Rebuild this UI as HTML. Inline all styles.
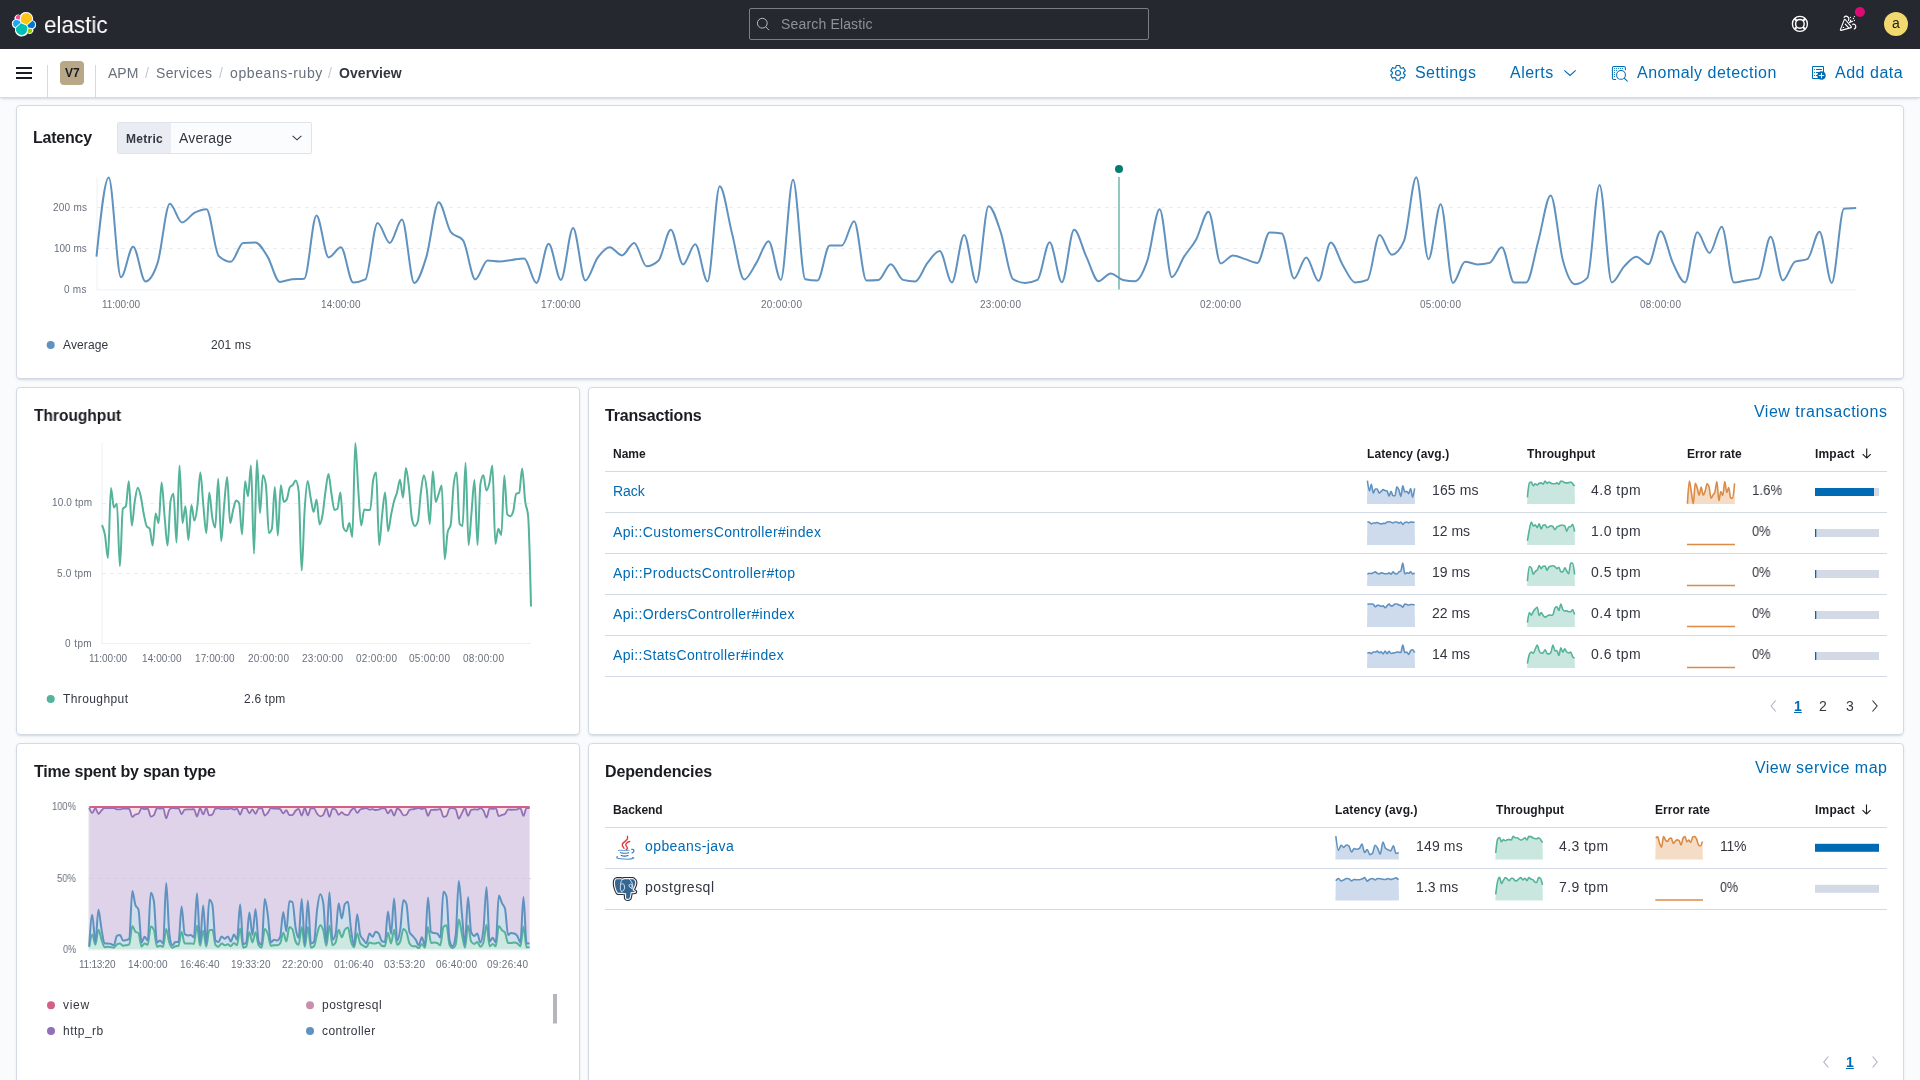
<!DOCTYPE html>
<html lang="en"><head><meta charset="utf-8"><title>opbeans-ruby - Services - APM - Elastic</title><style>
*{box-sizing:border-box}
html,body{margin:0;padding:0}
body{width:1920px;height:1080px;overflow:hidden;background:#fafbfd;font-family:"Liberation Sans",sans-serif;position:relative}
.t{position:absolute;white-space:pre;will-change:transform;font-family:"Liberation Sans",sans-serif}
.ov{position:absolute;left:0;top:0;pointer-events:none}
.abs{position:absolute}
.panel{position:absolute;background:#fff;border:1px solid #d3dae6;border-radius:4px;box-shadow:0 2px 2px -1px rgba(152,162,179,.3),0 1px 5px -2px rgba(152,162,179,.3)}
.hl{position:absolute;height:1px;background:#d3dae6}
</style></head><body>
<div class="abs" style="left:0;top:0;width:1920px;height:49px;background:#25282f"></div>
<div class="abs" style="left:749px;top:8px;width:400px;height:32px;border:1px solid #7b7e85;border-radius:2px;background:#25282f"></div>
<div class="abs" style="left:0;top:49px;width:1920px;height:49px;background:#fff;border-bottom:1px solid #d3dae6;box-shadow:0 2px 2px -1px rgba(152,162,179,.3),0 1px 5px -2px rgba(152,162,179,.3)"></div>
<div class="abs" style="left:47px;top:65px;width:1px;height:32px;background:#d3dae6"></div><div class="abs" style="left:95px;top:65px;width:1px;height:32px;background:#d3dae6"></div>
<div class="abs" style="left:60px;top:61px;width:24px;height:24px;border-radius:4px;background:#b9a888"></div>
<div class="panel" style="left:16px;top:105px;width:1888px;height:274px"></div>
<div class="panel" style="left:16px;top:387px;width:564px;height:348px"></div>
<div class="panel" style="left:588px;top:387px;width:1316px;height:348px"></div>
<div class="panel" style="left:16px;top:743px;width:564px;height:360px"></div>
<div class="panel" style="left:588px;top:743px;width:1316px;height:360px"></div>
<div class="abs" style="left:117px;top:122px;width:195px;height:32px;border:1px solid #dfe3ea;border-radius:2px;background:#fbfcfd"></div><div class="abs" style="left:118px;top:123px;width:53px;height:30px;background:#e9edf3"></div>
<div class="hl" style="left:605px;top:471px;width:1282px"></div><div class="hl" style="left:605px;top:512px;width:1282px"></div><div class="hl" style="left:605px;top:553px;width:1282px"></div><div class="hl" style="left:605px;top:594px;width:1282px"></div><div class="hl" style="left:605px;top:635px;width:1282px"></div><div class="hl" style="left:605px;top:676px;width:1282px"></div><div class="hl" style="left:605px;top:827px;width:1282px"></div><div class="hl" style="left:605px;top:868px;width:1282px"></div><div class="hl" style="left:605px;top:909px;width:1282px"></div>
<svg class="ov" width="1920" height="1080" viewBox="0 0 1920 1080"><line x1="97" y1="177" x2="97" y2="290" stroke="#eef0f3" stroke-width="1"/><line x1="96.5" y1="289.8" x2="1856" y2="289.8" stroke="#eef0f3" stroke-width="1"/><line x1="97" y1="207.5" x2="1856" y2="207.5" stroke="#eaecf0" stroke-width="1" stroke-dasharray="4 4"/><line x1="97" y1="248.5" x2="1856" y2="248.5" stroke="#eaecf0" stroke-width="1" stroke-dasharray="4 4"/><line x1="1119" y1="177" x2="1119" y2="289.5" stroke="#6fb5ac" stroke-width="1.5"/><circle cx="1119" cy="169" r="4" fill="#017d73"/><path d="M96.50,256.65C100.57,217.02,104.65,177.40,108.72,177.40C112.79,177.40,116.87,277.15,120.94,277.15C125.01,277.15,129.09,246.65,133.16,246.65C137.23,246.65,141.31,281.40,145.38,281.40C149.45,281.40,153.53,275.23,157.60,262.90C161.67,250.57,165.75,203.65,169.82,203.65C173.89,203.65,177.97,222.40,182.04,222.40C186.11,222.40,190.19,215.11,194.26,212.90C198.33,210.69,202.41,209.15,206.48,209.15C210.55,209.15,214.63,252.07,218.70,255.90C222.77,259.73,226.85,261.65,230.92,261.65C234.99,261.65,239.07,243.23,243.14,242.90C247.21,242.57,251.29,242.40,255.36,242.40C259.43,242.40,263.51,250.07,267.58,256.65C271.65,263.23,275.73,281.90,279.80,281.90C283.87,281.90,287.95,279.48,292.02,279.15C296.09,278.82,300.17,278.98,304.24,278.65C308.31,278.32,312.39,215.40,316.46,215.40C320.53,215.40,324.61,257.40,328.68,257.40C332.75,257.40,336.83,247.15,340.90,247.15C344.97,247.15,349.05,282.40,353.12,282.40C357.19,282.40,361.27,281.40,365.34,279.40C369.41,277.40,373.49,222.90,377.56,222.90C381.63,222.90,385.71,242.90,389.78,242.90C393.85,242.90,397.93,219.40,402.00,219.40C406.07,219.40,410.15,282.90,414.22,282.90C418.29,282.90,422.37,270.11,426.44,256.65C430.51,243.19,434.59,202.15,438.66,202.15C442.73,202.15,446.81,226.65,450.88,232.15C454.95,237.65,459.03,234.90,463.10,240.40C467.17,245.90,471.25,279.40,475.32,279.40C479.39,279.40,483.47,260.40,487.54,260.40C491.61,260.40,495.69,261.40,499.76,261.40C503.83,261.40,507.91,260.40,511.98,259.90C516.05,259.40,520.13,258.40,524.20,258.40C528.27,258.40,532.35,282.90,536.42,282.90C540.49,282.90,544.57,243.65,548.64,243.65C552.71,243.65,556.79,279.90,560.86,279.90C564.93,279.90,569.01,227.90,573.08,227.90C577.15,227.90,581.23,280.40,585.30,280.40C589.37,280.40,593.45,263.44,597.52,257.90C601.59,252.36,605.67,247.15,609.74,247.15C613.81,247.15,617.89,255.40,621.96,255.40C626.03,255.40,630.11,242.90,634.18,242.90C638.25,242.90,642.33,266.15,646.40,266.15C650.47,266.15,654.55,264.23,658.62,260.40C662.69,256.57,666.77,229.65,670.84,229.65C674.91,229.65,678.99,264.40,683.06,264.40C687.13,264.40,691.21,244.15,695.28,244.15C699.35,244.15,703.43,281.40,707.50,281.40C711.57,281.40,715.65,186.15,719.72,186.15C723.79,186.15,727.87,217.36,731.94,232.90C736.01,248.44,740.09,279.40,744.16,279.40C748.23,279.40,752.31,269.27,756.38,262.90C760.45,256.52,764.53,241.15,768.60,241.15C772.67,241.15,776.75,279.90,780.82,279.90C784.89,279.90,788.97,179.65,793.04,179.65C797.11,179.65,801.19,278.32,805.26,279.15C809.33,279.98,813.41,280.40,817.48,280.40C821.55,280.40,825.63,245.40,829.70,245.40C833.77,245.40,837.85,245.40,841.92,245.40C845.99,245.40,850.07,221.15,854.14,221.15C858.21,221.15,862.29,280.40,866.36,280.40C870.43,280.40,874.51,280.23,878.58,279.90C882.65,279.57,886.73,264.15,890.80,264.15C894.87,264.15,898.95,278.90,903.02,279.90C907.09,280.90,911.17,281.40,915.24,281.40C919.31,281.40,923.39,267.98,927.46,262.90C931.53,257.82,935.61,250.90,939.68,250.90C943.75,250.90,947.83,282.40,951.90,282.40C955.97,282.40,960.05,234.90,964.12,234.90C968.19,234.90,972.27,282.40,976.34,282.40C980.41,282.40,984.49,206.15,988.56,206.15C992.63,206.15,996.71,220.23,1000.78,232.40C1004.85,244.57,1008.93,276.65,1013.00,279.15C1017.07,281.65,1021.15,282.90,1025.22,282.90C1029.29,282.90,1033.37,281.90,1037.44,279.90C1041.51,277.90,1045.59,242.15,1049.66,242.15C1053.73,242.15,1057.81,282.15,1061.88,282.15C1065.95,282.15,1070.03,229.65,1074.10,229.65C1078.17,229.65,1082.25,248.07,1086.32,256.65C1090.39,265.23,1094.47,281.15,1098.54,281.15C1102.61,281.15,1106.69,273.40,1110.76,273.40C1114.83,273.40,1118.91,279.07,1122.98,279.90C1127.05,280.73,1131.13,281.15,1135.20,281.15C1139.27,281.15,1143.35,272.40,1147.42,260.40C1151.49,248.40,1155.57,209.15,1159.64,209.15C1163.71,209.15,1167.79,277.15,1171.86,277.15C1175.93,277.15,1180.01,262.98,1184.08,256.65C1188.15,250.32,1192.23,246.65,1196.30,239.15C1200.37,231.65,1204.45,211.65,1208.52,211.65C1212.59,211.65,1216.67,263.40,1220.74,263.40C1224.81,263.40,1228.89,255.40,1232.96,255.40C1237.03,255.40,1241.11,257.90,1245.18,259.15C1249.25,260.40,1253.33,262.90,1257.40,262.90C1261.47,262.90,1265.55,232.40,1269.62,232.40C1273.69,232.40,1277.77,232.73,1281.84,233.40C1285.91,234.07,1289.99,278.40,1294.06,278.40C1298.13,278.40,1302.21,257.40,1306.28,257.40C1310.35,257.40,1314.43,280.90,1318.50,280.90C1322.57,280.90,1326.65,242.40,1330.72,242.40C1334.79,242.40,1338.87,258.73,1342.94,265.40C1347.01,272.07,1351.09,282.40,1355.16,282.40C1359.23,282.40,1363.31,281.57,1367.38,279.90C1371.45,278.23,1375.53,234.90,1379.60,234.90C1383.67,234.90,1387.75,254.65,1391.82,254.65C1395.89,254.65,1399.97,250.07,1404.04,240.90C1408.11,231.73,1412.19,177.15,1416.26,177.15C1420.33,177.15,1424.41,259.15,1428.48,259.15C1432.55,259.15,1436.63,204.15,1440.70,204.15C1444.77,204.15,1448.85,282.90,1452.92,282.90C1456.99,282.90,1461.07,261.65,1465.14,261.65C1469.21,261.65,1473.29,264.40,1477.36,264.40C1481.43,264.40,1485.51,263.90,1489.58,262.90C1493.65,261.90,1497.73,247.15,1501.80,247.15C1505.87,247.15,1509.95,282.40,1514.02,282.40C1518.09,282.40,1522.17,282.40,1526.24,282.40C1530.31,282.40,1534.39,254.90,1538.46,240.40C1542.53,225.90,1546.61,195.40,1550.68,195.40C1554.75,195.40,1558.83,245.61,1562.90,260.40C1566.97,275.19,1571.05,284.15,1575.12,284.15C1579.19,284.15,1583.27,282.07,1587.34,277.90C1591.41,273.73,1595.49,184.90,1599.56,184.90C1603.63,184.90,1607.71,282.40,1611.78,282.40C1615.85,282.40,1619.93,270.94,1624.00,266.65C1628.07,262.36,1632.15,256.65,1636.22,256.65C1640.29,256.65,1644.37,264.15,1648.44,264.15C1652.51,264.15,1656.59,231.15,1660.66,231.15C1664.73,231.15,1668.81,254.36,1672.88,262.90C1676.95,271.44,1681.03,282.40,1685.10,282.40C1689.17,282.40,1693.25,232.15,1697.32,232.15C1701.39,232.15,1705.47,252.90,1709.54,252.90C1713.61,252.90,1717.69,226.65,1721.76,226.65C1725.83,226.65,1729.91,282.40,1733.98,282.40C1738.05,282.40,1742.13,281.07,1746.20,280.40C1750.27,279.73,1754.35,279.73,1758.42,278.40C1762.49,277.07,1766.57,236.65,1770.64,236.65C1774.71,236.65,1778.79,280.40,1782.86,280.40C1786.93,280.40,1791.01,263.32,1795.08,261.65C1799.15,259.98,1803.23,260.82,1807.30,259.15C1811.37,257.48,1815.45,231.65,1819.52,231.65C1823.59,231.65,1827.67,282.90,1831.74,282.90C1835.81,282.90,1839.89,209.15,1843.96,208.65C1848.03,208.15,1852.11,208.03,1856.18,207.90" fill="none" stroke="#6092c0" stroke-width="2" stroke-linejoin="round"/><circle cx="50.7" cy="345" r="4" fill="#6092c0"/></svg>
<svg class="ov" width="1920" height="1080" viewBox="0 0 1920 1080"><line x1="102" y1="443" x2="102" y2="644" stroke="#eef0f3" stroke-width="1"/><line x1="101.5" y1="643.5" x2="531" y2="643.5" stroke="#eef0f3" stroke-width="1"/><line x1="102" y1="503.5" x2="531" y2="503.5" stroke="#eaecf0" stroke-width="1" stroke-dasharray="4 4"/><line x1="102" y1="573.5" x2="531" y2="573.5" stroke="#eaecf0" stroke-width="1" stroke-dasharray="4 4"/><path d="M102.00,525.00C102.99,527.24,103.99,529.48,104.98,535.00C105.97,540.52,106.97,558.12,107.96,558.12C108.95,558.12,109.95,488.12,110.94,488.12C111.93,488.12,112.93,507.50,113.92,507.50C114.91,507.50,115.91,503.75,116.90,503.75C117.89,503.75,118.89,566.25,119.88,566.25C120.87,566.25,121.87,510.42,122.86,508.75C123.85,507.08,124.85,507.92,125.84,506.25C126.83,504.58,127.83,481.25,128.82,481.25C129.81,481.25,130.81,525.62,131.80,525.62C132.79,525.62,133.79,507.56,134.78,501.25C135.77,494.94,136.77,487.75,137.76,487.75C138.75,487.75,139.75,491.92,140.74,496.25C141.73,500.58,142.73,508.75,143.72,513.75C144.71,518.75,145.71,524.58,146.70,526.25C147.69,527.92,148.69,527.08,149.68,528.75C150.67,530.42,151.67,545.62,152.66,545.62C153.65,545.62,154.65,513.50,155.64,513.50C156.63,513.50,157.63,523.12,158.62,523.12C159.61,523.12,160.61,482.50,161.60,482.50C162.59,482.50,163.59,505.73,164.58,516.25C165.57,526.77,166.57,545.62,167.56,545.62C168.55,545.62,169.55,506.25,170.54,501.25C171.53,496.25,172.53,493.75,173.52,493.75C174.51,493.75,175.51,542.50,176.50,542.50C177.49,542.50,178.49,465.62,179.48,465.62C180.47,465.62,181.47,523.12,182.46,523.12C183.45,523.12,184.45,506.25,185.44,506.25C186.43,506.25,187.43,540.00,188.42,540.00C189.41,540.00,190.41,505.00,191.40,505.00C192.39,505.00,193.39,520.62,194.38,520.62C195.37,520.62,196.37,514.27,197.36,506.25C198.35,498.23,199.35,472.50,200.34,472.50C201.33,472.50,202.33,494.90,203.32,505.00C204.31,515.10,205.31,533.12,206.30,533.12C207.29,533.12,208.29,492.50,209.28,492.50C210.27,492.50,211.27,511.67,212.26,517.50C213.25,523.33,214.25,527.50,215.24,527.50C216.23,527.50,217.23,478.75,218.22,478.75C219.21,478.75,220.21,541.25,221.20,541.25C222.19,541.25,223.19,515.73,224.18,505.00C225.17,494.27,226.17,476.88,227.16,476.88C228.15,476.88,229.15,523.12,230.14,523.12C231.13,523.12,232.13,513.75,233.12,510.00C234.11,506.25,235.11,500.62,236.10,500.62C237.09,500.62,238.09,501.46,239.08,503.12C240.07,504.79,241.07,534.38,242.06,534.38C243.05,534.38,244.05,481.25,245.04,481.25C246.03,481.25,247.03,496.25,248.02,496.25C249.01,496.25,250.01,465.62,251.00,465.62C251.99,465.62,252.99,553.75,253.98,553.75C254.97,553.75,255.97,460.00,256.96,460.00C257.95,460.00,258.95,513.12,259.94,513.12C260.93,513.12,261.93,475.25,262.92,475.25C263.91,475.25,264.91,478.50,265.90,485.00C266.89,491.50,267.89,533.12,268.88,533.12C269.87,533.12,270.87,531.67,271.86,528.75C272.85,525.83,273.85,486.88,274.84,486.88C275.83,486.88,276.83,535.62,277.82,535.62C278.81,535.62,279.81,485.25,280.80,485.25C281.79,485.25,282.79,501.88,283.78,501.88C284.77,501.88,285.77,501.04,286.76,499.38C287.75,497.71,288.75,489.17,289.74,487.50C290.73,485.83,291.73,486.15,292.72,485.00C293.71,483.85,294.71,480.62,295.70,480.62C296.69,480.62,297.69,484.17,298.68,491.25C299.67,498.33,300.67,570.62,301.66,570.62C302.65,570.62,303.65,524.94,304.64,510.00C305.63,495.06,306.63,481.00,307.62,481.00C308.61,481.00,309.61,492.35,310.60,497.50C311.59,502.65,312.59,511.88,313.58,511.88C314.57,511.88,315.57,499.38,316.56,499.38C317.55,499.38,318.55,524.38,319.54,524.38C320.53,524.38,321.53,520.52,322.52,515.00C323.51,509.48,324.51,498.08,325.50,491.25C326.49,484.42,327.49,474.00,328.48,474.00C329.47,474.00,330.47,487.75,331.46,493.75C332.45,499.75,333.45,510.00,334.44,510.00C335.43,510.00,336.43,509.58,337.42,508.75C338.41,507.92,339.41,492.50,340.40,492.50C341.39,492.50,342.39,525.00,343.38,527.50C344.37,530.00,345.37,531.25,346.36,531.25C347.35,531.25,348.35,523.12,349.34,523.12C350.33,523.12,351.33,536.88,352.32,536.88C353.31,536.88,354.31,443.12,355.30,443.12C356.29,443.12,357.29,476.25,358.28,490.00C359.27,503.75,360.27,525.62,361.26,525.62C362.25,525.62,363.25,509.38,364.24,509.38C365.23,509.38,366.23,510.00,367.22,510.00C368.21,510.00,369.21,510.00,370.20,510.00C371.19,510.00,372.19,485.00,373.18,480.00C374.17,475.00,375.17,472.50,376.16,472.50C377.15,472.50,378.15,545.00,379.14,545.00C380.13,545.00,381.13,523.75,382.12,515.00C383.11,506.25,384.11,492.50,385.10,492.50C386.09,492.50,387.09,531.25,388.08,531.25C389.07,531.25,390.07,520.00,391.06,515.00C392.05,510.00,393.05,505.00,394.04,501.25C395.03,497.50,396.03,496.08,397.02,492.50C398.01,488.92,399.01,479.75,400.00,479.75C400.99,479.75,401.99,497.50,402.98,497.50C403.97,497.50,404.97,468.12,405.96,468.12C406.95,468.12,407.95,479.06,408.94,487.50C409.93,495.94,410.93,513.92,411.92,518.75C412.91,523.58,413.91,526.00,414.90,526.00C415.89,526.00,416.89,524.42,417.88,521.25C418.87,518.08,419.87,500.17,420.86,492.50C421.85,484.83,422.85,475.25,423.84,475.25C424.83,475.25,425.83,481.88,426.82,490.00C427.81,498.12,428.81,524.00,429.80,524.00C430.79,524.00,431.79,471.25,432.78,471.25C433.77,471.25,434.77,501.88,435.76,501.88C436.75,501.88,437.75,496.46,438.74,493.75C439.73,491.04,440.73,485.62,441.72,485.62C442.71,485.62,443.71,559.38,444.70,559.38C445.69,559.38,446.69,536.46,447.68,531.88C448.67,527.29,449.67,529.58,450.66,525.00C451.65,520.42,452.65,493.33,453.64,485.00C454.63,476.67,455.63,472.50,456.62,472.50C457.61,472.50,458.61,522.25,459.60,523.75C460.59,525.25,461.59,526.00,462.58,526.00C463.57,526.00,464.57,462.75,465.56,462.75C466.55,462.75,467.55,545.00,468.54,545.00C469.53,545.00,470.53,523.33,471.52,512.50C472.51,501.67,473.51,480.00,474.50,480.00C475.49,480.00,476.49,545.00,477.48,545.00C478.47,545.00,479.47,489.42,480.46,483.75C481.45,478.08,482.45,475.25,483.44,475.25C484.43,475.25,485.43,490.62,486.42,490.62C487.41,490.62,488.41,487.29,489.40,483.12C490.39,478.96,491.39,465.62,492.38,465.62C493.37,465.62,494.37,543.75,495.36,543.75C496.35,543.75,497.35,528.75,498.34,528.75C499.33,528.75,500.33,535.00,501.32,535.00C502.31,535.00,503.31,475.62,504.30,475.62C505.29,475.62,506.29,513.12,507.28,514.38C508.27,515.62,509.27,516.25,510.26,516.25C511.25,516.25,512.25,514.58,513.24,511.25C514.23,507.92,515.23,494.42,516.22,493.75C517.21,493.08,518.21,493.42,519.20,492.75C520.19,492.08,521.19,468.50,522.18,468.50C523.17,468.50,524.17,493.29,525.16,501.25C526.15,509.21,527.15,506.25,528.14,516.25C529.09,525.85,530.05,566.17,531.00,606.50" fill="none" stroke="#54b399" stroke-width="2" stroke-linejoin="round"/><circle cx="50.7" cy="699" r="4" fill="#54b399"/></svg>
<svg class="ov" width="1920" height="1080" viewBox="0 0 1920 1080"><path d="M89.20,807.10C90.23,807.10,91.25,807.10,92.28,807.10C93.31,807.10,94.33,807.10,95.36,807.10C96.39,807.10,97.41,807.10,98.44,807.10C99.47,807.10,100.49,807.10,101.52,807.10C102.55,807.10,103.57,807.10,104.60,807.10C105.63,807.10,106.65,807.10,107.68,807.10C108.71,807.10,109.73,807.10,110.76,807.10C111.79,807.10,112.81,807.10,113.84,807.10C114.87,807.10,115.89,807.10,116.92,807.10C117.95,807.10,118.97,807.10,120.00,807.10C121.03,807.10,122.05,807.10,123.08,807.10C124.11,807.10,125.13,807.10,126.16,807.10C127.19,807.10,128.21,807.10,129.24,807.10C130.27,807.10,131.29,807.10,132.32,807.10C133.35,807.10,134.37,807.10,135.40,807.10C136.43,807.10,137.45,807.10,138.48,807.10C139.51,807.10,140.53,807.10,141.56,807.10C142.59,807.10,143.61,807.10,144.64,807.10C145.67,807.10,146.69,807.10,147.72,807.10C148.75,807.10,149.77,807.10,150.80,807.10C151.83,807.10,152.85,807.10,153.88,807.10C154.91,807.10,155.93,807.10,156.96,807.10C157.99,807.10,159.01,807.10,160.04,807.10C161.07,807.10,162.09,807.10,163.12,807.10C164.15,807.10,165.17,807.10,166.20,807.10C167.23,807.10,168.25,807.10,169.28,807.10C170.31,807.10,171.33,807.10,172.36,807.10C173.39,807.10,174.41,807.10,175.44,807.10C176.47,807.10,177.49,807.10,178.52,807.10C179.55,807.10,180.57,807.10,181.60,807.10C182.63,807.10,183.65,807.10,184.68,807.10C185.71,807.10,186.73,807.10,187.76,807.10C188.79,807.10,189.81,807.10,190.84,807.10C191.87,807.10,192.89,807.10,193.92,807.10C194.95,807.10,195.97,807.10,197.00,807.10C198.03,807.10,199.05,807.10,200.08,807.10C201.11,807.10,202.13,807.10,203.16,807.10C204.19,807.10,205.21,807.10,206.24,807.10C207.27,807.10,208.29,807.10,209.32,807.10C210.35,807.10,211.37,807.10,212.40,807.10C213.43,807.10,214.45,807.10,215.48,807.10C216.51,807.10,217.53,807.10,218.56,807.10C219.59,807.10,220.61,807.10,221.64,807.10C222.67,807.10,223.69,807.10,224.72,807.10C225.75,807.10,226.77,807.10,227.80,807.10C228.83,807.10,229.85,807.10,230.88,807.10C231.91,807.10,232.93,807.10,233.96,807.10C234.99,807.10,236.01,807.10,237.04,807.10C238.07,807.10,239.09,807.10,240.12,807.10C241.15,807.10,242.17,807.10,243.20,807.10C244.23,807.10,245.25,807.10,246.28,807.10C247.31,807.10,248.33,807.10,249.36,807.10C250.39,807.10,251.41,807.10,252.44,807.10C253.47,807.10,254.49,807.10,255.52,807.10C256.55,807.10,257.57,807.10,258.60,807.10C259.63,807.10,260.65,807.10,261.68,807.10C262.71,807.10,263.73,807.10,264.76,807.10C265.79,807.10,266.81,807.10,267.84,807.10C268.87,807.10,269.89,807.10,270.92,807.10C271.95,807.10,272.97,807.10,274.00,807.10C275.03,807.10,276.05,807.10,277.08,807.10C278.11,807.10,279.13,807.10,280.16,807.10C281.19,807.10,282.21,807.10,283.24,807.10C284.27,807.10,285.29,807.10,286.32,807.10C287.35,807.10,288.37,807.10,289.40,807.10C290.43,807.10,291.45,807.10,292.48,807.10C293.51,807.10,294.53,807.10,295.56,807.10C296.59,807.10,297.61,807.10,298.64,807.10C299.67,807.10,300.69,807.10,301.72,807.10C302.75,807.10,303.77,807.10,304.80,807.10C305.83,807.10,306.85,807.10,307.88,807.10C308.91,807.10,309.93,807.10,310.96,807.10C311.99,807.10,313.01,807.10,314.04,807.10C315.07,807.10,316.09,807.10,317.12,807.10C318.15,807.10,319.17,807.10,320.20,807.10C321.23,807.10,322.25,807.10,323.28,807.10C324.31,807.10,325.33,807.10,326.36,807.10C327.39,807.10,328.41,807.10,329.44,807.10C330.47,807.10,331.49,807.10,332.52,807.10C333.55,807.10,334.57,807.10,335.60,807.10C336.63,807.10,337.65,807.10,338.68,807.10C339.71,807.10,340.73,807.10,341.76,807.10C342.79,807.10,343.81,807.10,344.84,807.10C345.87,807.10,346.89,807.10,347.92,807.10C348.95,807.10,349.97,807.10,351.00,807.10C352.03,807.10,353.05,807.10,354.08,807.10C355.11,807.10,356.13,807.10,357.16,807.10C358.19,807.10,359.21,807.10,360.24,807.10C361.27,807.10,362.29,807.10,363.32,807.10C364.35,807.10,365.37,807.10,366.40,807.10C367.43,807.10,368.45,807.10,369.48,807.10C370.51,807.10,371.53,807.10,372.56,807.10C373.59,807.10,374.61,807.10,375.64,807.10C376.67,807.10,377.69,807.10,378.72,807.10C379.75,807.10,380.77,807.10,381.80,807.10C382.83,807.10,383.85,807.10,384.88,807.10C385.91,807.10,386.93,807.10,387.96,807.10C388.99,807.10,390.01,807.10,391.04,807.10C392.07,807.10,393.09,807.10,394.12,807.10C395.15,807.10,396.17,807.10,397.20,807.10C398.23,807.10,399.25,807.10,400.28,807.10C401.31,807.10,402.33,807.10,403.36,807.10C404.39,807.10,405.41,807.10,406.44,807.10C407.47,807.10,408.49,807.10,409.52,807.10C410.55,807.10,411.57,807.10,412.60,807.10C413.63,807.10,414.65,807.10,415.68,807.10C416.71,807.10,417.73,807.10,418.76,807.10C419.79,807.10,420.81,807.10,421.84,807.10C422.87,807.10,423.89,807.10,424.92,807.10C425.95,807.10,426.97,807.10,428.00,807.10C429.03,807.10,430.05,807.10,431.08,807.10C432.11,807.10,433.13,807.10,434.16,807.10C435.19,807.10,436.21,807.10,437.24,807.10C438.27,807.10,439.29,807.10,440.32,807.10C441.35,807.10,442.37,807.10,443.40,807.10C444.43,807.10,445.45,807.10,446.48,807.10C447.51,807.10,448.53,807.10,449.56,807.10C450.59,807.10,451.61,807.10,452.64,807.10C453.67,807.10,454.69,807.10,455.72,807.10C456.75,807.10,457.77,807.10,458.80,807.10C459.83,807.10,460.85,807.10,461.88,807.10C462.91,807.10,463.93,807.10,464.96,807.10C465.99,807.10,467.01,807.10,468.04,807.10C469.07,807.10,470.09,807.10,471.12,807.10C472.15,807.10,473.17,807.10,474.20,807.10C475.23,807.10,476.25,807.10,477.28,807.10C478.31,807.10,479.33,807.10,480.36,807.10C481.39,807.10,482.41,807.10,483.44,807.10C484.47,807.10,485.49,807.10,486.52,807.10C487.55,807.10,488.57,807.10,489.60,807.10C490.63,807.10,491.65,807.10,492.68,807.10C493.71,807.10,494.73,807.10,495.76,807.10C496.79,807.10,497.81,807.10,498.84,807.10C499.87,807.10,500.89,807.10,501.92,807.10C502.95,807.10,503.97,807.10,505.00,807.10C506.03,807.10,507.05,807.10,508.08,807.10C509.11,807.10,510.13,807.10,511.16,807.10C512.19,807.10,513.21,807.10,514.24,807.10C515.27,807.10,516.29,807.10,517.32,807.10C518.35,807.10,519.37,807.10,520.40,807.10C521.43,807.10,522.45,807.10,523.48,807.10C524.51,807.10,525.53,807.10,526.56,807.10C527.59,807.10,528.61,807.10,529.64,807.10L529.64,808.02C528.61,808.02,527.59,808.02,526.56,808.02C525.53,808.02,524.51,815.90,523.48,815.90C522.45,815.90,521.43,808.18,520.40,808.18C519.37,808.18,518.35,809.04,517.32,809.29C516.29,809.54,515.27,809.64,514.24,809.69C513.21,809.74,512.19,809.77,511.16,809.77C510.13,809.77,509.11,809.45,508.08,809.45C507.05,809.45,506.03,813.28,505.00,813.91C503.97,814.55,502.95,814.50,501.92,814.87C500.89,815.24,499.87,816.14,498.84,816.14C497.81,816.14,496.79,808.18,495.76,808.18C494.73,808.18,493.71,808.97,492.68,808.97C491.65,808.97,490.63,808.33,489.60,808.33C488.57,808.33,487.55,817.58,486.52,817.58C485.49,817.58,484.47,811.89,483.44,810.41C482.41,808.92,481.39,808.18,480.36,808.18C479.33,808.18,478.31,809.69,477.28,809.69C476.25,809.69,475.23,809.29,474.20,809.29C473.17,809.29,472.15,809.50,471.12,809.93C470.09,810.35,469.07,815.90,468.04,815.90C467.01,815.90,465.99,808.00,464.96,808.00C463.93,808.00,462.91,811.35,461.88,813.12C460.85,814.88,459.83,818.61,458.80,818.61C457.77,818.61,456.75,810.42,455.72,809.45C454.69,808.48,453.67,808.00,452.64,808.00C451.61,808.00,450.59,808.16,449.56,808.49C448.53,808.82,447.51,815.45,446.48,815.98C445.45,816.52,444.43,816.78,443.40,816.78C442.37,816.78,441.35,808.97,440.32,808.97C439.29,808.97,438.27,809.64,437.24,809.69C436.21,809.74,435.19,809.73,434.16,809.77C433.13,809.81,432.11,809.82,431.08,809.93C430.05,810.03,429.03,815.83,428.00,815.83C426.97,815.83,425.95,808.00,424.92,808.00C423.89,808.00,422.87,809.05,421.84,809.05C420.81,809.05,419.79,808.00,418.76,808.00C417.73,808.00,416.71,808.44,415.68,808.65C414.65,808.87,413.63,809.08,412.60,809.29C411.57,809.50,410.55,809.50,409.52,809.93C408.49,810.35,407.47,814.28,406.44,814.71C405.41,815.13,404.39,815.35,403.36,815.35C402.33,815.35,401.31,811.55,400.28,810.41C399.25,809.26,398.23,808.49,397.20,808.49C396.17,808.49,395.15,815.67,394.12,815.67C393.09,815.67,392.07,809.61,391.04,809.61C390.01,809.61,388.99,813.43,387.96,813.43C386.93,813.43,385.91,808.25,384.88,808.25C383.85,808.25,382.83,808.31,381.80,808.41C380.77,808.52,379.75,809.48,378.72,809.69C377.69,809.90,376.67,810.01,375.64,810.01C374.61,810.01,373.59,809.13,372.56,809.13C371.53,809.13,370.51,809.69,369.48,809.69C368.45,809.69,367.43,808.02,366.40,808.02C365.37,808.02,364.35,808.41,363.32,808.65C362.29,808.89,361.27,808.92,360.24,809.45C359.21,809.98,358.19,812.96,357.16,812.96C356.13,812.96,355.11,808.00,354.08,808.00C353.05,808.00,352.03,809.22,351.00,810.41C349.97,811.59,348.95,815.11,347.92,815.11C346.89,815.11,345.87,814.98,344.84,814.71C343.81,814.44,342.79,812.24,341.76,812.24C340.73,812.24,339.71,814.79,338.68,814.79C337.65,814.79,336.63,810.25,335.60,809.61C334.57,808.97,333.55,808.65,332.52,808.65C331.49,808.65,330.47,816.70,329.44,816.70C328.41,816.70,327.39,808.18,326.36,808.18C325.33,808.18,324.31,813.86,323.28,814.87C322.25,815.88,321.23,816.38,320.20,816.38C319.17,816.38,318.15,815.09,317.12,813.75C316.09,812.41,315.07,808.55,314.04,808.33C313.01,808.12,311.99,808.02,310.96,808.02C309.93,808.02,308.91,815.27,307.88,815.27C306.85,815.27,305.83,808.00,304.80,808.00C303.77,808.00,302.75,815.59,301.72,815.59C300.69,815.59,299.67,808.97,298.64,808.97C297.61,808.97,296.59,809.72,295.56,810.73C294.53,811.73,293.51,814.92,292.48,815.03C291.45,815.13,290.43,815.19,289.40,815.19C288.37,815.19,287.35,810.09,286.32,810.09C285.29,810.09,284.27,813.35,283.24,813.35C282.21,813.35,281.19,809.56,280.16,809.13C279.13,808.71,278.11,808.49,277.08,808.49C276.05,808.49,275.03,808.65,274.00,808.65C272.97,808.65,271.95,808.18,270.92,808.18C269.89,808.18,268.87,811.56,267.84,812.80C266.81,814.03,265.79,815.59,264.76,815.59C263.73,815.59,262.71,808.00,261.68,808.00C260.65,808.00,259.63,808.11,258.60,808.33C257.57,808.56,256.55,813.83,255.52,813.83C254.49,813.83,253.47,809.45,252.44,809.45C251.41,809.45,250.39,813.28,249.36,813.28C248.33,813.28,247.31,808.29,246.28,808.18C245.25,808.06,244.23,808.00,243.20,808.00C242.17,808.00,241.15,814.63,240.12,814.63C239.09,814.63,238.07,808.65,237.04,808.65C236.01,808.65,234.99,809.53,233.96,809.53C232.93,809.53,231.91,808.33,230.88,808.33C229.85,808.33,228.83,809.21,227.80,809.21C226.77,809.21,225.75,808.81,224.72,808.81C223.69,808.81,222.67,809.21,221.64,809.21C220.61,809.21,219.59,808.25,218.56,808.25C217.53,808.25,216.51,808.33,215.48,808.49C214.45,808.65,213.43,813.97,212.40,814.55C211.37,815.13,210.35,815.43,209.32,815.43C208.29,815.43,207.27,808.00,206.24,808.00C205.21,808.00,204.19,814.47,203.16,814.47C202.13,814.47,201.11,808.18,200.08,808.18C199.05,808.18,198.03,816.54,197.00,816.54C195.97,816.54,194.95,809.05,193.92,809.05C192.89,809.05,191.87,809.45,190.84,809.45C189.81,809.45,188.79,809.37,187.76,809.37C186.73,809.37,185.71,809.45,184.68,809.61C183.65,809.77,182.63,814.31,181.60,814.31C180.57,814.31,179.55,808.25,178.52,808.25C177.49,808.25,176.47,808.25,175.44,808.25C174.41,808.25,173.39,808.00,172.36,808.00C171.33,808.00,170.31,808.59,169.28,809.77C168.25,810.95,167.23,818.30,166.20,818.30C165.17,818.30,164.15,808.02,163.12,808.02C162.09,808.02,161.07,808.49,160.04,808.49C159.01,808.49,157.99,808.18,156.96,808.18C155.93,808.18,154.91,814.23,153.88,815.19C152.85,816.14,151.83,816.62,150.80,816.62C149.77,816.62,148.75,808.49,147.72,808.49C146.69,808.49,145.67,809.13,144.64,809.13C143.61,809.13,142.59,808.18,141.56,808.18C140.53,808.18,139.51,813.22,138.48,813.75C137.45,814.28,136.43,814.02,135.40,814.55C134.37,815.08,133.35,816.94,132.32,816.94C131.29,816.94,130.27,808.97,129.24,808.81C128.21,808.65,127.19,808.63,126.16,808.57C125.13,808.52,124.11,808.49,123.08,808.49C122.05,808.49,121.03,809.45,120.00,809.45C118.97,809.45,117.95,809.40,116.92,809.29C115.89,809.18,114.87,808.00,113.84,808.00C112.81,808.00,111.79,808.00,110.76,808.00C109.73,808.00,108.71,808.02,107.68,808.02C106.65,808.02,105.63,808.02,104.60,808.02C103.57,808.02,102.55,809.45,101.52,810.41C100.49,811.36,99.47,813.75,98.44,813.75C97.41,813.75,96.39,808.18,95.36,808.18C94.33,808.18,93.31,812.88,92.28,812.88C91.25,812.88,90.23,810.44,89.20,808.00Z" fill="#f3dfe7"/><path d="M89.20,808.00C90.23,810.44,91.25,812.88,92.28,812.88C93.31,812.88,94.33,808.18,95.36,808.18C96.39,808.18,97.41,813.75,98.44,813.75C99.47,813.75,100.49,811.36,101.52,810.41C102.55,809.45,103.57,808.02,104.60,808.02C105.63,808.02,106.65,808.02,107.68,808.02C108.71,808.02,109.73,808.00,110.76,808.00C111.79,808.00,112.81,808.00,113.84,808.00C114.87,808.00,115.89,809.18,116.92,809.29C117.95,809.40,118.97,809.45,120.00,809.45C121.03,809.45,122.05,808.49,123.08,808.49C124.11,808.49,125.13,808.52,126.16,808.57C127.19,808.63,128.21,808.65,129.24,808.81C130.27,808.97,131.29,816.94,132.32,816.94C133.35,816.94,134.37,815.08,135.40,814.55C136.43,814.02,137.45,814.28,138.48,813.75C139.51,813.22,140.53,808.18,141.56,808.18C142.59,808.18,143.61,809.13,144.64,809.13C145.67,809.13,146.69,808.49,147.72,808.49C148.75,808.49,149.77,816.62,150.80,816.62C151.83,816.62,152.85,816.14,153.88,815.19C154.91,814.23,155.93,808.18,156.96,808.18C157.99,808.18,159.01,808.49,160.04,808.49C161.07,808.49,162.09,808.02,163.12,808.02C164.15,808.02,165.17,818.30,166.20,818.30C167.23,818.30,168.25,810.95,169.28,809.77C170.31,808.59,171.33,808.00,172.36,808.00C173.39,808.00,174.41,808.25,175.44,808.25C176.47,808.25,177.49,808.25,178.52,808.25C179.55,808.25,180.57,814.31,181.60,814.31C182.63,814.31,183.65,809.77,184.68,809.61C185.71,809.45,186.73,809.37,187.76,809.37C188.79,809.37,189.81,809.45,190.84,809.45C191.87,809.45,192.89,809.05,193.92,809.05C194.95,809.05,195.97,816.54,197.00,816.54C198.03,816.54,199.05,808.18,200.08,808.18C201.11,808.18,202.13,814.47,203.16,814.47C204.19,814.47,205.21,808.00,206.24,808.00C207.27,808.00,208.29,815.43,209.32,815.43C210.35,815.43,211.37,815.13,212.40,814.55C213.43,813.97,214.45,808.65,215.48,808.49C216.51,808.33,217.53,808.25,218.56,808.25C219.59,808.25,220.61,809.21,221.64,809.21C222.67,809.21,223.69,808.81,224.72,808.81C225.75,808.81,226.77,809.21,227.80,809.21C228.83,809.21,229.85,808.33,230.88,808.33C231.91,808.33,232.93,809.53,233.96,809.53C234.99,809.53,236.01,808.65,237.04,808.65C238.07,808.65,239.09,814.63,240.12,814.63C241.15,814.63,242.17,808.00,243.20,808.00C244.23,808.00,245.25,808.06,246.28,808.18C247.31,808.29,248.33,813.28,249.36,813.28C250.39,813.28,251.41,809.45,252.44,809.45C253.47,809.45,254.49,813.83,255.52,813.83C256.55,813.83,257.57,808.56,258.60,808.33C259.63,808.11,260.65,808.00,261.68,808.00C262.71,808.00,263.73,815.59,264.76,815.59C265.79,815.59,266.81,814.03,267.84,812.80C268.87,811.56,269.89,808.18,270.92,808.18C271.95,808.18,272.97,808.65,274.00,808.65C275.03,808.65,276.05,808.49,277.08,808.49C278.11,808.49,279.13,808.71,280.16,809.13C281.19,809.56,282.21,813.35,283.24,813.35C284.27,813.35,285.29,810.09,286.32,810.09C287.35,810.09,288.37,815.19,289.40,815.19C290.43,815.19,291.45,815.13,292.48,815.03C293.51,814.92,294.53,811.73,295.56,810.73C296.59,809.72,297.61,808.97,298.64,808.97C299.67,808.97,300.69,815.59,301.72,815.59C302.75,815.59,303.77,808.00,304.80,808.00C305.83,808.00,306.85,815.27,307.88,815.27C308.91,815.27,309.93,808.02,310.96,808.02C311.99,808.02,313.01,808.12,314.04,808.33C315.07,808.55,316.09,812.41,317.12,813.75C318.15,815.09,319.17,816.38,320.20,816.38C321.23,816.38,322.25,815.88,323.28,814.87C324.31,813.86,325.33,808.18,326.36,808.18C327.39,808.18,328.41,816.70,329.44,816.70C330.47,816.70,331.49,808.65,332.52,808.65C333.55,808.65,334.57,808.97,335.60,809.61C336.63,810.25,337.65,814.79,338.68,814.79C339.71,814.79,340.73,812.24,341.76,812.24C342.79,812.24,343.81,814.44,344.84,814.71C345.87,814.98,346.89,815.11,347.92,815.11C348.95,815.11,349.97,811.59,351.00,810.41C352.03,809.22,353.05,808.00,354.08,808.00C355.11,808.00,356.13,812.96,357.16,812.96C358.19,812.96,359.21,809.98,360.24,809.45C361.27,808.92,362.29,808.89,363.32,808.65C364.35,808.41,365.37,808.02,366.40,808.02C367.43,808.02,368.45,809.69,369.48,809.69C370.51,809.69,371.53,809.13,372.56,809.13C373.59,809.13,374.61,810.01,375.64,810.01C376.67,810.01,377.69,809.90,378.72,809.69C379.75,809.48,380.77,808.52,381.80,808.41C382.83,808.31,383.85,808.25,384.88,808.25C385.91,808.25,386.93,813.43,387.96,813.43C388.99,813.43,390.01,809.61,391.04,809.61C392.07,809.61,393.09,815.67,394.12,815.67C395.15,815.67,396.17,808.49,397.20,808.49C398.23,808.49,399.25,809.26,400.28,810.41C401.31,811.55,402.33,815.35,403.36,815.35C404.39,815.35,405.41,815.13,406.44,814.71C407.47,814.28,408.49,810.35,409.52,809.93C410.55,809.50,411.57,809.50,412.60,809.29C413.63,809.08,414.65,808.87,415.68,808.65C416.71,808.44,417.73,808.00,418.76,808.00C419.79,808.00,420.81,809.05,421.84,809.05C422.87,809.05,423.89,808.00,424.92,808.00C425.95,808.00,426.97,815.83,428.00,815.83C429.03,815.83,430.05,810.03,431.08,809.93C432.11,809.82,433.13,809.81,434.16,809.77C435.19,809.73,436.21,809.74,437.24,809.69C438.27,809.64,439.29,808.97,440.32,808.97C441.35,808.97,442.37,816.78,443.40,816.78C444.43,816.78,445.45,816.52,446.48,815.98C447.51,815.45,448.53,808.82,449.56,808.49C450.59,808.16,451.61,808.00,452.64,808.00C453.67,808.00,454.69,808.48,455.72,809.45C456.75,810.42,457.77,818.61,458.80,818.61C459.83,818.61,460.85,814.88,461.88,813.12C462.91,811.35,463.93,808.00,464.96,808.00C465.99,808.00,467.01,815.90,468.04,815.90C469.07,815.90,470.09,810.35,471.12,809.93C472.15,809.50,473.17,809.29,474.20,809.29C475.23,809.29,476.25,809.69,477.28,809.69C478.31,809.69,479.33,808.18,480.36,808.18C481.39,808.18,482.41,808.92,483.44,810.41C484.47,811.89,485.49,817.58,486.52,817.58C487.55,817.58,488.57,808.33,489.60,808.33C490.63,808.33,491.65,808.97,492.68,808.97C493.71,808.97,494.73,808.18,495.76,808.18C496.79,808.18,497.81,816.14,498.84,816.14C499.87,816.14,500.89,815.24,501.92,814.87C502.95,814.50,503.97,814.55,505.00,813.91C506.03,813.28,507.05,809.45,508.08,809.45C509.11,809.45,510.13,809.77,511.16,809.77C512.19,809.77,513.21,809.74,514.24,809.69C515.27,809.64,516.29,809.54,517.32,809.29C518.35,809.04,519.37,808.18,520.40,808.18C521.43,808.18,522.45,815.90,523.48,815.90C524.51,815.90,525.53,808.02,526.56,808.02C527.59,808.02,528.61,808.02,529.64,808.02L529.64,943.41C528.61,943.41,527.59,943.41,526.56,943.41C525.53,943.41,524.51,897.00,523.48,897.00C522.45,897.00,521.43,942.47,520.40,942.47C519.37,942.47,518.35,937.39,517.32,935.91C516.29,934.42,515.27,933.88,514.24,933.56C513.21,933.25,512.19,933.09,511.16,933.09C510.13,933.09,509.11,934.97,508.08,934.97C507.05,934.97,506.03,912.47,505.00,908.72C503.97,904.97,502.95,905.28,501.92,903.10C500.89,900.91,499.87,895.60,498.84,895.60C497.81,895.60,496.79,942.47,495.76,942.47C494.73,942.47,493.71,937.78,492.68,937.78C491.65,937.78,490.63,941.53,489.60,941.53C488.57,941.53,487.55,887.16,486.52,887.16C485.49,887.16,484.47,920.59,483.44,929.34C482.41,938.09,481.39,942.47,480.36,942.47C479.33,942.47,478.31,933.56,477.28,933.56C476.25,933.56,475.23,935.91,474.20,935.91C473.17,935.91,472.15,934.66,471.12,932.16C470.09,929.66,469.07,897.00,468.04,897.00C467.01,897.00,465.99,944.34,464.96,944.34C463.93,944.34,462.91,923.95,461.88,913.41C460.85,902.86,459.83,881.06,458.80,881.06C457.77,881.06,456.75,927.47,455.72,934.97C454.69,942.47,453.67,946.22,452.64,946.22C451.61,946.22,450.59,944.34,449.56,940.59C448.53,936.84,447.51,899.66,446.48,896.53C445.45,893.41,444.43,891.85,443.40,891.85C442.37,891.85,441.35,937.78,440.32,937.78C439.29,937.78,438.27,933.88,437.24,933.56C436.21,933.25,435.19,933.33,434.16,933.09C433.13,932.86,432.11,932.78,431.08,932.16C430.05,931.53,429.03,897.47,428.00,897.47C426.97,897.47,425.95,945.28,424.92,945.28C423.89,945.28,422.87,937.31,421.84,937.31C420.81,937.31,419.79,945.28,418.76,945.28C417.73,945.28,416.71,941.22,415.68,939.66C414.65,938.09,413.63,937.16,412.60,935.91C411.57,934.66,410.55,934.66,409.52,932.16C408.49,929.66,407.47,906.53,406.44,904.03C405.41,901.53,404.39,900.28,403.36,900.28C402.33,900.28,401.31,922.63,400.28,929.34C399.25,936.06,398.23,940.59,397.20,940.59C396.17,940.59,395.15,898.41,394.12,898.41C393.09,898.41,392.07,934.03,391.04,934.03C390.01,934.03,388.99,911.53,387.96,911.53C386.93,911.53,385.91,942.00,384.88,942.00C383.85,942.00,382.83,941.69,381.80,941.06C380.77,940.44,379.75,934.81,378.72,933.56C377.69,932.31,376.67,931.69,375.64,931.69C374.61,931.69,373.59,936.84,372.56,936.84C371.53,936.84,370.51,933.56,369.48,933.56C368.45,933.56,367.43,943.41,366.40,943.41C365.37,943.41,364.35,941.06,363.32,939.66C362.29,938.25,361.27,938.09,360.24,934.97C359.21,931.84,358.19,914.34,357.16,914.34C356.13,914.34,355.11,945.28,354.08,945.28C353.05,945.28,352.03,936.61,351.00,929.34C349.97,922.08,348.95,901.69,347.92,901.69C346.89,901.69,345.87,902.47,344.84,904.03C343.81,905.60,342.79,918.56,341.76,918.56C340.73,918.56,339.71,903.56,338.68,903.56C337.65,903.56,336.63,930.28,335.60,934.03C334.57,937.78,333.55,939.66,332.52,939.66C331.49,939.66,330.47,892.31,329.44,892.31C328.41,892.31,327.39,942.47,326.36,942.47C325.33,942.47,324.31,909.03,323.28,903.10C322.25,897.16,321.23,894.19,320.20,894.19C319.17,894.19,318.15,901.77,317.12,909.66C316.09,917.55,315.07,940.28,314.04,941.53C313.01,942.78,311.99,943.41,310.96,943.41C309.93,943.41,308.91,900.75,307.88,900.75C306.85,900.75,305.83,944.34,304.80,944.34C303.77,944.34,302.75,898.88,301.72,898.88C300.69,898.88,299.67,937.78,298.64,937.78C297.61,937.78,296.59,933.41,295.56,927.47C294.53,921.53,293.51,902.78,292.48,902.16C291.45,901.53,290.43,901.22,289.40,901.22C288.37,901.22,287.35,931.22,286.32,931.22C285.29,931.22,284.27,912.00,283.24,912.00C282.21,912.00,281.19,934.34,280.16,936.84C279.13,939.34,278.11,940.59,277.08,940.59C276.05,940.59,275.03,939.66,274.00,939.66C272.97,939.66,271.95,942.47,270.92,942.47C269.89,942.47,268.87,922.55,267.84,915.28C266.81,908.02,265.79,898.88,264.76,898.88C263.73,898.88,262.71,944.81,261.68,944.81C260.65,944.81,259.63,943.72,258.60,941.53C257.57,939.34,256.55,909.19,255.52,909.19C254.49,909.19,253.47,934.97,252.44,934.97C251.41,934.97,250.39,912.47,249.36,912.47C248.33,912.47,247.31,941.22,246.28,942.47C245.25,943.72,244.23,944.34,243.20,944.34C242.17,944.34,241.15,904.50,240.12,904.50C239.09,904.50,238.07,939.66,237.04,939.66C236.01,939.66,234.99,934.50,233.96,934.50C232.93,934.50,231.91,941.53,230.88,941.53C229.85,941.53,228.83,936.38,227.80,936.38C226.77,936.38,225.75,938.72,224.72,938.72C223.69,938.72,222.67,936.38,221.64,936.38C220.61,936.38,219.59,942.00,218.56,942.00C217.53,942.00,216.51,941.53,215.48,940.59C214.45,939.66,213.43,908.41,212.40,904.97C211.37,901.53,210.35,899.81,209.32,899.81C208.29,899.81,207.27,944.34,206.24,944.34C205.21,944.34,204.19,905.44,203.16,905.44C202.13,905.44,201.11,942.47,200.08,942.47C199.05,942.47,198.03,893.25,197.00,893.25C195.97,893.25,194.95,937.31,193.92,937.31C192.89,937.31,191.87,934.97,190.84,934.97C189.81,934.97,188.79,935.44,187.76,935.44C186.73,935.44,185.71,934.97,184.68,934.03C183.65,933.09,182.63,906.38,181.60,906.38C180.57,906.38,179.55,942.00,178.52,942.00C177.49,942.00,176.47,942.00,175.44,942.00C174.41,942.00,173.39,945.28,172.36,945.28C171.33,945.28,170.31,941.22,169.28,933.09C168.25,924.97,167.23,882.94,166.20,882.94C165.17,882.94,164.15,943.41,163.12,943.41C162.09,943.41,161.07,940.59,160.04,940.59C159.01,940.59,157.99,942.47,156.96,942.47C155.93,942.47,154.91,906.85,153.88,901.22C152.85,895.60,151.83,892.78,150.80,892.78C149.77,892.78,148.75,940.59,147.72,940.59C146.69,940.59,145.67,936.84,144.64,936.84C143.61,936.84,142.59,942.47,141.56,942.47C140.53,942.47,139.51,912.78,138.48,909.66C137.45,906.53,136.43,908.10,135.40,904.97C134.37,901.85,133.35,890.91,132.32,890.91C131.29,890.91,130.27,937.78,129.24,938.72C128.21,939.66,127.19,939.81,126.16,940.13C125.13,940.44,124.11,940.59,123.08,940.59C122.05,940.59,121.03,934.97,120.00,934.97C118.97,934.97,117.95,935.28,116.92,935.91C115.89,936.53,114.87,945.28,113.84,945.28C112.81,945.28,111.79,944.19,110.76,943.88C109.73,943.56,108.71,943.41,107.68,943.41C106.65,943.41,105.63,943.41,104.60,943.41C103.57,943.41,102.55,934.97,101.52,929.34C100.49,923.72,99.47,909.66,98.44,909.66C97.41,909.66,96.39,942.47,95.36,942.47C94.33,942.47,93.31,914.81,92.28,914.81C91.25,914.81,90.23,930.28,89.20,945.75Z" fill="#ded3e9"/><path d="M89.20,945.75C90.23,930.28,91.25,914.81,92.28,914.81C93.31,914.81,94.33,942.47,95.36,942.47C96.39,942.47,97.41,909.66,98.44,909.66C99.47,909.66,100.49,923.72,101.52,929.34C102.55,934.97,103.57,943.41,104.60,943.41C105.63,943.41,106.65,943.41,107.68,943.41C108.71,943.41,109.73,943.56,110.76,943.88C111.79,944.19,112.81,945.28,113.84,945.28C114.87,945.28,115.89,936.53,116.92,935.91C117.95,935.28,118.97,934.97,120.00,934.97C121.03,934.97,122.05,940.59,123.08,940.59C124.11,940.59,125.13,940.44,126.16,940.13C127.19,939.81,128.21,939.66,129.24,938.72C130.27,937.78,131.29,890.91,132.32,890.91C133.35,890.91,134.37,901.85,135.40,904.97C136.43,908.10,137.45,906.53,138.48,909.66C139.51,912.78,140.53,942.47,141.56,942.47C142.59,942.47,143.61,936.84,144.64,936.84C145.67,936.84,146.69,940.59,147.72,940.59C148.75,940.59,149.77,892.78,150.80,892.78C151.83,892.78,152.85,895.60,153.88,901.22C154.91,906.85,155.93,942.47,156.96,942.47C157.99,942.47,159.01,940.59,160.04,940.59C161.07,940.59,162.09,943.41,163.12,943.41C164.15,943.41,165.17,882.94,166.20,882.94C167.23,882.94,168.25,924.97,169.28,933.09C170.31,941.22,171.33,945.28,172.36,945.28C173.39,945.28,174.41,942.00,175.44,942.00C176.47,942.00,177.49,942.00,178.52,942.00C179.55,942.00,180.57,906.38,181.60,906.38C182.63,906.38,183.65,933.09,184.68,934.03C185.71,934.97,186.73,935.44,187.76,935.44C188.79,935.44,189.81,934.97,190.84,934.97C191.87,934.97,192.89,937.31,193.92,937.31C194.95,937.31,195.97,893.25,197.00,893.25C198.03,893.25,199.05,942.47,200.08,942.47C201.11,942.47,202.13,905.44,203.16,905.44C204.19,905.44,205.21,944.34,206.24,944.34C207.27,944.34,208.29,899.81,209.32,899.81C210.35,899.81,211.37,901.53,212.40,904.97C213.43,908.41,214.45,939.66,215.48,940.59C216.51,941.53,217.53,942.00,218.56,942.00C219.59,942.00,220.61,936.38,221.64,936.38C222.67,936.38,223.69,938.72,224.72,938.72C225.75,938.72,226.77,936.38,227.80,936.38C228.83,936.38,229.85,941.53,230.88,941.53C231.91,941.53,232.93,934.50,233.96,934.50C234.99,934.50,236.01,939.66,237.04,939.66C238.07,939.66,239.09,904.50,240.12,904.50C241.15,904.50,242.17,944.34,243.20,944.34C244.23,944.34,245.25,943.72,246.28,942.47C247.31,941.22,248.33,912.47,249.36,912.47C250.39,912.47,251.41,934.97,252.44,934.97C253.47,934.97,254.49,909.19,255.52,909.19C256.55,909.19,257.57,939.34,258.60,941.53C259.63,943.72,260.65,944.81,261.68,944.81C262.71,944.81,263.73,898.88,264.76,898.88C265.79,898.88,266.81,908.02,267.84,915.28C268.87,922.55,269.89,942.47,270.92,942.47C271.95,942.47,272.97,939.66,274.00,939.66C275.03,939.66,276.05,940.59,277.08,940.59C278.11,940.59,279.13,939.34,280.16,936.84C281.19,934.34,282.21,912.00,283.24,912.00C284.27,912.00,285.29,931.22,286.32,931.22C287.35,931.22,288.37,901.22,289.40,901.22C290.43,901.22,291.45,901.53,292.48,902.16C293.51,902.78,294.53,921.53,295.56,927.47C296.59,933.41,297.61,937.78,298.64,937.78C299.67,937.78,300.69,898.88,301.72,898.88C302.75,898.88,303.77,944.34,304.80,944.34C305.83,944.34,306.85,900.75,307.88,900.75C308.91,900.75,309.93,943.41,310.96,943.41C311.99,943.41,313.01,942.78,314.04,941.53C315.07,940.28,316.09,917.55,317.12,909.66C318.15,901.77,319.17,894.19,320.20,894.19C321.23,894.19,322.25,897.16,323.28,903.10C324.31,909.03,325.33,942.47,326.36,942.47C327.39,942.47,328.41,892.31,329.44,892.31C330.47,892.31,331.49,939.66,332.52,939.66C333.55,939.66,334.57,937.78,335.60,934.03C336.63,930.28,337.65,903.56,338.68,903.56C339.71,903.56,340.73,918.56,341.76,918.56C342.79,918.56,343.81,905.60,344.84,904.03C345.87,902.47,346.89,901.69,347.92,901.69C348.95,901.69,349.97,922.08,351.00,929.34C352.03,936.61,353.05,945.28,354.08,945.28C355.11,945.28,356.13,914.34,357.16,914.34C358.19,914.34,359.21,931.84,360.24,934.97C361.27,938.09,362.29,938.25,363.32,939.66C364.35,941.06,365.37,943.41,366.40,943.41C367.43,943.41,368.45,933.56,369.48,933.56C370.51,933.56,371.53,936.84,372.56,936.84C373.59,936.84,374.61,931.69,375.64,931.69C376.67,931.69,377.69,932.31,378.72,933.56C379.75,934.81,380.77,940.44,381.80,941.06C382.83,941.69,383.85,942.00,384.88,942.00C385.91,942.00,386.93,911.53,387.96,911.53C388.99,911.53,390.01,934.03,391.04,934.03C392.07,934.03,393.09,898.41,394.12,898.41C395.15,898.41,396.17,940.59,397.20,940.59C398.23,940.59,399.25,936.06,400.28,929.34C401.31,922.63,402.33,900.28,403.36,900.28C404.39,900.28,405.41,901.53,406.44,904.03C407.47,906.53,408.49,929.66,409.52,932.16C410.55,934.66,411.57,934.66,412.60,935.91C413.63,937.16,414.65,938.09,415.68,939.66C416.71,941.22,417.73,945.28,418.76,945.28C419.79,945.28,420.81,937.31,421.84,937.31C422.87,937.31,423.89,945.28,424.92,945.28C425.95,945.28,426.97,897.47,428.00,897.47C429.03,897.47,430.05,931.53,431.08,932.16C432.11,932.78,433.13,932.86,434.16,933.09C435.19,933.33,436.21,933.25,437.24,933.56C438.27,933.88,439.29,937.78,440.32,937.78C441.35,937.78,442.37,891.85,443.40,891.85C444.43,891.85,445.45,893.41,446.48,896.53C447.51,899.66,448.53,936.84,449.56,940.59C450.59,944.34,451.61,946.22,452.64,946.22C453.67,946.22,454.69,942.47,455.72,934.97C456.75,927.47,457.77,881.06,458.80,881.06C459.83,881.06,460.85,902.86,461.88,913.41C462.91,923.95,463.93,944.34,464.96,944.34C465.99,944.34,467.01,897.00,468.04,897.00C469.07,897.00,470.09,929.66,471.12,932.16C472.15,934.66,473.17,935.91,474.20,935.91C475.23,935.91,476.25,933.56,477.28,933.56C478.31,933.56,479.33,942.47,480.36,942.47C481.39,942.47,482.41,938.09,483.44,929.34C484.47,920.59,485.49,887.16,486.52,887.16C487.55,887.16,488.57,941.53,489.60,941.53C490.63,941.53,491.65,937.78,492.68,937.78C493.71,937.78,494.73,942.47,495.76,942.47C496.79,942.47,497.81,895.60,498.84,895.60C499.87,895.60,500.89,900.91,501.92,903.10C502.95,905.28,503.97,904.97,505.00,908.72C506.03,912.47,507.05,934.97,508.08,934.97C509.11,934.97,510.13,933.09,511.16,933.09C512.19,933.09,513.21,933.25,514.24,933.56C515.27,933.88,516.29,934.42,517.32,935.91C518.35,937.39,519.37,942.47,520.40,942.47C521.43,942.47,522.45,897.00,523.48,897.00C524.51,897.00,525.53,943.41,526.56,943.41C527.59,943.41,528.61,943.41,529.64,943.41L529.64,947.16C528.61,947.16,527.59,947.16,526.56,947.16C525.53,947.16,524.51,926.53,523.48,926.53C522.45,926.53,521.43,946.22,520.40,946.22C519.37,946.22,518.35,944.03,517.32,943.41C516.29,942.78,515.27,942.47,514.24,942.47C513.21,942.47,512.19,942.94,511.16,942.94C510.13,942.94,509.11,942.94,508.08,942.94C507.05,942.94,506.03,934.19,505.00,932.63C503.97,931.06,502.95,931.38,501.92,930.28C500.89,929.19,499.87,926.06,498.84,926.06C497.81,926.06,496.79,946.22,495.76,946.22C494.73,946.22,493.71,943.88,492.68,943.88C491.65,943.88,490.63,946.22,489.60,946.22C488.57,946.22,487.55,924.66,486.52,924.66C485.49,924.66,484.47,939.66,483.44,942.47C482.41,945.28,481.39,946.69,480.36,946.69C479.33,946.69,478.31,942.00,477.28,942.00C476.25,942.00,475.23,943.88,474.20,943.88C473.17,943.88,472.15,943.09,471.12,941.53C470.09,939.97,469.07,925.59,468.04,925.59C467.01,925.59,465.99,947.63,464.96,947.63C463.93,947.63,462.91,938.72,461.88,934.03C460.85,929.34,459.83,919.50,458.80,919.50C457.77,919.50,456.75,941.84,455.72,944.34C454.69,946.84,453.67,948.09,452.64,948.09C451.61,948.09,450.59,947.00,449.56,944.81C448.53,942.63,447.51,925.13,446.48,925.13C445.45,925.13,444.43,925.75,443.40,927.00C442.37,928.25,441.35,945.28,440.32,945.28C439.29,945.28,438.27,943.25,437.24,942.94C436.21,942.63,435.19,942.47,434.16,942.47C433.13,942.47,432.11,942.94,431.08,942.94C430.05,942.94,429.03,927.00,428.00,927.00C426.97,927.00,425.95,947.63,424.92,947.63C423.89,947.63,422.87,943.88,421.84,943.88C420.81,943.88,419.79,948.09,418.76,948.09C417.73,948.09,416.71,946.22,415.68,946.22C414.65,946.22,413.63,946.22,412.60,946.22C411.57,946.22,410.55,945.28,409.52,943.41C408.49,941.53,407.47,934.34,406.44,932.16C405.41,929.97,404.39,928.88,403.36,928.88C402.33,928.88,401.31,939.34,400.28,941.53C399.25,943.72,398.23,944.81,397.20,944.81C396.17,944.81,395.15,929.81,394.12,929.81C393.09,929.81,392.07,943.41,391.04,943.41C390.01,943.41,388.99,932.63,387.96,932.63C386.93,932.63,385.91,946.22,384.88,946.22C383.85,946.22,382.83,946.06,381.80,945.75C380.77,945.44,379.75,942.47,378.72,942.47C377.69,942.47,376.67,943.41,375.64,943.41C374.61,943.41,373.59,943.41,372.56,943.41C371.53,943.41,370.51,942.47,369.48,942.47C368.45,942.47,367.43,947.16,366.40,947.16C365.37,947.16,364.35,946.38,363.32,945.75C362.29,945.13,361.27,944.97,360.24,943.41C359.21,941.84,358.19,933.56,357.16,933.56C356.13,933.56,355.11,947.16,354.08,947.16C353.05,947.16,352.03,944.81,351.00,941.53C349.97,938.25,348.95,927.47,347.92,927.47C346.89,927.47,345.87,928.25,344.84,929.81C343.81,931.38,342.79,937.31,341.76,937.31C340.73,937.31,339.71,929.81,338.68,929.81C337.65,929.81,336.63,940.59,335.60,942.47C334.57,944.34,333.55,945.28,332.52,945.28C331.49,945.28,330.47,925.59,329.44,925.59C328.41,925.59,327.39,945.75,326.36,945.75C325.33,945.75,324.31,933.72,323.28,930.28C322.25,926.84,321.23,925.13,320.20,925.13C319.17,925.13,318.15,930.52,317.12,934.03C316.09,937.55,315.07,945.28,314.04,946.22C313.01,947.16,311.99,947.63,310.96,947.63C309.93,947.63,308.91,927.00,307.88,927.00C306.85,927.00,305.83,946.69,304.80,946.69C303.77,946.69,302.75,927.00,301.72,927.00C300.69,927.00,299.67,944.81,298.64,944.81C297.61,944.81,296.59,943.72,295.56,941.53C294.53,939.34,293.51,930.91,292.48,929.34C291.45,927.78,290.43,927.00,289.40,927.00C288.37,927.00,287.35,941.53,286.32,941.53C285.29,941.53,284.27,932.63,283.24,932.63C282.21,932.63,281.19,942.16,280.16,943.41C279.13,944.66,278.11,945.28,277.08,945.28C276.05,945.28,275.03,945.28,274.00,945.28C272.97,945.28,271.95,945.75,270.92,945.75C269.89,945.75,268.87,936.84,267.84,934.03C266.81,931.22,265.79,928.88,264.76,928.88C263.73,928.88,262.71,947.63,261.68,947.63C260.65,947.63,259.63,946.84,258.60,945.28C257.57,943.72,256.55,932.16,255.52,932.16C254.49,932.16,253.47,942.47,252.44,942.47C251.41,942.47,250.39,932.16,249.36,932.16C248.33,932.16,247.31,946.06,246.28,946.69C245.25,947.31,244.23,947.63,243.20,947.63C242.17,947.63,241.15,928.41,240.12,928.41C239.09,928.41,238.07,945.28,237.04,945.28C236.01,945.28,234.99,942.94,233.96,942.94C232.93,942.94,231.91,946.22,230.88,946.22C229.85,946.22,228.83,944.34,227.80,944.34C226.77,944.34,225.75,945.28,224.72,945.28C223.69,945.28,222.67,943.41,221.64,943.41C220.61,943.41,219.59,946.69,218.56,946.69C217.53,946.69,216.51,946.06,215.48,944.81C214.45,943.56,213.43,929.81,212.40,929.81C211.37,929.81,210.35,929.97,209.32,930.28C208.29,930.59,207.27,946.69,206.24,946.69C205.21,946.69,204.19,930.75,203.16,930.75C202.13,930.75,201.11,945.75,200.08,945.75C199.05,945.75,198.03,925.59,197.00,925.59C195.97,925.59,194.95,943.88,193.92,943.88C192.89,943.88,191.87,943.41,190.84,943.41C189.81,943.41,188.79,943.41,187.76,943.41C186.73,943.41,185.71,943.41,184.68,943.41C183.65,943.41,182.63,931.69,181.60,931.69C180.57,931.69,179.55,945.44,178.52,945.75C177.49,946.06,176.47,945.91,175.44,946.22C174.41,946.53,173.39,947.63,172.36,947.63C171.33,947.63,170.31,945.59,169.28,942.47C168.25,939.34,167.23,928.88,166.20,928.88C165.17,928.88,164.15,946.69,163.12,946.69C162.09,946.69,161.07,945.75,160.04,945.75C159.01,945.75,157.99,946.69,156.96,946.69C155.93,946.69,154.91,932.00,153.88,929.81C152.85,927.63,151.83,926.53,150.80,926.53C149.77,926.53,148.75,944.81,147.72,944.81C146.69,944.81,145.67,943.41,144.64,943.41C143.61,943.41,142.59,946.69,141.56,946.69C140.53,946.69,139.51,934.03,138.48,933.09C137.45,932.16,136.43,932.63,135.40,931.69C134.37,930.75,133.35,926.06,132.32,926.06C131.29,926.06,130.27,943.72,129.24,944.34C128.21,944.97,127.19,945.05,126.16,945.28C125.13,945.52,124.11,945.75,123.08,945.75C122.05,945.75,121.03,943.41,120.00,943.41C118.97,943.41,117.95,943.72,116.92,944.34C115.89,944.97,114.87,947.63,113.84,947.63C112.81,947.63,111.79,947.31,110.76,947.16C109.73,947.00,108.71,946.69,107.68,946.69C106.65,946.69,105.63,947.16,104.60,947.16C103.57,947.16,102.55,942.55,101.52,939.66C100.49,936.77,99.47,929.81,98.44,929.81C97.41,929.81,96.39,944.81,95.36,944.81C94.33,944.81,93.31,934.50,92.28,934.50C91.25,934.50,90.23,940.83,89.20,947.16Z" fill="#cfdfec"/><path d="M89.20,947.16C90.23,940.83,91.25,934.50,92.28,934.50C93.31,934.50,94.33,944.81,95.36,944.81C96.39,944.81,97.41,929.81,98.44,929.81C99.47,929.81,100.49,936.77,101.52,939.66C102.55,942.55,103.57,947.16,104.60,947.16C105.63,947.16,106.65,946.69,107.68,946.69C108.71,946.69,109.73,947.00,110.76,947.16C111.79,947.31,112.81,947.63,113.84,947.63C114.87,947.63,115.89,944.97,116.92,944.34C117.95,943.72,118.97,943.41,120.00,943.41C121.03,943.41,122.05,945.75,123.08,945.75C124.11,945.75,125.13,945.52,126.16,945.28C127.19,945.05,128.21,944.97,129.24,944.34C130.27,943.72,131.29,926.06,132.32,926.06C133.35,926.06,134.37,930.75,135.40,931.69C136.43,932.63,137.45,932.16,138.48,933.09C139.51,934.03,140.53,946.69,141.56,946.69C142.59,946.69,143.61,943.41,144.64,943.41C145.67,943.41,146.69,944.81,147.72,944.81C148.75,944.81,149.77,926.53,150.80,926.53C151.83,926.53,152.85,927.63,153.88,929.81C154.91,932.00,155.93,946.69,156.96,946.69C157.99,946.69,159.01,945.75,160.04,945.75C161.07,945.75,162.09,946.69,163.12,946.69C164.15,946.69,165.17,928.88,166.20,928.88C167.23,928.88,168.25,939.34,169.28,942.47C170.31,945.59,171.33,947.63,172.36,947.63C173.39,947.63,174.41,946.53,175.44,946.22C176.47,945.91,177.49,946.06,178.52,945.75C179.55,945.44,180.57,931.69,181.60,931.69C182.63,931.69,183.65,943.41,184.68,943.41C185.71,943.41,186.73,943.41,187.76,943.41C188.79,943.41,189.81,943.41,190.84,943.41C191.87,943.41,192.89,943.88,193.92,943.88C194.95,943.88,195.97,925.59,197.00,925.59C198.03,925.59,199.05,945.75,200.08,945.75C201.11,945.75,202.13,930.75,203.16,930.75C204.19,930.75,205.21,946.69,206.24,946.69C207.27,946.69,208.29,930.59,209.32,930.28C210.35,929.97,211.37,929.81,212.40,929.81C213.43,929.81,214.45,943.56,215.48,944.81C216.51,946.06,217.53,946.69,218.56,946.69C219.59,946.69,220.61,943.41,221.64,943.41C222.67,943.41,223.69,945.28,224.72,945.28C225.75,945.28,226.77,944.34,227.80,944.34C228.83,944.34,229.85,946.22,230.88,946.22C231.91,946.22,232.93,942.94,233.96,942.94C234.99,942.94,236.01,945.28,237.04,945.28C238.07,945.28,239.09,928.41,240.12,928.41C241.15,928.41,242.17,947.63,243.20,947.63C244.23,947.63,245.25,947.31,246.28,946.69C247.31,946.06,248.33,932.16,249.36,932.16C250.39,932.16,251.41,942.47,252.44,942.47C253.47,942.47,254.49,932.16,255.52,932.16C256.55,932.16,257.57,943.72,258.60,945.28C259.63,946.84,260.65,947.63,261.68,947.63C262.71,947.63,263.73,928.88,264.76,928.88C265.79,928.88,266.81,931.22,267.84,934.03C268.87,936.84,269.89,945.75,270.92,945.75C271.95,945.75,272.97,945.28,274.00,945.28C275.03,945.28,276.05,945.28,277.08,945.28C278.11,945.28,279.13,944.66,280.16,943.41C281.19,942.16,282.21,932.63,283.24,932.63C284.27,932.63,285.29,941.53,286.32,941.53C287.35,941.53,288.37,927.00,289.40,927.00C290.43,927.00,291.45,927.78,292.48,929.34C293.51,930.91,294.53,939.34,295.56,941.53C296.59,943.72,297.61,944.81,298.64,944.81C299.67,944.81,300.69,927.00,301.72,927.00C302.75,927.00,303.77,946.69,304.80,946.69C305.83,946.69,306.85,927.00,307.88,927.00C308.91,927.00,309.93,947.63,310.96,947.63C311.99,947.63,313.01,947.16,314.04,946.22C315.07,945.28,316.09,937.55,317.12,934.03C318.15,930.52,319.17,925.13,320.20,925.13C321.23,925.13,322.25,926.84,323.28,930.28C324.31,933.72,325.33,945.75,326.36,945.75C327.39,945.75,328.41,925.59,329.44,925.59C330.47,925.59,331.49,945.28,332.52,945.28C333.55,945.28,334.57,944.34,335.60,942.47C336.63,940.59,337.65,929.81,338.68,929.81C339.71,929.81,340.73,937.31,341.76,937.31C342.79,937.31,343.81,931.38,344.84,929.81C345.87,928.25,346.89,927.47,347.92,927.47C348.95,927.47,349.97,938.25,351.00,941.53C352.03,944.81,353.05,947.16,354.08,947.16C355.11,947.16,356.13,933.56,357.16,933.56C358.19,933.56,359.21,941.84,360.24,943.41C361.27,944.97,362.29,945.13,363.32,945.75C364.35,946.38,365.37,947.16,366.40,947.16C367.43,947.16,368.45,942.47,369.48,942.47C370.51,942.47,371.53,943.41,372.56,943.41C373.59,943.41,374.61,943.41,375.64,943.41C376.67,943.41,377.69,942.47,378.72,942.47C379.75,942.47,380.77,945.44,381.80,945.75C382.83,946.06,383.85,946.22,384.88,946.22C385.91,946.22,386.93,932.63,387.96,932.63C388.99,932.63,390.01,943.41,391.04,943.41C392.07,943.41,393.09,929.81,394.12,929.81C395.15,929.81,396.17,944.81,397.20,944.81C398.23,944.81,399.25,943.72,400.28,941.53C401.31,939.34,402.33,928.88,403.36,928.88C404.39,928.88,405.41,929.97,406.44,932.16C407.47,934.34,408.49,941.53,409.52,943.41C410.55,945.28,411.57,946.22,412.60,946.22C413.63,946.22,414.65,946.22,415.68,946.22C416.71,946.22,417.73,948.09,418.76,948.09C419.79,948.09,420.81,943.88,421.84,943.88C422.87,943.88,423.89,947.63,424.92,947.63C425.95,947.63,426.97,927.00,428.00,927.00C429.03,927.00,430.05,942.94,431.08,942.94C432.11,942.94,433.13,942.47,434.16,942.47C435.19,942.47,436.21,942.63,437.24,942.94C438.27,943.25,439.29,945.28,440.32,945.28C441.35,945.28,442.37,928.25,443.40,927.00C444.43,925.75,445.45,925.13,446.48,925.13C447.51,925.13,448.53,942.63,449.56,944.81C450.59,947.00,451.61,948.09,452.64,948.09C453.67,948.09,454.69,946.84,455.72,944.34C456.75,941.84,457.77,919.50,458.80,919.50C459.83,919.50,460.85,929.34,461.88,934.03C462.91,938.72,463.93,947.63,464.96,947.63C465.99,947.63,467.01,925.59,468.04,925.59C469.07,925.59,470.09,939.97,471.12,941.53C472.15,943.09,473.17,943.88,474.20,943.88C475.23,943.88,476.25,942.00,477.28,942.00C478.31,942.00,479.33,946.69,480.36,946.69C481.39,946.69,482.41,945.28,483.44,942.47C484.47,939.66,485.49,924.66,486.52,924.66C487.55,924.66,488.57,946.22,489.60,946.22C490.63,946.22,491.65,943.88,492.68,943.88C493.71,943.88,494.73,946.22,495.76,946.22C496.79,946.22,497.81,926.06,498.84,926.06C499.87,926.06,500.89,929.19,501.92,930.28C502.95,931.38,503.97,931.06,505.00,932.63C506.03,934.19,507.05,942.94,508.08,942.94C509.11,942.94,510.13,942.94,511.16,942.94C512.19,942.94,513.21,942.47,514.24,942.47C515.27,942.47,516.29,942.78,517.32,943.41C518.35,944.03,519.37,946.22,520.40,946.22C521.43,946.22,522.45,926.53,523.48,926.53C524.51,926.53,525.53,947.16,526.56,947.16C527.59,947.16,528.61,947.16,529.64,947.16L529.64,949.50C528.61,949.50,527.59,949.50,526.56,949.50C525.53,949.50,524.51,949.50,523.48,949.50C522.45,949.50,521.43,949.50,520.40,949.50C519.37,949.50,518.35,949.50,517.32,949.50C516.29,949.50,515.27,949.50,514.24,949.50C513.21,949.50,512.19,949.50,511.16,949.50C510.13,949.50,509.11,949.50,508.08,949.50C507.05,949.50,506.03,949.50,505.00,949.50C503.97,949.50,502.95,949.50,501.92,949.50C500.89,949.50,499.87,949.50,498.84,949.50C497.81,949.50,496.79,949.50,495.76,949.50C494.73,949.50,493.71,949.50,492.68,949.50C491.65,949.50,490.63,949.50,489.60,949.50C488.57,949.50,487.55,949.50,486.52,949.50C485.49,949.50,484.47,949.50,483.44,949.50C482.41,949.50,481.39,949.50,480.36,949.50C479.33,949.50,478.31,949.50,477.28,949.50C476.25,949.50,475.23,949.50,474.20,949.50C473.17,949.50,472.15,949.50,471.12,949.50C470.09,949.50,469.07,949.50,468.04,949.50C467.01,949.50,465.99,949.50,464.96,949.50C463.93,949.50,462.91,949.50,461.88,949.50C460.85,949.50,459.83,949.50,458.80,949.50C457.77,949.50,456.75,949.50,455.72,949.50C454.69,949.50,453.67,949.50,452.64,949.50C451.61,949.50,450.59,949.50,449.56,949.50C448.53,949.50,447.51,949.50,446.48,949.50C445.45,949.50,444.43,949.50,443.40,949.50C442.37,949.50,441.35,949.50,440.32,949.50C439.29,949.50,438.27,949.50,437.24,949.50C436.21,949.50,435.19,949.50,434.16,949.50C433.13,949.50,432.11,949.50,431.08,949.50C430.05,949.50,429.03,949.50,428.00,949.50C426.97,949.50,425.95,949.50,424.92,949.50C423.89,949.50,422.87,949.50,421.84,949.50C420.81,949.50,419.79,949.50,418.76,949.50C417.73,949.50,416.71,949.50,415.68,949.50C414.65,949.50,413.63,949.50,412.60,949.50C411.57,949.50,410.55,949.50,409.52,949.50C408.49,949.50,407.47,949.50,406.44,949.50C405.41,949.50,404.39,949.50,403.36,949.50C402.33,949.50,401.31,949.50,400.28,949.50C399.25,949.50,398.23,949.50,397.20,949.50C396.17,949.50,395.15,949.50,394.12,949.50C393.09,949.50,392.07,949.50,391.04,949.50C390.01,949.50,388.99,949.50,387.96,949.50C386.93,949.50,385.91,949.50,384.88,949.50C383.85,949.50,382.83,949.50,381.80,949.50C380.77,949.50,379.75,949.50,378.72,949.50C377.69,949.50,376.67,949.50,375.64,949.50C374.61,949.50,373.59,949.50,372.56,949.50C371.53,949.50,370.51,949.50,369.48,949.50C368.45,949.50,367.43,949.50,366.40,949.50C365.37,949.50,364.35,949.50,363.32,949.50C362.29,949.50,361.27,949.50,360.24,949.50C359.21,949.50,358.19,949.50,357.16,949.50C356.13,949.50,355.11,949.50,354.08,949.50C353.05,949.50,352.03,949.50,351.00,949.50C349.97,949.50,348.95,949.50,347.92,949.50C346.89,949.50,345.87,949.50,344.84,949.50C343.81,949.50,342.79,949.50,341.76,949.50C340.73,949.50,339.71,949.50,338.68,949.50C337.65,949.50,336.63,949.50,335.60,949.50C334.57,949.50,333.55,949.50,332.52,949.50C331.49,949.50,330.47,949.50,329.44,949.50C328.41,949.50,327.39,949.50,326.36,949.50C325.33,949.50,324.31,949.50,323.28,949.50C322.25,949.50,321.23,949.50,320.20,949.50C319.17,949.50,318.15,949.50,317.12,949.50C316.09,949.50,315.07,949.50,314.04,949.50C313.01,949.50,311.99,949.50,310.96,949.50C309.93,949.50,308.91,949.50,307.88,949.50C306.85,949.50,305.83,949.50,304.80,949.50C303.77,949.50,302.75,949.50,301.72,949.50C300.69,949.50,299.67,949.50,298.64,949.50C297.61,949.50,296.59,949.50,295.56,949.50C294.53,949.50,293.51,949.50,292.48,949.50C291.45,949.50,290.43,949.50,289.40,949.50C288.37,949.50,287.35,949.50,286.32,949.50C285.29,949.50,284.27,949.50,283.24,949.50C282.21,949.50,281.19,949.50,280.16,949.50C279.13,949.50,278.11,949.50,277.08,949.50C276.05,949.50,275.03,949.50,274.00,949.50C272.97,949.50,271.95,949.50,270.92,949.50C269.89,949.50,268.87,949.50,267.84,949.50C266.81,949.50,265.79,949.50,264.76,949.50C263.73,949.50,262.71,949.50,261.68,949.50C260.65,949.50,259.63,949.50,258.60,949.50C257.57,949.50,256.55,949.50,255.52,949.50C254.49,949.50,253.47,949.50,252.44,949.50C251.41,949.50,250.39,949.50,249.36,949.50C248.33,949.50,247.31,949.50,246.28,949.50C245.25,949.50,244.23,949.50,243.20,949.50C242.17,949.50,241.15,949.50,240.12,949.50C239.09,949.50,238.07,949.50,237.04,949.50C236.01,949.50,234.99,949.50,233.96,949.50C232.93,949.50,231.91,949.50,230.88,949.50C229.85,949.50,228.83,949.50,227.80,949.50C226.77,949.50,225.75,949.50,224.72,949.50C223.69,949.50,222.67,949.50,221.64,949.50C220.61,949.50,219.59,949.50,218.56,949.50C217.53,949.50,216.51,949.50,215.48,949.50C214.45,949.50,213.43,949.50,212.40,949.50C211.37,949.50,210.35,949.50,209.32,949.50C208.29,949.50,207.27,949.50,206.24,949.50C205.21,949.50,204.19,949.50,203.16,949.50C202.13,949.50,201.11,949.50,200.08,949.50C199.05,949.50,198.03,949.50,197.00,949.50C195.97,949.50,194.95,949.50,193.92,949.50C192.89,949.50,191.87,949.50,190.84,949.50C189.81,949.50,188.79,949.50,187.76,949.50C186.73,949.50,185.71,949.50,184.68,949.50C183.65,949.50,182.63,949.50,181.60,949.50C180.57,949.50,179.55,949.50,178.52,949.50C177.49,949.50,176.47,949.50,175.44,949.50C174.41,949.50,173.39,949.50,172.36,949.50C171.33,949.50,170.31,949.50,169.28,949.50C168.25,949.50,167.23,949.50,166.20,949.50C165.17,949.50,164.15,949.50,163.12,949.50C162.09,949.50,161.07,949.50,160.04,949.50C159.01,949.50,157.99,949.50,156.96,949.50C155.93,949.50,154.91,949.50,153.88,949.50C152.85,949.50,151.83,949.50,150.80,949.50C149.77,949.50,148.75,949.50,147.72,949.50C146.69,949.50,145.67,949.50,144.64,949.50C143.61,949.50,142.59,949.50,141.56,949.50C140.53,949.50,139.51,949.50,138.48,949.50C137.45,949.50,136.43,949.50,135.40,949.50C134.37,949.50,133.35,949.50,132.32,949.50C131.29,949.50,130.27,949.50,129.24,949.50C128.21,949.50,127.19,949.50,126.16,949.50C125.13,949.50,124.11,949.50,123.08,949.50C122.05,949.50,121.03,949.50,120.00,949.50C118.97,949.50,117.95,949.50,116.92,949.50C115.89,949.50,114.87,949.50,113.84,949.50C112.81,949.50,111.79,949.50,110.76,949.50C109.73,949.50,108.71,949.50,107.68,949.50C106.65,949.50,105.63,949.50,104.60,949.50C103.57,949.50,102.55,949.50,101.52,949.50C100.49,949.50,99.47,949.50,98.44,949.50C97.41,949.50,96.39,949.50,95.36,949.50C94.33,949.50,93.31,949.50,92.28,949.50C91.25,949.50,90.23,949.50,89.20,949.50Z" fill="#cce8e0"/><line x1="89" y1="878.5" x2="531" y2="878.5" stroke="#d3cfe0" stroke-width="1" stroke-dasharray="4 4"/><line x1="88.5" y1="806" x2="88.5" y2="950" stroke="#eef0f3" stroke-width="1"/><line x1="88" y1="950" x2="531" y2="950" stroke="#eef0f3" stroke-width="1"/><path d="M89.20,947.16C90.23,940.83,91.25,934.50,92.28,934.50C93.31,934.50,94.33,944.81,95.36,944.81C96.39,944.81,97.41,929.81,98.44,929.81C99.47,929.81,100.49,936.77,101.52,939.66C102.55,942.55,103.57,947.16,104.60,947.16C105.63,947.16,106.65,946.69,107.68,946.69C108.71,946.69,109.73,947.00,110.76,947.16C111.79,947.31,112.81,947.63,113.84,947.63C114.87,947.63,115.89,944.97,116.92,944.34C117.95,943.72,118.97,943.41,120.00,943.41C121.03,943.41,122.05,945.75,123.08,945.75C124.11,945.75,125.13,945.52,126.16,945.28C127.19,945.05,128.21,944.97,129.24,944.34C130.27,943.72,131.29,926.06,132.32,926.06C133.35,926.06,134.37,930.75,135.40,931.69C136.43,932.63,137.45,932.16,138.48,933.09C139.51,934.03,140.53,946.69,141.56,946.69C142.59,946.69,143.61,943.41,144.64,943.41C145.67,943.41,146.69,944.81,147.72,944.81C148.75,944.81,149.77,926.53,150.80,926.53C151.83,926.53,152.85,927.63,153.88,929.81C154.91,932.00,155.93,946.69,156.96,946.69C157.99,946.69,159.01,945.75,160.04,945.75C161.07,945.75,162.09,946.69,163.12,946.69C164.15,946.69,165.17,928.88,166.20,928.88C167.23,928.88,168.25,939.34,169.28,942.47C170.31,945.59,171.33,947.63,172.36,947.63C173.39,947.63,174.41,946.53,175.44,946.22C176.47,945.91,177.49,946.06,178.52,945.75C179.55,945.44,180.57,931.69,181.60,931.69C182.63,931.69,183.65,943.41,184.68,943.41C185.71,943.41,186.73,943.41,187.76,943.41C188.79,943.41,189.81,943.41,190.84,943.41C191.87,943.41,192.89,943.88,193.92,943.88C194.95,943.88,195.97,925.59,197.00,925.59C198.03,925.59,199.05,945.75,200.08,945.75C201.11,945.75,202.13,930.75,203.16,930.75C204.19,930.75,205.21,946.69,206.24,946.69C207.27,946.69,208.29,930.59,209.32,930.28C210.35,929.97,211.37,929.81,212.40,929.81C213.43,929.81,214.45,943.56,215.48,944.81C216.51,946.06,217.53,946.69,218.56,946.69C219.59,946.69,220.61,943.41,221.64,943.41C222.67,943.41,223.69,945.28,224.72,945.28C225.75,945.28,226.77,944.34,227.80,944.34C228.83,944.34,229.85,946.22,230.88,946.22C231.91,946.22,232.93,942.94,233.96,942.94C234.99,942.94,236.01,945.28,237.04,945.28C238.07,945.28,239.09,928.41,240.12,928.41C241.15,928.41,242.17,947.63,243.20,947.63C244.23,947.63,245.25,947.31,246.28,946.69C247.31,946.06,248.33,932.16,249.36,932.16C250.39,932.16,251.41,942.47,252.44,942.47C253.47,942.47,254.49,932.16,255.52,932.16C256.55,932.16,257.57,943.72,258.60,945.28C259.63,946.84,260.65,947.63,261.68,947.63C262.71,947.63,263.73,928.88,264.76,928.88C265.79,928.88,266.81,931.22,267.84,934.03C268.87,936.84,269.89,945.75,270.92,945.75C271.95,945.75,272.97,945.28,274.00,945.28C275.03,945.28,276.05,945.28,277.08,945.28C278.11,945.28,279.13,944.66,280.16,943.41C281.19,942.16,282.21,932.63,283.24,932.63C284.27,932.63,285.29,941.53,286.32,941.53C287.35,941.53,288.37,927.00,289.40,927.00C290.43,927.00,291.45,927.78,292.48,929.34C293.51,930.91,294.53,939.34,295.56,941.53C296.59,943.72,297.61,944.81,298.64,944.81C299.67,944.81,300.69,927.00,301.72,927.00C302.75,927.00,303.77,946.69,304.80,946.69C305.83,946.69,306.85,927.00,307.88,927.00C308.91,927.00,309.93,947.63,310.96,947.63C311.99,947.63,313.01,947.16,314.04,946.22C315.07,945.28,316.09,937.55,317.12,934.03C318.15,930.52,319.17,925.13,320.20,925.13C321.23,925.13,322.25,926.84,323.28,930.28C324.31,933.72,325.33,945.75,326.36,945.75C327.39,945.75,328.41,925.59,329.44,925.59C330.47,925.59,331.49,945.28,332.52,945.28C333.55,945.28,334.57,944.34,335.60,942.47C336.63,940.59,337.65,929.81,338.68,929.81C339.71,929.81,340.73,937.31,341.76,937.31C342.79,937.31,343.81,931.38,344.84,929.81C345.87,928.25,346.89,927.47,347.92,927.47C348.95,927.47,349.97,938.25,351.00,941.53C352.03,944.81,353.05,947.16,354.08,947.16C355.11,947.16,356.13,933.56,357.16,933.56C358.19,933.56,359.21,941.84,360.24,943.41C361.27,944.97,362.29,945.13,363.32,945.75C364.35,946.38,365.37,947.16,366.40,947.16C367.43,947.16,368.45,942.47,369.48,942.47C370.51,942.47,371.53,943.41,372.56,943.41C373.59,943.41,374.61,943.41,375.64,943.41C376.67,943.41,377.69,942.47,378.72,942.47C379.75,942.47,380.77,945.44,381.80,945.75C382.83,946.06,383.85,946.22,384.88,946.22C385.91,946.22,386.93,932.63,387.96,932.63C388.99,932.63,390.01,943.41,391.04,943.41C392.07,943.41,393.09,929.81,394.12,929.81C395.15,929.81,396.17,944.81,397.20,944.81C398.23,944.81,399.25,943.72,400.28,941.53C401.31,939.34,402.33,928.88,403.36,928.88C404.39,928.88,405.41,929.97,406.44,932.16C407.47,934.34,408.49,941.53,409.52,943.41C410.55,945.28,411.57,946.22,412.60,946.22C413.63,946.22,414.65,946.22,415.68,946.22C416.71,946.22,417.73,948.09,418.76,948.09C419.79,948.09,420.81,943.88,421.84,943.88C422.87,943.88,423.89,947.63,424.92,947.63C425.95,947.63,426.97,927.00,428.00,927.00C429.03,927.00,430.05,942.94,431.08,942.94C432.11,942.94,433.13,942.47,434.16,942.47C435.19,942.47,436.21,942.63,437.24,942.94C438.27,943.25,439.29,945.28,440.32,945.28C441.35,945.28,442.37,928.25,443.40,927.00C444.43,925.75,445.45,925.13,446.48,925.13C447.51,925.13,448.53,942.63,449.56,944.81C450.59,947.00,451.61,948.09,452.64,948.09C453.67,948.09,454.69,946.84,455.72,944.34C456.75,941.84,457.77,919.50,458.80,919.50C459.83,919.50,460.85,929.34,461.88,934.03C462.91,938.72,463.93,947.63,464.96,947.63C465.99,947.63,467.01,925.59,468.04,925.59C469.07,925.59,470.09,939.97,471.12,941.53C472.15,943.09,473.17,943.88,474.20,943.88C475.23,943.88,476.25,942.00,477.28,942.00C478.31,942.00,479.33,946.69,480.36,946.69C481.39,946.69,482.41,945.28,483.44,942.47C484.47,939.66,485.49,924.66,486.52,924.66C487.55,924.66,488.57,946.22,489.60,946.22C490.63,946.22,491.65,943.88,492.68,943.88C493.71,943.88,494.73,946.22,495.76,946.22C496.79,946.22,497.81,926.06,498.84,926.06C499.87,926.06,500.89,929.19,501.92,930.28C502.95,931.38,503.97,931.06,505.00,932.63C506.03,934.19,507.05,942.94,508.08,942.94C509.11,942.94,510.13,942.94,511.16,942.94C512.19,942.94,513.21,942.47,514.24,942.47C515.27,942.47,516.29,942.78,517.32,943.41C518.35,944.03,519.37,946.22,520.40,946.22C521.43,946.22,522.45,926.53,523.48,926.53C524.51,926.53,525.53,947.16,526.56,947.16C527.59,947.16,528.61,947.16,529.64,947.16" fill="none" stroke="#54b399" stroke-width="2" stroke-linejoin="round"/><path d="M89.20,945.75C90.23,930.28,91.25,914.81,92.28,914.81C93.31,914.81,94.33,942.47,95.36,942.47C96.39,942.47,97.41,909.66,98.44,909.66C99.47,909.66,100.49,923.72,101.52,929.34C102.55,934.97,103.57,943.41,104.60,943.41C105.63,943.41,106.65,943.41,107.68,943.41C108.71,943.41,109.73,943.56,110.76,943.88C111.79,944.19,112.81,945.28,113.84,945.28C114.87,945.28,115.89,936.53,116.92,935.91C117.95,935.28,118.97,934.97,120.00,934.97C121.03,934.97,122.05,940.59,123.08,940.59C124.11,940.59,125.13,940.44,126.16,940.13C127.19,939.81,128.21,939.66,129.24,938.72C130.27,937.78,131.29,890.91,132.32,890.91C133.35,890.91,134.37,901.85,135.40,904.97C136.43,908.10,137.45,906.53,138.48,909.66C139.51,912.78,140.53,942.47,141.56,942.47C142.59,942.47,143.61,936.84,144.64,936.84C145.67,936.84,146.69,940.59,147.72,940.59C148.75,940.59,149.77,892.78,150.80,892.78C151.83,892.78,152.85,895.60,153.88,901.22C154.91,906.85,155.93,942.47,156.96,942.47C157.99,942.47,159.01,940.59,160.04,940.59C161.07,940.59,162.09,943.41,163.12,943.41C164.15,943.41,165.17,882.94,166.20,882.94C167.23,882.94,168.25,924.97,169.28,933.09C170.31,941.22,171.33,945.28,172.36,945.28C173.39,945.28,174.41,942.00,175.44,942.00C176.47,942.00,177.49,942.00,178.52,942.00C179.55,942.00,180.57,906.38,181.60,906.38C182.63,906.38,183.65,933.09,184.68,934.03C185.71,934.97,186.73,935.44,187.76,935.44C188.79,935.44,189.81,934.97,190.84,934.97C191.87,934.97,192.89,937.31,193.92,937.31C194.95,937.31,195.97,893.25,197.00,893.25C198.03,893.25,199.05,942.47,200.08,942.47C201.11,942.47,202.13,905.44,203.16,905.44C204.19,905.44,205.21,944.34,206.24,944.34C207.27,944.34,208.29,899.81,209.32,899.81C210.35,899.81,211.37,901.53,212.40,904.97C213.43,908.41,214.45,939.66,215.48,940.59C216.51,941.53,217.53,942.00,218.56,942.00C219.59,942.00,220.61,936.38,221.64,936.38C222.67,936.38,223.69,938.72,224.72,938.72C225.75,938.72,226.77,936.38,227.80,936.38C228.83,936.38,229.85,941.53,230.88,941.53C231.91,941.53,232.93,934.50,233.96,934.50C234.99,934.50,236.01,939.66,237.04,939.66C238.07,939.66,239.09,904.50,240.12,904.50C241.15,904.50,242.17,944.34,243.20,944.34C244.23,944.34,245.25,943.72,246.28,942.47C247.31,941.22,248.33,912.47,249.36,912.47C250.39,912.47,251.41,934.97,252.44,934.97C253.47,934.97,254.49,909.19,255.52,909.19C256.55,909.19,257.57,939.34,258.60,941.53C259.63,943.72,260.65,944.81,261.68,944.81C262.71,944.81,263.73,898.88,264.76,898.88C265.79,898.88,266.81,908.02,267.84,915.28C268.87,922.55,269.89,942.47,270.92,942.47C271.95,942.47,272.97,939.66,274.00,939.66C275.03,939.66,276.05,940.59,277.08,940.59C278.11,940.59,279.13,939.34,280.16,936.84C281.19,934.34,282.21,912.00,283.24,912.00C284.27,912.00,285.29,931.22,286.32,931.22C287.35,931.22,288.37,901.22,289.40,901.22C290.43,901.22,291.45,901.53,292.48,902.16C293.51,902.78,294.53,921.53,295.56,927.47C296.59,933.41,297.61,937.78,298.64,937.78C299.67,937.78,300.69,898.88,301.72,898.88C302.75,898.88,303.77,944.34,304.80,944.34C305.83,944.34,306.85,900.75,307.88,900.75C308.91,900.75,309.93,943.41,310.96,943.41C311.99,943.41,313.01,942.78,314.04,941.53C315.07,940.28,316.09,917.55,317.12,909.66C318.15,901.77,319.17,894.19,320.20,894.19C321.23,894.19,322.25,897.16,323.28,903.10C324.31,909.03,325.33,942.47,326.36,942.47C327.39,942.47,328.41,892.31,329.44,892.31C330.47,892.31,331.49,939.66,332.52,939.66C333.55,939.66,334.57,937.78,335.60,934.03C336.63,930.28,337.65,903.56,338.68,903.56C339.71,903.56,340.73,918.56,341.76,918.56C342.79,918.56,343.81,905.60,344.84,904.03C345.87,902.47,346.89,901.69,347.92,901.69C348.95,901.69,349.97,922.08,351.00,929.34C352.03,936.61,353.05,945.28,354.08,945.28C355.11,945.28,356.13,914.34,357.16,914.34C358.19,914.34,359.21,931.84,360.24,934.97C361.27,938.09,362.29,938.25,363.32,939.66C364.35,941.06,365.37,943.41,366.40,943.41C367.43,943.41,368.45,933.56,369.48,933.56C370.51,933.56,371.53,936.84,372.56,936.84C373.59,936.84,374.61,931.69,375.64,931.69C376.67,931.69,377.69,932.31,378.72,933.56C379.75,934.81,380.77,940.44,381.80,941.06C382.83,941.69,383.85,942.00,384.88,942.00C385.91,942.00,386.93,911.53,387.96,911.53C388.99,911.53,390.01,934.03,391.04,934.03C392.07,934.03,393.09,898.41,394.12,898.41C395.15,898.41,396.17,940.59,397.20,940.59C398.23,940.59,399.25,936.06,400.28,929.34C401.31,922.63,402.33,900.28,403.36,900.28C404.39,900.28,405.41,901.53,406.44,904.03C407.47,906.53,408.49,929.66,409.52,932.16C410.55,934.66,411.57,934.66,412.60,935.91C413.63,937.16,414.65,938.09,415.68,939.66C416.71,941.22,417.73,945.28,418.76,945.28C419.79,945.28,420.81,937.31,421.84,937.31C422.87,937.31,423.89,945.28,424.92,945.28C425.95,945.28,426.97,897.47,428.00,897.47C429.03,897.47,430.05,931.53,431.08,932.16C432.11,932.78,433.13,932.86,434.16,933.09C435.19,933.33,436.21,933.25,437.24,933.56C438.27,933.88,439.29,937.78,440.32,937.78C441.35,937.78,442.37,891.85,443.40,891.85C444.43,891.85,445.45,893.41,446.48,896.53C447.51,899.66,448.53,936.84,449.56,940.59C450.59,944.34,451.61,946.22,452.64,946.22C453.67,946.22,454.69,942.47,455.72,934.97C456.75,927.47,457.77,881.06,458.80,881.06C459.83,881.06,460.85,902.86,461.88,913.41C462.91,923.95,463.93,944.34,464.96,944.34C465.99,944.34,467.01,897.00,468.04,897.00C469.07,897.00,470.09,929.66,471.12,932.16C472.15,934.66,473.17,935.91,474.20,935.91C475.23,935.91,476.25,933.56,477.28,933.56C478.31,933.56,479.33,942.47,480.36,942.47C481.39,942.47,482.41,938.09,483.44,929.34C484.47,920.59,485.49,887.16,486.52,887.16C487.55,887.16,488.57,941.53,489.60,941.53C490.63,941.53,491.65,937.78,492.68,937.78C493.71,937.78,494.73,942.47,495.76,942.47C496.79,942.47,497.81,895.60,498.84,895.60C499.87,895.60,500.89,900.91,501.92,903.10C502.95,905.28,503.97,904.97,505.00,908.72C506.03,912.47,507.05,934.97,508.08,934.97C509.11,934.97,510.13,933.09,511.16,933.09C512.19,933.09,513.21,933.25,514.24,933.56C515.27,933.88,516.29,934.42,517.32,935.91C518.35,937.39,519.37,942.47,520.40,942.47C521.43,942.47,522.45,897.00,523.48,897.00C524.51,897.00,525.53,943.41,526.56,943.41C527.59,943.41,528.61,943.41,529.64,943.41" fill="none" stroke="#6092c0" stroke-width="2" stroke-linejoin="round"/><path d="M89.20,808.00C90.23,810.44,91.25,812.88,92.28,812.88C93.31,812.88,94.33,808.18,95.36,808.18C96.39,808.18,97.41,813.75,98.44,813.75C99.47,813.75,100.49,811.36,101.52,810.41C102.55,809.45,103.57,808.02,104.60,808.02C105.63,808.02,106.65,808.02,107.68,808.02C108.71,808.02,109.73,808.00,110.76,808.00C111.79,808.00,112.81,808.00,113.84,808.00C114.87,808.00,115.89,809.18,116.92,809.29C117.95,809.40,118.97,809.45,120.00,809.45C121.03,809.45,122.05,808.49,123.08,808.49C124.11,808.49,125.13,808.52,126.16,808.57C127.19,808.63,128.21,808.65,129.24,808.81C130.27,808.97,131.29,816.94,132.32,816.94C133.35,816.94,134.37,815.08,135.40,814.55C136.43,814.02,137.45,814.28,138.48,813.75C139.51,813.22,140.53,808.18,141.56,808.18C142.59,808.18,143.61,809.13,144.64,809.13C145.67,809.13,146.69,808.49,147.72,808.49C148.75,808.49,149.77,816.62,150.80,816.62C151.83,816.62,152.85,816.14,153.88,815.19C154.91,814.23,155.93,808.18,156.96,808.18C157.99,808.18,159.01,808.49,160.04,808.49C161.07,808.49,162.09,808.02,163.12,808.02C164.15,808.02,165.17,818.30,166.20,818.30C167.23,818.30,168.25,810.95,169.28,809.77C170.31,808.59,171.33,808.00,172.36,808.00C173.39,808.00,174.41,808.25,175.44,808.25C176.47,808.25,177.49,808.25,178.52,808.25C179.55,808.25,180.57,814.31,181.60,814.31C182.63,814.31,183.65,809.77,184.68,809.61C185.71,809.45,186.73,809.37,187.76,809.37C188.79,809.37,189.81,809.45,190.84,809.45C191.87,809.45,192.89,809.05,193.92,809.05C194.95,809.05,195.97,816.54,197.00,816.54C198.03,816.54,199.05,808.18,200.08,808.18C201.11,808.18,202.13,814.47,203.16,814.47C204.19,814.47,205.21,808.00,206.24,808.00C207.27,808.00,208.29,815.43,209.32,815.43C210.35,815.43,211.37,815.13,212.40,814.55C213.43,813.97,214.45,808.65,215.48,808.49C216.51,808.33,217.53,808.25,218.56,808.25C219.59,808.25,220.61,809.21,221.64,809.21C222.67,809.21,223.69,808.81,224.72,808.81C225.75,808.81,226.77,809.21,227.80,809.21C228.83,809.21,229.85,808.33,230.88,808.33C231.91,808.33,232.93,809.53,233.96,809.53C234.99,809.53,236.01,808.65,237.04,808.65C238.07,808.65,239.09,814.63,240.12,814.63C241.15,814.63,242.17,808.00,243.20,808.00C244.23,808.00,245.25,808.06,246.28,808.18C247.31,808.29,248.33,813.28,249.36,813.28C250.39,813.28,251.41,809.45,252.44,809.45C253.47,809.45,254.49,813.83,255.52,813.83C256.55,813.83,257.57,808.56,258.60,808.33C259.63,808.11,260.65,808.00,261.68,808.00C262.71,808.00,263.73,815.59,264.76,815.59C265.79,815.59,266.81,814.03,267.84,812.80C268.87,811.56,269.89,808.18,270.92,808.18C271.95,808.18,272.97,808.65,274.00,808.65C275.03,808.65,276.05,808.49,277.08,808.49C278.11,808.49,279.13,808.71,280.16,809.13C281.19,809.56,282.21,813.35,283.24,813.35C284.27,813.35,285.29,810.09,286.32,810.09C287.35,810.09,288.37,815.19,289.40,815.19C290.43,815.19,291.45,815.13,292.48,815.03C293.51,814.92,294.53,811.73,295.56,810.73C296.59,809.72,297.61,808.97,298.64,808.97C299.67,808.97,300.69,815.59,301.72,815.59C302.75,815.59,303.77,808.00,304.80,808.00C305.83,808.00,306.85,815.27,307.88,815.27C308.91,815.27,309.93,808.02,310.96,808.02C311.99,808.02,313.01,808.12,314.04,808.33C315.07,808.55,316.09,812.41,317.12,813.75C318.15,815.09,319.17,816.38,320.20,816.38C321.23,816.38,322.25,815.88,323.28,814.87C324.31,813.86,325.33,808.18,326.36,808.18C327.39,808.18,328.41,816.70,329.44,816.70C330.47,816.70,331.49,808.65,332.52,808.65C333.55,808.65,334.57,808.97,335.60,809.61C336.63,810.25,337.65,814.79,338.68,814.79C339.71,814.79,340.73,812.24,341.76,812.24C342.79,812.24,343.81,814.44,344.84,814.71C345.87,814.98,346.89,815.11,347.92,815.11C348.95,815.11,349.97,811.59,351.00,810.41C352.03,809.22,353.05,808.00,354.08,808.00C355.11,808.00,356.13,812.96,357.16,812.96C358.19,812.96,359.21,809.98,360.24,809.45C361.27,808.92,362.29,808.89,363.32,808.65C364.35,808.41,365.37,808.02,366.40,808.02C367.43,808.02,368.45,809.69,369.48,809.69C370.51,809.69,371.53,809.13,372.56,809.13C373.59,809.13,374.61,810.01,375.64,810.01C376.67,810.01,377.69,809.90,378.72,809.69C379.75,809.48,380.77,808.52,381.80,808.41C382.83,808.31,383.85,808.25,384.88,808.25C385.91,808.25,386.93,813.43,387.96,813.43C388.99,813.43,390.01,809.61,391.04,809.61C392.07,809.61,393.09,815.67,394.12,815.67C395.15,815.67,396.17,808.49,397.20,808.49C398.23,808.49,399.25,809.26,400.28,810.41C401.31,811.55,402.33,815.35,403.36,815.35C404.39,815.35,405.41,815.13,406.44,814.71C407.47,814.28,408.49,810.35,409.52,809.93C410.55,809.50,411.57,809.50,412.60,809.29C413.63,809.08,414.65,808.87,415.68,808.65C416.71,808.44,417.73,808.00,418.76,808.00C419.79,808.00,420.81,809.05,421.84,809.05C422.87,809.05,423.89,808.00,424.92,808.00C425.95,808.00,426.97,815.83,428.00,815.83C429.03,815.83,430.05,810.03,431.08,809.93C432.11,809.82,433.13,809.81,434.16,809.77C435.19,809.73,436.21,809.74,437.24,809.69C438.27,809.64,439.29,808.97,440.32,808.97C441.35,808.97,442.37,816.78,443.40,816.78C444.43,816.78,445.45,816.52,446.48,815.98C447.51,815.45,448.53,808.82,449.56,808.49C450.59,808.16,451.61,808.00,452.64,808.00C453.67,808.00,454.69,808.48,455.72,809.45C456.75,810.42,457.77,818.61,458.80,818.61C459.83,818.61,460.85,814.88,461.88,813.12C462.91,811.35,463.93,808.00,464.96,808.00C465.99,808.00,467.01,815.90,468.04,815.90C469.07,815.90,470.09,810.35,471.12,809.93C472.15,809.50,473.17,809.29,474.20,809.29C475.23,809.29,476.25,809.69,477.28,809.69C478.31,809.69,479.33,808.18,480.36,808.18C481.39,808.18,482.41,808.92,483.44,810.41C484.47,811.89,485.49,817.58,486.52,817.58C487.55,817.58,488.57,808.33,489.60,808.33C490.63,808.33,491.65,808.97,492.68,808.97C493.71,808.97,494.73,808.18,495.76,808.18C496.79,808.18,497.81,816.14,498.84,816.14C499.87,816.14,500.89,815.24,501.92,814.87C502.95,814.50,503.97,814.55,505.00,813.91C506.03,813.28,507.05,809.45,508.08,809.45C509.11,809.45,510.13,809.77,511.16,809.77C512.19,809.77,513.21,809.74,514.24,809.69C515.27,809.64,516.29,809.54,517.32,809.29C518.35,809.04,519.37,808.18,520.40,808.18C521.43,808.18,522.45,815.90,523.48,815.90C524.51,815.90,525.53,808.02,526.56,808.02C527.59,808.02,528.61,808.02,529.64,808.02" fill="none" stroke="#9170b8" stroke-width="1.8" stroke-linejoin="round"/><path d="M89.20,807.10C90.23,807.10,91.25,807.10,92.28,807.10C93.31,807.10,94.33,807.10,95.36,807.10C96.39,807.10,97.41,807.10,98.44,807.10C99.47,807.10,100.49,807.10,101.52,807.10C102.55,807.10,103.57,807.10,104.60,807.10C105.63,807.10,106.65,807.10,107.68,807.10C108.71,807.10,109.73,807.10,110.76,807.10C111.79,807.10,112.81,807.10,113.84,807.10C114.87,807.10,115.89,807.10,116.92,807.10C117.95,807.10,118.97,807.10,120.00,807.10C121.03,807.10,122.05,807.10,123.08,807.10C124.11,807.10,125.13,807.10,126.16,807.10C127.19,807.10,128.21,807.10,129.24,807.10C130.27,807.10,131.29,807.10,132.32,807.10C133.35,807.10,134.37,807.10,135.40,807.10C136.43,807.10,137.45,807.10,138.48,807.10C139.51,807.10,140.53,807.10,141.56,807.10C142.59,807.10,143.61,807.10,144.64,807.10C145.67,807.10,146.69,807.10,147.72,807.10C148.75,807.10,149.77,807.10,150.80,807.10C151.83,807.10,152.85,807.10,153.88,807.10C154.91,807.10,155.93,807.10,156.96,807.10C157.99,807.10,159.01,807.10,160.04,807.10C161.07,807.10,162.09,807.10,163.12,807.10C164.15,807.10,165.17,807.10,166.20,807.10C167.23,807.10,168.25,807.10,169.28,807.10C170.31,807.10,171.33,807.10,172.36,807.10C173.39,807.10,174.41,807.10,175.44,807.10C176.47,807.10,177.49,807.10,178.52,807.10C179.55,807.10,180.57,807.10,181.60,807.10C182.63,807.10,183.65,807.10,184.68,807.10C185.71,807.10,186.73,807.10,187.76,807.10C188.79,807.10,189.81,807.10,190.84,807.10C191.87,807.10,192.89,807.10,193.92,807.10C194.95,807.10,195.97,807.10,197.00,807.10C198.03,807.10,199.05,807.10,200.08,807.10C201.11,807.10,202.13,807.10,203.16,807.10C204.19,807.10,205.21,807.10,206.24,807.10C207.27,807.10,208.29,807.10,209.32,807.10C210.35,807.10,211.37,807.10,212.40,807.10C213.43,807.10,214.45,807.10,215.48,807.10C216.51,807.10,217.53,807.10,218.56,807.10C219.59,807.10,220.61,807.10,221.64,807.10C222.67,807.10,223.69,807.10,224.72,807.10C225.75,807.10,226.77,807.10,227.80,807.10C228.83,807.10,229.85,807.10,230.88,807.10C231.91,807.10,232.93,807.10,233.96,807.10C234.99,807.10,236.01,807.10,237.04,807.10C238.07,807.10,239.09,807.10,240.12,807.10C241.15,807.10,242.17,807.10,243.20,807.10C244.23,807.10,245.25,807.10,246.28,807.10C247.31,807.10,248.33,807.10,249.36,807.10C250.39,807.10,251.41,807.10,252.44,807.10C253.47,807.10,254.49,807.10,255.52,807.10C256.55,807.10,257.57,807.10,258.60,807.10C259.63,807.10,260.65,807.10,261.68,807.10C262.71,807.10,263.73,807.10,264.76,807.10C265.79,807.10,266.81,807.10,267.84,807.10C268.87,807.10,269.89,807.10,270.92,807.10C271.95,807.10,272.97,807.10,274.00,807.10C275.03,807.10,276.05,807.10,277.08,807.10C278.11,807.10,279.13,807.10,280.16,807.10C281.19,807.10,282.21,807.10,283.24,807.10C284.27,807.10,285.29,807.10,286.32,807.10C287.35,807.10,288.37,807.10,289.40,807.10C290.43,807.10,291.45,807.10,292.48,807.10C293.51,807.10,294.53,807.10,295.56,807.10C296.59,807.10,297.61,807.10,298.64,807.10C299.67,807.10,300.69,807.10,301.72,807.10C302.75,807.10,303.77,807.10,304.80,807.10C305.83,807.10,306.85,807.10,307.88,807.10C308.91,807.10,309.93,807.10,310.96,807.10C311.99,807.10,313.01,807.10,314.04,807.10C315.07,807.10,316.09,807.10,317.12,807.10C318.15,807.10,319.17,807.10,320.20,807.10C321.23,807.10,322.25,807.10,323.28,807.10C324.31,807.10,325.33,807.10,326.36,807.10C327.39,807.10,328.41,807.10,329.44,807.10C330.47,807.10,331.49,807.10,332.52,807.10C333.55,807.10,334.57,807.10,335.60,807.10C336.63,807.10,337.65,807.10,338.68,807.10C339.71,807.10,340.73,807.10,341.76,807.10C342.79,807.10,343.81,807.10,344.84,807.10C345.87,807.10,346.89,807.10,347.92,807.10C348.95,807.10,349.97,807.10,351.00,807.10C352.03,807.10,353.05,807.10,354.08,807.10C355.11,807.10,356.13,807.10,357.16,807.10C358.19,807.10,359.21,807.10,360.24,807.10C361.27,807.10,362.29,807.10,363.32,807.10C364.35,807.10,365.37,807.10,366.40,807.10C367.43,807.10,368.45,807.10,369.48,807.10C370.51,807.10,371.53,807.10,372.56,807.10C373.59,807.10,374.61,807.10,375.64,807.10C376.67,807.10,377.69,807.10,378.72,807.10C379.75,807.10,380.77,807.10,381.80,807.10C382.83,807.10,383.85,807.10,384.88,807.10C385.91,807.10,386.93,807.10,387.96,807.10C388.99,807.10,390.01,807.10,391.04,807.10C392.07,807.10,393.09,807.10,394.12,807.10C395.15,807.10,396.17,807.10,397.20,807.10C398.23,807.10,399.25,807.10,400.28,807.10C401.31,807.10,402.33,807.10,403.36,807.10C404.39,807.10,405.41,807.10,406.44,807.10C407.47,807.10,408.49,807.10,409.52,807.10C410.55,807.10,411.57,807.10,412.60,807.10C413.63,807.10,414.65,807.10,415.68,807.10C416.71,807.10,417.73,807.10,418.76,807.10C419.79,807.10,420.81,807.10,421.84,807.10C422.87,807.10,423.89,807.10,424.92,807.10C425.95,807.10,426.97,807.10,428.00,807.10C429.03,807.10,430.05,807.10,431.08,807.10C432.11,807.10,433.13,807.10,434.16,807.10C435.19,807.10,436.21,807.10,437.24,807.10C438.27,807.10,439.29,807.10,440.32,807.10C441.35,807.10,442.37,807.10,443.40,807.10C444.43,807.10,445.45,807.10,446.48,807.10C447.51,807.10,448.53,807.10,449.56,807.10C450.59,807.10,451.61,807.10,452.64,807.10C453.67,807.10,454.69,807.10,455.72,807.10C456.75,807.10,457.77,807.10,458.80,807.10C459.83,807.10,460.85,807.10,461.88,807.10C462.91,807.10,463.93,807.10,464.96,807.10C465.99,807.10,467.01,807.10,468.04,807.10C469.07,807.10,470.09,807.10,471.12,807.10C472.15,807.10,473.17,807.10,474.20,807.10C475.23,807.10,476.25,807.10,477.28,807.10C478.31,807.10,479.33,807.10,480.36,807.10C481.39,807.10,482.41,807.10,483.44,807.10C484.47,807.10,485.49,807.10,486.52,807.10C487.55,807.10,488.57,807.10,489.60,807.10C490.63,807.10,491.65,807.10,492.68,807.10C493.71,807.10,494.73,807.10,495.76,807.10C496.79,807.10,497.81,807.10,498.84,807.10C499.87,807.10,500.89,807.10,501.92,807.10C502.95,807.10,503.97,807.10,505.00,807.10C506.03,807.10,507.05,807.10,508.08,807.10C509.11,807.10,510.13,807.10,511.16,807.10C512.19,807.10,513.21,807.10,514.24,807.10C515.27,807.10,516.29,807.10,517.32,807.10C518.35,807.10,519.37,807.10,520.40,807.10C521.43,807.10,522.45,807.10,523.48,807.10C524.51,807.10,525.53,807.10,526.56,807.10C527.59,807.10,528.61,807.10,529.64,807.10" fill="none" stroke="#d36086" stroke-width="2"/><circle cx="51" cy="1005.3" r="4" fill="#d36086"/><circle cx="51" cy="1031" r="4" fill="#9170b8"/><circle cx="310" cy="1005.3" r="4" fill="#ca8eae"/><circle cx="310" cy="1031" r="4" fill="#6092c0"/><rect x="553" y="994" width="4" height="29.5" fill="#b4b5bd"/></svg>
<svg class="ov" width="1920" height="1080" viewBox="0 0 1920 1080"><path d="M1367.40,480.53C1368.06,485.68,1368.71,490.83,1369.37,490.83C1370.02,490.83,1370.68,484.28,1371.33,484.28C1371.99,484.28,1372.64,493.17,1373.30,493.17C1373.96,493.17,1374.61,488.96,1375.27,488.96C1375.92,488.96,1376.58,488.96,1377.23,488.96C1377.89,488.96,1378.54,493.17,1379.20,493.17C1379.86,493.17,1380.51,491.88,1381.17,491.30C1381.82,490.71,1382.48,489.66,1383.13,489.66C1383.79,489.66,1384.44,490.44,1385.10,490.60C1385.76,490.75,1386.41,490.67,1387.07,490.83C1387.72,490.99,1388.38,496.21,1389.03,496.21C1389.69,496.21,1390.34,491.30,1391.00,491.30C1391.66,491.30,1392.31,495.74,1392.97,495.74C1393.62,495.74,1394.28,495.74,1394.93,495.74C1395.59,495.74,1396.24,486.85,1396.90,486.85C1397.56,486.85,1398.21,488.30,1398.87,489.89C1399.52,491.49,1400.18,496.45,1400.83,496.45C1401.49,496.45,1402.14,485.92,1402.80,485.92C1403.46,485.92,1404.11,492.00,1404.77,492.00C1405.42,492.00,1406.08,491.30,1406.73,491.30C1407.39,491.30,1408.04,493.64,1408.70,493.64C1409.36,493.64,1410.01,488.49,1410.67,488.49C1411.32,488.49,1411.98,497.15,1412.63,497.15C1413.29,497.15,1413.94,492.82,1414.60,488.49L1415.00,504.00L1367.00,504.00Z" fill="#cddbec"/><path d="M1367.40,480.53C1368.06,485.68,1368.71,490.83,1369.37,490.83C1370.02,490.83,1370.68,484.28,1371.33,484.28C1371.99,484.28,1372.64,493.17,1373.30,493.17C1373.96,493.17,1374.61,488.96,1375.27,488.96C1375.92,488.96,1376.58,488.96,1377.23,488.96C1377.89,488.96,1378.54,493.17,1379.20,493.17C1379.86,493.17,1380.51,491.88,1381.17,491.30C1381.82,490.71,1382.48,489.66,1383.13,489.66C1383.79,489.66,1384.44,490.44,1385.10,490.60C1385.76,490.75,1386.41,490.67,1387.07,490.83C1387.72,490.99,1388.38,496.21,1389.03,496.21C1389.69,496.21,1390.34,491.30,1391.00,491.30C1391.66,491.30,1392.31,495.74,1392.97,495.74C1393.62,495.74,1394.28,495.74,1394.93,495.74C1395.59,495.74,1396.24,486.85,1396.90,486.85C1397.56,486.85,1398.21,488.30,1398.87,489.89C1399.52,491.49,1400.18,496.45,1400.83,496.45C1401.49,496.45,1402.14,485.92,1402.80,485.92C1403.46,485.92,1404.11,492.00,1404.77,492.00C1405.42,492.00,1406.08,491.30,1406.73,491.30C1407.39,491.30,1408.04,493.64,1408.70,493.64C1409.36,493.64,1410.01,488.49,1410.67,488.49C1411.32,488.49,1411.98,497.15,1412.63,497.15C1413.29,497.15,1413.94,492.82,1414.60,488.49" fill="none" stroke="#6092c0" stroke-width="1.6" stroke-linejoin="round"/><path d="M1527.40,497.38C1528.06,490.36,1528.71,483.34,1529.37,482.87C1530.02,482.41,1530.68,482.17,1531.33,482.17C1531.99,482.17,1532.64,485.68,1533.30,485.68C1533.96,485.68,1534.61,483.81,1535.27,483.81C1535.92,483.81,1536.58,484.98,1537.23,484.98C1537.89,484.98,1538.54,483.65,1539.20,483.34C1539.86,483.03,1540.51,482.87,1541.17,482.87C1541.82,482.87,1542.48,484.28,1543.13,484.28C1543.79,484.28,1544.44,481.00,1545.10,481.00C1545.76,481.00,1546.41,483.34,1547.07,483.34C1547.72,483.34,1548.38,481.94,1549.03,481.94C1549.69,481.94,1550.34,483.03,1551.00,483.34C1551.66,483.65,1552.31,483.81,1552.97,483.81C1553.62,483.81,1554.28,483.81,1554.93,483.81C1555.59,483.81,1556.24,482.87,1556.90,482.87C1557.56,482.87,1558.21,484.28,1558.87,484.28C1559.52,484.28,1560.18,481.00,1560.83,481.00C1561.49,481.00,1562.14,481.20,1562.80,481.47C1563.46,481.74,1564.11,482.48,1564.77,482.64C1565.42,482.80,1566.08,482.87,1566.73,482.87C1567.39,482.87,1568.04,482.76,1568.70,482.64C1569.36,482.52,1570.01,482.17,1570.67,482.17C1571.32,482.17,1571.98,482.91,1572.63,483.58C1573.29,484.24,1573.94,485.19,1574.60,486.15L1575.00,504.00L1527.00,504.00Z" fill="#cae7df"/><path d="M1527.40,497.38C1528.06,490.36,1528.71,483.34,1529.37,482.87C1530.02,482.41,1530.68,482.17,1531.33,482.17C1531.99,482.17,1532.64,485.68,1533.30,485.68C1533.96,485.68,1534.61,483.81,1535.27,483.81C1535.92,483.81,1536.58,484.98,1537.23,484.98C1537.89,484.98,1538.54,483.65,1539.20,483.34C1539.86,483.03,1540.51,482.87,1541.17,482.87C1541.82,482.87,1542.48,484.28,1543.13,484.28C1543.79,484.28,1544.44,481.00,1545.10,481.00C1545.76,481.00,1546.41,483.34,1547.07,483.34C1547.72,483.34,1548.38,481.94,1549.03,481.94C1549.69,481.94,1550.34,483.03,1551.00,483.34C1551.66,483.65,1552.31,483.81,1552.97,483.81C1553.62,483.81,1554.28,483.81,1554.93,483.81C1555.59,483.81,1556.24,482.87,1556.90,482.87C1557.56,482.87,1558.21,484.28,1558.87,484.28C1559.52,484.28,1560.18,481.00,1560.83,481.00C1561.49,481.00,1562.14,481.20,1562.80,481.47C1563.46,481.74,1564.11,482.48,1564.77,482.64C1565.42,482.80,1566.08,482.87,1566.73,482.87C1567.39,482.87,1568.04,482.76,1568.70,482.64C1569.36,482.52,1570.01,482.17,1570.67,482.17C1571.32,482.17,1571.98,482.91,1572.63,483.58C1573.29,484.24,1573.94,485.19,1574.60,486.15" fill="none" stroke="#54b399" stroke-width="1.6" stroke-linejoin="round"/><path d="M1687.40,503.70C1688.06,492.35,1688.71,481.00,1689.37,481.00C1690.02,481.00,1690.68,488.22,1691.33,492.00C1691.99,495.78,1692.64,503.70,1693.30,503.70C1693.96,503.70,1694.61,483.34,1695.27,483.34C1695.92,483.34,1696.58,486.03,1697.23,488.02C1697.89,490.01,1698.54,495.28,1699.20,495.28C1699.86,495.28,1700.51,487.09,1701.17,487.09C1701.82,487.09,1702.48,495.04,1703.13,495.04C1703.79,495.04,1704.44,493.17,1705.10,491.30C1705.76,489.43,1706.41,483.81,1707.07,483.81C1707.72,483.81,1708.38,484.82,1709.03,486.85C1709.69,488.88,1710.34,498.08,1711.00,498.08C1711.66,498.08,1712.31,496.06,1712.97,495.04C1713.62,494.03,1714.28,494.03,1714.93,492.00C1715.59,489.97,1716.24,481.47,1716.90,481.47C1717.56,481.47,1718.21,500.66,1718.87,500.66C1719.52,500.66,1720.18,491.53,1720.83,491.53C1721.49,491.53,1722.14,495.51,1722.80,495.51C1723.46,495.51,1724.11,481.47,1724.77,481.47C1725.42,481.47,1726.08,492.47,1726.73,492.47C1727.39,492.47,1728.04,487.55,1728.70,487.55C1729.36,487.55,1730.01,498.08,1730.67,498.08C1731.32,498.08,1731.98,498.08,1732.63,498.08C1733.29,498.08,1733.94,490.71,1734.60,483.34L1735.00,504.00L1687.00,504.00Z" fill="#f5dcc7"/><path d="M1687.40,503.70C1688.06,492.35,1688.71,481.00,1689.37,481.00C1690.02,481.00,1690.68,488.22,1691.33,492.00C1691.99,495.78,1692.64,503.70,1693.30,503.70C1693.96,503.70,1694.61,483.34,1695.27,483.34C1695.92,483.34,1696.58,486.03,1697.23,488.02C1697.89,490.01,1698.54,495.28,1699.20,495.28C1699.86,495.28,1700.51,487.09,1701.17,487.09C1701.82,487.09,1702.48,495.04,1703.13,495.04C1703.79,495.04,1704.44,493.17,1705.10,491.30C1705.76,489.43,1706.41,483.81,1707.07,483.81C1707.72,483.81,1708.38,484.82,1709.03,486.85C1709.69,488.88,1710.34,498.08,1711.00,498.08C1711.66,498.08,1712.31,496.06,1712.97,495.04C1713.62,494.03,1714.28,494.03,1714.93,492.00C1715.59,489.97,1716.24,481.47,1716.90,481.47C1717.56,481.47,1718.21,500.66,1718.87,500.66C1719.52,500.66,1720.18,491.53,1720.83,491.53C1721.49,491.53,1722.14,495.51,1722.80,495.51C1723.46,495.51,1724.11,481.47,1724.77,481.47C1725.42,481.47,1726.08,492.47,1726.73,492.47C1727.39,492.47,1728.04,487.55,1728.70,487.55C1729.36,487.55,1730.01,498.08,1730.67,498.08C1731.32,498.08,1731.98,498.08,1732.63,498.08C1733.29,498.08,1733.94,490.71,1734.60,483.34" fill="none" stroke="#da8b45" stroke-width="1.6" stroke-linejoin="round"/><rect x="1815" y="488" width="64" height="8" fill="#d3dae6"/><rect x="1815" y="488" width="59" height="8" fill="#006bb4"/><path d="M1367.40,521.77C1368.06,521.85,1368.71,521.92,1369.37,522.24C1370.02,522.55,1370.68,523.87,1371.33,523.87C1371.99,523.87,1372.64,522.94,1373.30,522.94C1373.96,522.94,1374.61,523.17,1375.27,523.17C1375.92,523.17,1376.58,522.47,1377.23,522.47C1377.89,522.47,1378.54,523.17,1379.20,523.41C1379.86,523.64,1380.51,523.87,1381.17,523.87C1381.82,523.87,1382.48,523.41,1383.13,523.41C1383.79,523.41,1384.44,523.41,1385.10,523.41C1385.76,523.41,1386.41,522.16,1387.07,522.00C1387.72,521.85,1388.38,521.77,1389.03,521.77C1389.69,521.77,1390.34,522.04,1391.00,522.24C1391.66,522.43,1392.31,522.94,1392.97,522.94C1393.62,522.94,1394.28,522.00,1394.93,522.00C1395.59,522.00,1396.24,522.00,1396.90,522.00C1397.56,522.00,1398.21,523.17,1398.87,523.17C1399.52,523.17,1400.18,522.00,1400.83,522.00C1401.49,522.00,1402.14,524.34,1402.80,524.34C1403.46,524.34,1404.11,522.78,1404.77,522.47C1405.42,522.16,1406.08,522.00,1406.73,522.00C1407.39,522.00,1408.04,522.94,1408.70,522.94C1409.36,522.94,1410.01,522.00,1410.67,522.00C1411.32,522.00,1411.98,522.24,1412.63,522.24C1413.29,522.24,1413.94,522.24,1414.60,522.24L1415.00,545.00L1367.00,545.00Z" fill="#cddbec"/><path d="M1367.40,521.77C1368.06,521.85,1368.71,521.92,1369.37,522.24C1370.02,522.55,1370.68,523.87,1371.33,523.87C1371.99,523.87,1372.64,522.94,1373.30,522.94C1373.96,522.94,1374.61,523.17,1375.27,523.17C1375.92,523.17,1376.58,522.47,1377.23,522.47C1377.89,522.47,1378.54,523.17,1379.20,523.41C1379.86,523.64,1380.51,523.87,1381.17,523.87C1381.82,523.87,1382.48,523.41,1383.13,523.41C1383.79,523.41,1384.44,523.41,1385.10,523.41C1385.76,523.41,1386.41,522.16,1387.07,522.00C1387.72,521.85,1388.38,521.77,1389.03,521.77C1389.69,521.77,1390.34,522.04,1391.00,522.24C1391.66,522.43,1392.31,522.94,1392.97,522.94C1393.62,522.94,1394.28,522.00,1394.93,522.00C1395.59,522.00,1396.24,522.00,1396.90,522.00C1397.56,522.00,1398.21,523.17,1398.87,523.17C1399.52,523.17,1400.18,522.00,1400.83,522.00C1401.49,522.00,1402.14,524.34,1402.80,524.34C1403.46,524.34,1404.11,522.78,1404.77,522.47C1405.42,522.16,1406.08,522.00,1406.73,522.00C1407.39,522.00,1408.04,522.94,1408.70,522.94C1409.36,522.94,1410.01,522.00,1410.67,522.00C1411.32,522.00,1411.98,522.24,1412.63,522.24C1413.29,522.24,1413.94,522.24,1414.60,522.24" fill="none" stroke="#6092c0" stroke-width="1.6" stroke-linejoin="round"/><path d="M1527.40,540.96C1528.06,536.92,1528.71,532.88,1529.37,529.72C1530.02,526.57,1530.68,522.00,1531.33,522.00C1531.99,522.00,1532.64,526.21,1533.30,526.21C1533.96,526.21,1534.61,524.81,1535.27,524.81C1535.92,524.81,1536.58,527.62,1537.23,527.62C1537.89,527.62,1538.54,523.87,1539.20,523.87C1539.86,523.87,1540.51,529.02,1541.17,529.02C1541.82,529.02,1542.48,525.59,1543.13,525.28C1543.79,524.97,1544.44,524.81,1545.10,524.81C1545.76,524.81,1546.41,527.62,1547.07,527.62C1547.72,527.62,1548.38,526.99,1549.03,526.68C1549.69,526.37,1550.34,525.75,1551.00,525.75C1551.66,525.75,1552.31,526.06,1552.97,526.68C1553.62,527.31,1554.28,529.72,1554.93,529.72C1555.59,529.72,1556.24,527.54,1556.90,526.92C1557.56,526.29,1558.21,526.25,1558.87,525.98C1559.52,525.71,1560.18,525.28,1560.83,525.28C1561.49,525.28,1562.14,525.28,1562.80,525.28C1563.46,525.28,1564.11,525.51,1564.77,525.98C1565.42,526.45,1566.08,531.36,1566.73,531.36C1567.39,531.36,1568.04,527.07,1568.70,526.92C1569.36,526.76,1570.01,526.84,1570.67,526.68C1571.32,526.53,1571.98,524.34,1572.63,524.34C1573.29,524.34,1573.94,527.97,1574.60,531.60L1575.00,545.00L1527.00,545.00Z" fill="#cae7df"/><path d="M1527.40,540.96C1528.06,536.92,1528.71,532.88,1529.37,529.72C1530.02,526.57,1530.68,522.00,1531.33,522.00C1531.99,522.00,1532.64,526.21,1533.30,526.21C1533.96,526.21,1534.61,524.81,1535.27,524.81C1535.92,524.81,1536.58,527.62,1537.23,527.62C1537.89,527.62,1538.54,523.87,1539.20,523.87C1539.86,523.87,1540.51,529.02,1541.17,529.02C1541.82,529.02,1542.48,525.59,1543.13,525.28C1543.79,524.97,1544.44,524.81,1545.10,524.81C1545.76,524.81,1546.41,527.62,1547.07,527.62C1547.72,527.62,1548.38,526.99,1549.03,526.68C1549.69,526.37,1550.34,525.75,1551.00,525.75C1551.66,525.75,1552.31,526.06,1552.97,526.68C1553.62,527.31,1554.28,529.72,1554.93,529.72C1555.59,529.72,1556.24,527.54,1556.90,526.92C1557.56,526.29,1558.21,526.25,1558.87,525.98C1559.52,525.71,1560.18,525.28,1560.83,525.28C1561.49,525.28,1562.14,525.28,1562.80,525.28C1563.46,525.28,1564.11,525.51,1564.77,525.98C1565.42,526.45,1566.08,531.36,1566.73,531.36C1567.39,531.36,1568.04,527.07,1568.70,526.92C1569.36,526.76,1570.01,526.84,1570.67,526.68C1571.32,526.53,1571.98,524.34,1572.63,524.34C1573.29,524.34,1573.94,527.97,1574.60,531.60" fill="none" stroke="#54b399" stroke-width="1.6" stroke-linejoin="round"/><line x1="1687" y1="544.5" x2="1735" y2="544.5" stroke="#da8b45" stroke-width="1.5"/><rect x="1815" y="529" width="64" height="8" fill="#d3dae6"/><rect x="1815" y="529" width="1.3" height="8" fill="#006bb4"/><path d="M1367.40,574.23C1368.06,573.77,1368.71,573.30,1369.37,573.30C1370.02,573.30,1370.68,573.53,1371.33,573.53C1371.99,573.53,1372.64,573.10,1373.30,572.83C1373.96,572.56,1374.61,571.89,1375.27,571.89C1375.92,571.89,1376.58,572.95,1377.23,573.30C1377.89,573.65,1378.54,574.00,1379.20,574.00C1379.86,574.00,1380.51,572.83,1381.17,572.83C1381.82,572.83,1382.48,573.14,1383.13,573.30C1383.79,573.45,1384.44,573.77,1385.10,573.77C1385.76,573.77,1386.41,573.77,1387.07,573.77C1387.72,573.77,1388.38,572.83,1389.03,572.83C1389.69,572.83,1390.34,574.23,1391.00,574.23C1391.66,574.23,1392.31,571.89,1392.97,571.89C1393.62,571.89,1394.28,573.22,1394.93,573.53C1395.59,573.84,1396.24,574.00,1396.90,574.00C1397.56,574.00,1398.21,572.40,1398.87,571.89C1399.52,571.39,1400.18,571.58,1400.83,570.96C1401.49,570.33,1402.14,563.00,1402.80,563.00C1403.46,563.00,1404.11,573.77,1404.77,573.77C1405.42,573.77,1406.08,572.83,1406.73,572.83C1407.39,572.83,1408.04,573.30,1408.70,573.30C1409.36,573.30,1410.01,571.89,1410.67,571.89C1411.32,571.89,1411.98,574.00,1412.63,574.00C1413.29,574.00,1413.94,573.41,1414.60,572.83L1415.00,586.00L1367.00,586.00Z" fill="#cddbec"/><path d="M1367.40,574.23C1368.06,573.77,1368.71,573.30,1369.37,573.30C1370.02,573.30,1370.68,573.53,1371.33,573.53C1371.99,573.53,1372.64,573.10,1373.30,572.83C1373.96,572.56,1374.61,571.89,1375.27,571.89C1375.92,571.89,1376.58,572.95,1377.23,573.30C1377.89,573.65,1378.54,574.00,1379.20,574.00C1379.86,574.00,1380.51,572.83,1381.17,572.83C1381.82,572.83,1382.48,573.14,1383.13,573.30C1383.79,573.45,1384.44,573.77,1385.10,573.77C1385.76,573.77,1386.41,573.77,1387.07,573.77C1387.72,573.77,1388.38,572.83,1389.03,572.83C1389.69,572.83,1390.34,574.23,1391.00,574.23C1391.66,574.23,1392.31,571.89,1392.97,571.89C1393.62,571.89,1394.28,573.22,1394.93,573.53C1395.59,573.84,1396.24,574.00,1396.90,574.00C1397.56,574.00,1398.21,572.40,1398.87,571.89C1399.52,571.39,1400.18,571.58,1400.83,570.96C1401.49,570.33,1402.14,563.00,1402.80,563.00C1403.46,563.00,1404.11,573.77,1404.77,573.77C1405.42,573.77,1406.08,572.83,1406.73,572.83C1407.39,572.83,1408.04,573.30,1408.70,573.30C1409.36,573.30,1410.01,571.89,1410.67,571.89C1411.32,571.89,1411.98,574.00,1412.63,574.00C1413.29,574.00,1413.94,573.41,1414.60,572.83" fill="none" stroke="#6092c0" stroke-width="1.6" stroke-linejoin="round"/><path d="M1527.40,581.25C1528.06,573.88,1528.71,566.51,1529.37,566.51C1530.02,566.51,1530.68,566.98,1531.33,567.92C1531.99,568.85,1532.64,574.23,1533.30,574.23C1533.96,574.23,1534.61,572.13,1535.27,571.43C1535.92,570.72,1536.58,570.96,1537.23,570.02C1537.89,569.09,1538.54,565.58,1539.20,565.58C1539.86,565.58,1540.51,568.62,1541.17,568.62C1541.82,568.62,1542.48,566.43,1543.13,566.28C1543.79,566.12,1544.44,566.04,1545.10,566.04C1545.76,566.04,1546.41,570.26,1547.07,570.26C1547.72,570.26,1548.38,567.06,1549.03,566.75C1549.69,566.43,1550.34,566.43,1551.00,566.28C1551.66,566.12,1552.31,565.81,1552.97,565.81C1553.62,565.81,1554.28,566.28,1554.93,566.75C1555.59,567.21,1556.24,568.62,1556.90,568.62C1557.56,568.62,1558.21,567.21,1558.87,567.21C1559.52,567.21,1560.18,571.50,1560.83,571.66C1561.49,571.82,1562.14,571.89,1562.80,571.89C1563.46,571.89,1564.11,567.68,1564.77,567.68C1565.42,567.68,1566.08,569.94,1566.73,570.96C1567.39,571.97,1568.04,573.77,1568.70,573.77C1569.36,573.77,1570.01,563.00,1570.67,563.00C1571.32,563.00,1571.98,563.08,1572.63,563.24C1573.29,563.39,1573.94,568.93,1574.60,574.47L1575.00,586.00L1527.00,586.00Z" fill="#cae7df"/><path d="M1527.40,581.25C1528.06,573.88,1528.71,566.51,1529.37,566.51C1530.02,566.51,1530.68,566.98,1531.33,567.92C1531.99,568.85,1532.64,574.23,1533.30,574.23C1533.96,574.23,1534.61,572.13,1535.27,571.43C1535.92,570.72,1536.58,570.96,1537.23,570.02C1537.89,569.09,1538.54,565.58,1539.20,565.58C1539.86,565.58,1540.51,568.62,1541.17,568.62C1541.82,568.62,1542.48,566.43,1543.13,566.28C1543.79,566.12,1544.44,566.04,1545.10,566.04C1545.76,566.04,1546.41,570.26,1547.07,570.26C1547.72,570.26,1548.38,567.06,1549.03,566.75C1549.69,566.43,1550.34,566.43,1551.00,566.28C1551.66,566.12,1552.31,565.81,1552.97,565.81C1553.62,565.81,1554.28,566.28,1554.93,566.75C1555.59,567.21,1556.24,568.62,1556.90,568.62C1557.56,568.62,1558.21,567.21,1558.87,567.21C1559.52,567.21,1560.18,571.50,1560.83,571.66C1561.49,571.82,1562.14,571.89,1562.80,571.89C1563.46,571.89,1564.11,567.68,1564.77,567.68C1565.42,567.68,1566.08,569.94,1566.73,570.96C1567.39,571.97,1568.04,573.77,1568.70,573.77C1569.36,573.77,1570.01,563.00,1570.67,563.00C1571.32,563.00,1571.98,563.08,1572.63,563.24C1573.29,563.39,1573.94,568.93,1574.60,574.47" fill="none" stroke="#54b399" stroke-width="1.6" stroke-linejoin="round"/><line x1="1687" y1="585.5" x2="1735" y2="585.5" stroke="#da8b45" stroke-width="1.5"/><rect x="1815" y="570" width="64" height="8" fill="#d3dae6"/><rect x="1815" y="570" width="1.3" height="8" fill="#006bb4"/><path d="M1367.40,604.24C1368.06,604.12,1368.71,604.00,1369.37,604.00C1370.02,604.00,1370.68,604.00,1371.33,604.00C1371.99,604.00,1372.64,604.08,1373.30,604.24C1373.96,604.39,1374.61,606.81,1375.27,606.81C1375.92,606.81,1376.58,605.41,1377.23,605.41C1377.89,605.41,1378.54,605.41,1379.20,605.41C1379.86,605.41,1380.51,606.34,1381.17,606.34C1381.82,606.34,1382.48,605.87,1383.13,605.87C1383.79,605.87,1384.44,607.75,1385.10,607.75C1385.76,607.75,1386.41,606.50,1387.07,605.87C1387.72,605.25,1388.38,604.00,1389.03,604.00C1389.69,604.00,1390.34,605.87,1391.00,605.87C1391.66,605.87,1392.31,605.80,1392.97,605.64C1393.62,605.48,1394.28,604.00,1394.93,604.00C1395.59,604.00,1396.24,604.00,1396.90,604.00C1397.56,604.00,1398.21,604.70,1398.87,604.94C1399.52,605.17,1400.18,605.09,1400.83,605.41C1401.49,605.72,1402.14,607.28,1402.80,607.28C1403.46,607.28,1404.11,604.00,1404.77,604.00C1405.42,604.00,1406.08,604.31,1406.73,604.47C1407.39,604.63,1408.04,604.94,1408.70,604.94C1409.36,604.94,1410.01,604.47,1410.67,604.47C1411.32,604.47,1411.98,604.47,1412.63,604.47C1413.29,604.47,1413.94,604.70,1414.60,604.94L1415.00,627.00L1367.00,627.00Z" fill="#cddbec"/><path d="M1367.40,604.24C1368.06,604.12,1368.71,604.00,1369.37,604.00C1370.02,604.00,1370.68,604.00,1371.33,604.00C1371.99,604.00,1372.64,604.08,1373.30,604.24C1373.96,604.39,1374.61,606.81,1375.27,606.81C1375.92,606.81,1376.58,605.41,1377.23,605.41C1377.89,605.41,1378.54,605.41,1379.20,605.41C1379.86,605.41,1380.51,606.34,1381.17,606.34C1381.82,606.34,1382.48,605.87,1383.13,605.87C1383.79,605.87,1384.44,607.75,1385.10,607.75C1385.76,607.75,1386.41,606.50,1387.07,605.87C1387.72,605.25,1388.38,604.00,1389.03,604.00C1389.69,604.00,1390.34,605.87,1391.00,605.87C1391.66,605.87,1392.31,605.80,1392.97,605.64C1393.62,605.48,1394.28,604.00,1394.93,604.00C1395.59,604.00,1396.24,604.00,1396.90,604.00C1397.56,604.00,1398.21,604.70,1398.87,604.94C1399.52,605.17,1400.18,605.09,1400.83,605.41C1401.49,605.72,1402.14,607.28,1402.80,607.28C1403.46,607.28,1404.11,604.00,1404.77,604.00C1405.42,604.00,1406.08,604.31,1406.73,604.47C1407.39,604.63,1408.04,604.94,1408.70,604.94C1409.36,604.94,1410.01,604.47,1410.67,604.47C1411.32,604.47,1411.98,604.47,1412.63,604.47C1413.29,604.47,1413.94,604.70,1414.60,604.94" fill="none" stroke="#6092c0" stroke-width="1.6" stroke-linejoin="round"/><path d="M1527.40,622.72C1528.06,617.69,1528.71,612.66,1529.37,612.66C1530.02,612.66,1530.68,615.23,1531.33,615.23C1531.99,615.23,1532.64,612.54,1533.30,611.49C1533.96,610.44,1534.61,609.62,1535.27,608.92C1535.92,608.21,1536.58,607.28,1537.23,607.28C1537.89,607.28,1538.54,615.47,1539.20,615.47C1539.86,615.47,1540.51,612.43,1541.17,612.43C1541.82,612.43,1542.48,614.69,1543.13,615.47C1543.79,616.25,1544.44,617.11,1545.10,617.11C1545.76,617.11,1546.41,616.52,1547.07,616.17C1547.72,615.82,1548.38,615.00,1549.03,615.00C1549.69,615.00,1550.34,615.23,1551.00,615.23C1551.66,615.23,1552.31,615.00,1552.97,614.53C1553.62,614.06,1554.28,608.76,1554.93,607.98C1555.59,607.20,1556.24,606.81,1556.90,606.81C1557.56,606.81,1558.21,610.55,1558.87,610.55C1559.52,610.55,1560.18,604.00,1560.83,604.00C1561.49,604.00,1562.14,608.68,1562.80,609.62C1563.46,610.55,1564.11,611.02,1564.77,611.02C1565.42,611.02,1566.08,610.79,1566.73,610.79C1567.39,610.79,1568.04,611.72,1568.70,611.72C1569.36,611.72,1570.01,611.72,1570.67,611.72C1571.32,611.72,1571.98,609.85,1572.63,609.85C1573.29,609.85,1573.94,612.19,1574.60,614.53L1575.00,627.00L1527.00,627.00Z" fill="#cae7df"/><path d="M1527.40,622.72C1528.06,617.69,1528.71,612.66,1529.37,612.66C1530.02,612.66,1530.68,615.23,1531.33,615.23C1531.99,615.23,1532.64,612.54,1533.30,611.49C1533.96,610.44,1534.61,609.62,1535.27,608.92C1535.92,608.21,1536.58,607.28,1537.23,607.28C1537.89,607.28,1538.54,615.47,1539.20,615.47C1539.86,615.47,1540.51,612.43,1541.17,612.43C1541.82,612.43,1542.48,614.69,1543.13,615.47C1543.79,616.25,1544.44,617.11,1545.10,617.11C1545.76,617.11,1546.41,616.52,1547.07,616.17C1547.72,615.82,1548.38,615.00,1549.03,615.00C1549.69,615.00,1550.34,615.23,1551.00,615.23C1551.66,615.23,1552.31,615.00,1552.97,614.53C1553.62,614.06,1554.28,608.76,1554.93,607.98C1555.59,607.20,1556.24,606.81,1556.90,606.81C1557.56,606.81,1558.21,610.55,1558.87,610.55C1559.52,610.55,1560.18,604.00,1560.83,604.00C1561.49,604.00,1562.14,608.68,1562.80,609.62C1563.46,610.55,1564.11,611.02,1564.77,611.02C1565.42,611.02,1566.08,610.79,1566.73,610.79C1567.39,610.79,1568.04,611.72,1568.70,611.72C1569.36,611.72,1570.01,611.72,1570.67,611.72C1571.32,611.72,1571.98,609.85,1572.63,609.85C1573.29,609.85,1573.94,612.19,1574.60,614.53" fill="none" stroke="#54b399" stroke-width="1.6" stroke-linejoin="round"/><line x1="1687" y1="626.5" x2="1735" y2="626.5" stroke="#da8b45" stroke-width="1.5"/><rect x="1815" y="611" width="64" height="8" fill="#d3dae6"/><rect x="1815" y="611" width="1.3" height="8" fill="#006bb4"/><path d="M1367.40,653.19C1368.06,652.84,1368.71,652.49,1369.37,652.49C1370.02,652.49,1370.68,653.66,1371.33,653.66C1371.99,653.66,1372.64,652.02,1373.30,652.02C1373.96,652.02,1374.61,652.02,1375.27,652.02C1375.92,652.02,1376.58,651.09,1377.23,651.09C1377.89,651.09,1378.54,652.72,1379.20,652.72C1379.86,652.72,1380.51,651.79,1381.17,651.79C1381.82,651.79,1382.48,653.89,1383.13,653.89C1383.79,653.89,1384.44,651.09,1385.10,651.09C1385.76,651.09,1386.41,653.66,1387.07,653.66C1387.72,653.66,1388.38,651.32,1389.03,651.32C1389.69,651.32,1390.34,653.43,1391.00,653.43C1391.66,653.43,1392.31,653.08,1392.97,652.96C1393.62,652.84,1394.28,652.88,1394.93,652.72C1395.59,652.57,1396.24,652.02,1396.90,652.02C1397.56,652.02,1398.21,652.18,1398.87,652.26C1399.52,652.33,1400.18,652.49,1400.83,652.49C1401.49,652.49,1402.14,645.00,1402.80,645.00C1403.46,645.00,1404.11,652.49,1404.77,652.49C1405.42,652.49,1406.08,652.02,1406.73,652.02C1407.39,652.02,1408.04,654.36,1408.70,654.36C1409.36,654.36,1410.01,651.24,1410.67,650.62C1411.32,649.99,1411.98,649.68,1412.63,649.68C1413.29,649.68,1413.94,651.20,1414.60,652.72L1415.00,668.00L1367.00,668.00Z" fill="#cddbec"/><path d="M1367.40,653.19C1368.06,652.84,1368.71,652.49,1369.37,652.49C1370.02,652.49,1370.68,653.66,1371.33,653.66C1371.99,653.66,1372.64,652.02,1373.30,652.02C1373.96,652.02,1374.61,652.02,1375.27,652.02C1375.92,652.02,1376.58,651.09,1377.23,651.09C1377.89,651.09,1378.54,652.72,1379.20,652.72C1379.86,652.72,1380.51,651.79,1381.17,651.79C1381.82,651.79,1382.48,653.89,1383.13,653.89C1383.79,653.89,1384.44,651.09,1385.10,651.09C1385.76,651.09,1386.41,653.66,1387.07,653.66C1387.72,653.66,1388.38,651.32,1389.03,651.32C1389.69,651.32,1390.34,653.43,1391.00,653.43C1391.66,653.43,1392.31,653.08,1392.97,652.96C1393.62,652.84,1394.28,652.88,1394.93,652.72C1395.59,652.57,1396.24,652.02,1396.90,652.02C1397.56,652.02,1398.21,652.18,1398.87,652.26C1399.52,652.33,1400.18,652.49,1400.83,652.49C1401.49,652.49,1402.14,645.00,1402.80,645.00C1403.46,645.00,1404.11,652.49,1404.77,652.49C1405.42,652.49,1406.08,652.02,1406.73,652.02C1407.39,652.02,1408.04,654.36,1408.70,654.36C1409.36,654.36,1410.01,651.24,1410.67,650.62C1411.32,649.99,1411.98,649.68,1412.63,649.68C1413.29,649.68,1413.94,651.20,1414.60,652.72" fill="none" stroke="#6092c0" stroke-width="1.6" stroke-linejoin="round"/><path d="M1527.40,663.72C1528.06,659.82,1528.71,655.92,1529.37,654.36C1530.02,652.80,1530.68,652.02,1531.33,652.02C1531.99,652.02,1532.64,653.43,1533.30,653.43C1533.96,653.43,1534.61,650.38,1535.27,648.98C1535.92,647.58,1536.58,645.00,1537.23,645.00C1537.89,645.00,1538.54,649.49,1539.20,650.85C1539.86,652.22,1540.51,653.19,1541.17,653.19C1541.82,653.19,1542.48,653.04,1543.13,652.72C1543.79,652.41,1544.44,649.68,1545.10,649.68C1545.76,649.68,1546.41,653.11,1547.07,653.43C1547.72,653.74,1548.38,653.89,1549.03,653.89C1549.69,653.89,1550.34,653.27,1551.00,652.02C1551.66,650.77,1552.31,645.00,1552.97,645.00C1553.62,645.00,1554.28,650.85,1554.93,650.85C1555.59,650.85,1556.24,650.62,1556.90,650.62C1557.56,650.62,1558.21,655.53,1558.87,655.53C1559.52,655.53,1560.18,647.81,1560.83,647.81C1561.49,647.81,1562.14,652.26,1562.80,652.26C1563.46,652.26,1564.11,648.75,1564.77,648.75C1565.42,648.75,1566.08,651.40,1566.73,652.02C1567.39,652.65,1568.04,652.96,1568.70,652.96C1569.36,652.96,1570.01,652.02,1570.67,652.02C1571.32,652.02,1571.98,655.77,1572.63,656.70C1573.29,657.64,1573.94,657.87,1574.60,658.11L1575.00,668.00L1527.00,668.00Z" fill="#cae7df"/><path d="M1527.40,663.72C1528.06,659.82,1528.71,655.92,1529.37,654.36C1530.02,652.80,1530.68,652.02,1531.33,652.02C1531.99,652.02,1532.64,653.43,1533.30,653.43C1533.96,653.43,1534.61,650.38,1535.27,648.98C1535.92,647.58,1536.58,645.00,1537.23,645.00C1537.89,645.00,1538.54,649.49,1539.20,650.85C1539.86,652.22,1540.51,653.19,1541.17,653.19C1541.82,653.19,1542.48,653.04,1543.13,652.72C1543.79,652.41,1544.44,649.68,1545.10,649.68C1545.76,649.68,1546.41,653.11,1547.07,653.43C1547.72,653.74,1548.38,653.89,1549.03,653.89C1549.69,653.89,1550.34,653.27,1551.00,652.02C1551.66,650.77,1552.31,645.00,1552.97,645.00C1553.62,645.00,1554.28,650.85,1554.93,650.85C1555.59,650.85,1556.24,650.62,1556.90,650.62C1557.56,650.62,1558.21,655.53,1558.87,655.53C1559.52,655.53,1560.18,647.81,1560.83,647.81C1561.49,647.81,1562.14,652.26,1562.80,652.26C1563.46,652.26,1564.11,648.75,1564.77,648.75C1565.42,648.75,1566.08,651.40,1566.73,652.02C1567.39,652.65,1568.04,652.96,1568.70,652.96C1569.36,652.96,1570.01,652.02,1570.67,652.02C1571.32,652.02,1571.98,655.77,1572.63,656.70C1573.29,657.64,1573.94,657.87,1574.60,658.11" fill="none" stroke="#54b399" stroke-width="1.6" stroke-linejoin="round"/><line x1="1687" y1="667.5" x2="1735" y2="667.5" stroke="#da8b45" stroke-width="1.5"/><rect x="1815" y="652" width="64" height="8" fill="#d3dae6"/><rect x="1815" y="652" width="1.3" height="8" fill="#006bb4"/><path d="M1335.80,836.13C1336.67,843.27,1337.54,850.41,1338.42,850.41C1339.29,850.41,1340.16,845.26,1341.03,845.26C1341.91,845.26,1342.78,847.37,1343.65,847.37C1344.52,847.37,1345.39,845.03,1346.27,845.03C1347.14,845.03,1348.01,845.34,1348.88,845.96C1349.76,846.59,1350.63,852.05,1351.50,852.05C1352.37,852.05,1353.24,848.54,1354.12,848.54C1354.99,848.54,1355.86,849.24,1356.73,849.24C1357.61,849.24,1358.48,849.00,1359.35,848.54C1360.22,848.07,1361.09,844.09,1361.97,844.09C1362.84,844.09,1363.71,852.51,1364.58,852.51C1365.46,852.51,1366.33,849.47,1367.20,849.47C1368.07,849.47,1368.94,854.62,1369.82,854.62C1370.69,854.62,1371.56,854.23,1372.43,853.45C1373.31,852.67,1374.18,845.26,1375.05,845.26C1375.92,845.26,1376.79,846.82,1377.67,848.30C1378.54,849.78,1379.41,854.15,1380.28,854.15C1381.16,854.15,1382.03,841.98,1382.90,841.98C1383.77,841.98,1384.64,847.37,1385.52,848.30C1386.39,849.24,1387.26,849.28,1388.13,849.71C1389.01,850.14,1389.88,850.88,1390.75,850.88C1391.62,850.88,1392.49,845.73,1393.37,845.73C1394.24,845.73,1395.11,853.45,1395.98,853.45C1396.86,853.45,1397.73,852.98,1398.60,852.51L1399.00,859.60L1335.40,859.60Z" fill="#cddbec"/><path d="M1335.80,836.13C1336.67,843.27,1337.54,850.41,1338.42,850.41C1339.29,850.41,1340.16,845.26,1341.03,845.26C1341.91,845.26,1342.78,847.37,1343.65,847.37C1344.52,847.37,1345.39,845.03,1346.27,845.03C1347.14,845.03,1348.01,845.34,1348.88,845.96C1349.76,846.59,1350.63,852.05,1351.50,852.05C1352.37,852.05,1353.24,848.54,1354.12,848.54C1354.99,848.54,1355.86,849.24,1356.73,849.24C1357.61,849.24,1358.48,849.00,1359.35,848.54C1360.22,848.07,1361.09,844.09,1361.97,844.09C1362.84,844.09,1363.71,852.51,1364.58,852.51C1365.46,852.51,1366.33,849.47,1367.20,849.47C1368.07,849.47,1368.94,854.62,1369.82,854.62C1370.69,854.62,1371.56,854.23,1372.43,853.45C1373.31,852.67,1374.18,845.26,1375.05,845.26C1375.92,845.26,1376.79,846.82,1377.67,848.30C1378.54,849.78,1379.41,854.15,1380.28,854.15C1381.16,854.15,1382.03,841.98,1382.90,841.98C1383.77,841.98,1384.64,847.37,1385.52,848.30C1386.39,849.24,1387.26,849.28,1388.13,849.71C1389.01,850.14,1389.88,850.88,1390.75,850.88C1391.62,850.88,1392.49,845.73,1393.37,845.73C1394.24,845.73,1395.11,853.45,1395.98,853.45C1396.86,853.45,1397.73,852.98,1398.60,852.51" fill="none" stroke="#6092c0" stroke-width="1.6" stroke-linejoin="round"/><path d="M1495.70,852.98C1496.35,846.43,1497.00,839.88,1497.65,838.94C1498.30,838.01,1498.95,837.54,1499.60,837.54C1500.25,837.54,1500.90,841.75,1501.55,841.75C1502.20,841.75,1502.85,839.64,1503.50,839.64C1504.15,839.64,1504.80,840.81,1505.45,840.81C1506.10,840.81,1506.75,839.64,1507.40,839.64C1508.05,839.64,1508.70,839.64,1509.35,839.64C1510.00,839.64,1510.65,839.88,1511.30,839.88C1511.95,839.88,1512.60,836.37,1513.25,836.37C1513.90,836.37,1514.55,837.77,1515.20,837.77C1515.85,837.77,1516.50,837.77,1517.15,837.77C1517.80,837.77,1518.45,838.79,1519.10,839.18C1519.75,839.57,1520.40,840.11,1521.05,840.11C1521.70,840.11,1522.35,839.57,1523.00,839.18C1523.65,838.79,1524.30,837.77,1524.95,837.77C1525.60,837.77,1526.25,839.88,1526.90,839.88C1527.55,839.88,1528.20,836.37,1528.85,836.37C1529.50,836.37,1530.15,836.45,1530.80,836.60C1531.45,836.76,1532.10,837.46,1532.75,837.77C1533.40,838.08,1534.05,838.32,1534.70,838.47C1535.35,838.63,1536.00,838.71,1536.65,838.71C1537.30,838.71,1537.95,837.77,1538.60,837.77C1539.25,837.77,1539.90,838.59,1540.55,839.41C1541.20,840.23,1541.85,841.46,1542.50,842.69L1542.90,859.60L1495.30,859.60Z" fill="#cae7df"/><path d="M1495.70,852.98C1496.35,846.43,1497.00,839.88,1497.65,838.94C1498.30,838.01,1498.95,837.54,1499.60,837.54C1500.25,837.54,1500.90,841.75,1501.55,841.75C1502.20,841.75,1502.85,839.64,1503.50,839.64C1504.15,839.64,1504.80,840.81,1505.45,840.81C1506.10,840.81,1506.75,839.64,1507.40,839.64C1508.05,839.64,1508.70,839.64,1509.35,839.64C1510.00,839.64,1510.65,839.88,1511.30,839.88C1511.95,839.88,1512.60,836.37,1513.25,836.37C1513.90,836.37,1514.55,837.77,1515.20,837.77C1515.85,837.77,1516.50,837.77,1517.15,837.77C1517.80,837.77,1518.45,838.79,1519.10,839.18C1519.75,839.57,1520.40,840.11,1521.05,840.11C1521.70,840.11,1522.35,839.57,1523.00,839.18C1523.65,838.79,1524.30,837.77,1524.95,837.77C1525.60,837.77,1526.25,839.88,1526.90,839.88C1527.55,839.88,1528.20,836.37,1528.85,836.37C1529.50,836.37,1530.15,836.45,1530.80,836.60C1531.45,836.76,1532.10,837.46,1532.75,837.77C1533.40,838.08,1534.05,838.32,1534.70,838.47C1535.35,838.63,1536.00,838.71,1536.65,838.71C1537.30,838.71,1537.95,837.77,1538.60,837.77C1539.25,837.77,1539.90,838.59,1540.55,839.41C1541.20,840.23,1541.85,841.46,1542.50,842.69" fill="none" stroke="#54b399" stroke-width="1.6" stroke-linejoin="round"/><path d="M1655.70,837.77C1656.35,837.30,1657.00,836.84,1657.65,836.84C1658.30,836.84,1658.95,841.67,1659.60,843.39C1660.25,845.10,1660.90,847.13,1661.55,847.13C1662.20,847.13,1662.85,836.60,1663.50,836.60C1664.15,836.60,1664.80,839.06,1665.45,839.88C1666.10,840.70,1666.75,841.52,1667.40,841.52C1668.05,841.52,1668.70,839.18,1669.35,838.71C1670.00,838.24,1670.65,838.01,1671.30,838.01C1671.95,838.01,1672.60,843.39,1673.25,843.39C1673.90,843.39,1674.55,841.87,1675.20,841.28C1675.85,840.70,1676.50,839.88,1677.15,839.88C1677.80,839.88,1678.45,840.11,1679.10,840.58C1679.75,841.05,1680.40,845.03,1681.05,845.03C1681.70,845.03,1682.35,839.33,1683.00,838.24C1683.65,837.15,1684.30,836.60,1684.95,836.60C1685.60,836.60,1686.25,841.75,1686.90,841.75C1687.55,841.75,1688.20,840.11,1688.85,840.11C1689.50,840.11,1690.15,842.45,1690.80,842.45C1691.45,842.45,1692.10,836.99,1692.75,836.84C1693.40,836.68,1694.05,836.60,1694.70,836.60C1695.35,836.60,1696.00,837.77,1696.65,839.18C1697.30,840.58,1697.95,844.56,1698.60,845.03C1699.25,845.49,1699.90,845.73,1700.55,845.73C1701.20,845.73,1701.85,843.62,1702.50,841.52L1702.90,859.60L1655.30,859.60Z" fill="#f5dcc7"/><path d="M1655.70,837.77C1656.35,837.30,1657.00,836.84,1657.65,836.84C1658.30,836.84,1658.95,841.67,1659.60,843.39C1660.25,845.10,1660.90,847.13,1661.55,847.13C1662.20,847.13,1662.85,836.60,1663.50,836.60C1664.15,836.60,1664.80,839.06,1665.45,839.88C1666.10,840.70,1666.75,841.52,1667.40,841.52C1668.05,841.52,1668.70,839.18,1669.35,838.71C1670.00,838.24,1670.65,838.01,1671.30,838.01C1671.95,838.01,1672.60,843.39,1673.25,843.39C1673.90,843.39,1674.55,841.87,1675.20,841.28C1675.85,840.70,1676.50,839.88,1677.15,839.88C1677.80,839.88,1678.45,840.11,1679.10,840.58C1679.75,841.05,1680.40,845.03,1681.05,845.03C1681.70,845.03,1682.35,839.33,1683.00,838.24C1683.65,837.15,1684.30,836.60,1684.95,836.60C1685.60,836.60,1686.25,841.75,1686.90,841.75C1687.55,841.75,1688.20,840.11,1688.85,840.11C1689.50,840.11,1690.15,842.45,1690.80,842.45C1691.45,842.45,1692.10,836.99,1692.75,836.84C1693.40,836.68,1694.05,836.60,1694.70,836.60C1695.35,836.60,1696.00,837.77,1696.65,839.18C1697.30,840.58,1697.95,844.56,1698.60,845.03C1699.25,845.49,1699.90,845.73,1700.55,845.73C1701.20,845.73,1701.85,843.62,1702.50,841.52" fill="none" stroke="#da8b45" stroke-width="1.6" stroke-linejoin="round"/><rect x="1815" y="843.8000000000001" width="64" height="8" fill="#006bb4"/><path d="M1335.80,880.64C1336.67,879.59,1337.54,878.54,1338.42,878.54C1339.29,878.54,1340.16,880.88,1341.03,880.88C1341.91,880.88,1342.78,880.33,1343.65,879.94C1344.52,879.55,1345.39,878.54,1346.27,878.54C1347.14,878.54,1348.01,878.62,1348.88,878.77C1349.76,878.93,1350.63,880.88,1351.50,880.88C1352.37,880.88,1353.24,879.47,1354.12,879.47C1354.99,879.47,1355.86,879.71,1356.73,879.71C1357.61,879.71,1358.48,879.71,1359.35,879.71C1360.22,879.71,1361.09,879.36,1361.97,879.01C1362.84,878.66,1363.71,877.60,1364.58,877.60C1365.46,877.60,1366.33,881.11,1367.20,881.11C1368.07,881.11,1368.94,879.67,1369.82,879.24C1370.69,878.81,1371.56,878.54,1372.43,878.54C1373.31,878.54,1374.18,879.94,1375.05,879.94C1375.92,879.94,1376.79,878.54,1377.67,878.54C1378.54,878.54,1379.41,878.65,1380.28,878.77C1381.16,878.89,1382.03,879.12,1382.90,879.24C1383.77,879.36,1384.64,879.47,1385.52,879.47C1386.39,879.47,1387.26,878.54,1388.13,878.54C1389.01,878.54,1389.88,879.47,1390.75,879.47C1391.62,879.47,1392.49,879.05,1393.37,878.77C1394.24,878.50,1395.11,877.84,1395.98,877.84C1396.86,877.84,1397.73,878.77,1398.60,879.71L1399.00,900.60L1335.40,900.60Z" fill="#cddbec"/><path d="M1335.80,880.64C1336.67,879.59,1337.54,878.54,1338.42,878.54C1339.29,878.54,1340.16,880.88,1341.03,880.88C1341.91,880.88,1342.78,880.33,1343.65,879.94C1344.52,879.55,1345.39,878.54,1346.27,878.54C1347.14,878.54,1348.01,878.62,1348.88,878.77C1349.76,878.93,1350.63,880.88,1351.50,880.88C1352.37,880.88,1353.24,879.47,1354.12,879.47C1354.99,879.47,1355.86,879.71,1356.73,879.71C1357.61,879.71,1358.48,879.71,1359.35,879.71C1360.22,879.71,1361.09,879.36,1361.97,879.01C1362.84,878.66,1363.71,877.60,1364.58,877.60C1365.46,877.60,1366.33,881.11,1367.20,881.11C1368.07,881.11,1368.94,879.67,1369.82,879.24C1370.69,878.81,1371.56,878.54,1372.43,878.54C1373.31,878.54,1374.18,879.94,1375.05,879.94C1375.92,879.94,1376.79,878.54,1377.67,878.54C1378.54,878.54,1379.41,878.65,1380.28,878.77C1381.16,878.89,1382.03,879.12,1382.90,879.24C1383.77,879.36,1384.64,879.47,1385.52,879.47C1386.39,879.47,1387.26,878.54,1388.13,878.54C1389.01,878.54,1389.88,879.47,1390.75,879.47C1391.62,879.47,1392.49,879.05,1393.37,878.77C1394.24,878.50,1395.11,877.84,1395.98,877.84C1396.86,877.84,1397.73,878.77,1398.60,879.71" fill="none" stroke="#6092c0" stroke-width="1.6" stroke-linejoin="round"/><path d="M1495.70,894.45C1496.35,889.03,1497.00,883.61,1497.65,881.11C1498.30,878.62,1498.95,877.37,1499.60,877.37C1500.25,877.37,1500.90,883.69,1501.55,883.69C1502.20,883.69,1502.85,881.19,1503.50,880.18C1504.15,879.16,1504.80,877.60,1505.45,877.60C1506.10,877.60,1506.75,878.50,1507.40,879.01C1508.05,879.51,1508.70,880.64,1509.35,880.64C1510.00,880.64,1510.65,878.30,1511.30,878.30C1511.95,878.30,1512.60,878.38,1513.25,878.54C1513.90,878.69,1514.55,880.88,1515.20,880.88C1515.85,880.88,1516.50,880.72,1517.15,880.41C1517.80,880.10,1518.45,879.01,1519.10,878.54C1519.75,878.07,1520.40,877.60,1521.05,877.60C1521.70,877.60,1522.35,879.94,1523.00,879.94C1523.65,879.94,1524.30,878.30,1524.95,878.30C1525.60,878.30,1526.25,880.64,1526.90,880.64C1527.55,880.64,1528.20,877.60,1528.85,877.60C1529.50,877.60,1530.15,878.66,1530.80,879.01C1531.45,879.36,1532.10,879.24,1532.75,879.71C1533.40,880.18,1534.05,881.35,1534.70,881.81C1535.35,882.28,1536.00,882.52,1536.65,882.52C1537.30,882.52,1537.95,877.60,1538.60,877.60C1539.25,877.60,1539.90,877.91,1540.55,878.54C1541.20,879.16,1541.85,882.01,1542.50,884.86L1542.90,900.60L1495.30,900.60Z" fill="#cae7df"/><path d="M1495.70,894.45C1496.35,889.03,1497.00,883.61,1497.65,881.11C1498.30,878.62,1498.95,877.37,1499.60,877.37C1500.25,877.37,1500.90,883.69,1501.55,883.69C1502.20,883.69,1502.85,881.19,1503.50,880.18C1504.15,879.16,1504.80,877.60,1505.45,877.60C1506.10,877.60,1506.75,878.50,1507.40,879.01C1508.05,879.51,1508.70,880.64,1509.35,880.64C1510.00,880.64,1510.65,878.30,1511.30,878.30C1511.95,878.30,1512.60,878.38,1513.25,878.54C1513.90,878.69,1514.55,880.88,1515.20,880.88C1515.85,880.88,1516.50,880.72,1517.15,880.41C1517.80,880.10,1518.45,879.01,1519.10,878.54C1519.75,878.07,1520.40,877.60,1521.05,877.60C1521.70,877.60,1522.35,879.94,1523.00,879.94C1523.65,879.94,1524.30,878.30,1524.95,878.30C1525.60,878.30,1526.25,880.64,1526.90,880.64C1527.55,880.64,1528.20,877.60,1528.85,877.60C1529.50,877.60,1530.15,878.66,1530.80,879.01C1531.45,879.36,1532.10,879.24,1532.75,879.71C1533.40,880.18,1534.05,881.35,1534.70,881.81C1535.35,882.28,1536.00,882.52,1536.65,882.52C1537.30,882.52,1537.95,877.60,1538.60,877.60C1539.25,877.60,1539.90,877.91,1540.55,878.54C1541.20,879.16,1541.85,882.01,1542.50,884.86" fill="none" stroke="#54b399" stroke-width="1.6" stroke-linejoin="round"/><line x1="1655.3" y1="900" x2="1703" y2="900" stroke="#da8b45" stroke-width="1.5"/><rect x="1815" y="884.8000000000001" width="64" height="8" fill="#d3dae6"/><path d="M1866.7,448.5v9.5M1866.7,458.2l4,-4M1866.7,458.2l-4,-4" fill="none" stroke="#1a1c21" stroke-width="1.1"/><path d="M1866.5,804.5v9.5M1866.5,814.2l4,-4M1866.5,814.2l-4,-4" fill="none" stroke="#1a1c21" stroke-width="1.1"/><path d="M1775.7,700.5l-4.6,5.5l4.6,5.5" fill="none" stroke="#abb4c4" stroke-width="1.1"/><path d="M1872.5,700.5l4.6,5.5l-4.6,5.5" fill="none" stroke="#343741" stroke-width="1.1"/><path d="M1828.4,1056.5l-4.6,5.5l4.6,5.5" fill="none" stroke="#abb4c4" stroke-width="1.1"/><path d="M1872.6,1056.5l4.6,5.5l-4.6,5.5" fill="none" stroke="#abb4c4" stroke-width="1.1"/></svg>
<svg class="ov" width="1920" height="1080" viewBox="0 0 1920 1080"><g transform="translate(12,12) scale(0.75)"><path fill="#fff" d="M32 16.77a6.334 6.334 0 00-1.14-3.63 6.298 6.298 0 00-3.02-2.3 9.098 9.098 0 00-.954-6.372A9.098 9.098 0 0021.772.32a9.001 9.001 0 00-6.14.15A9.049 9.049 0 0010.86 4.4a4.856 4.856 0 00-5.784.12 4.856 4.856 0 00-1.584 5.564 6.434 6.434 0 00-3.04 2.32A6.354 6.354 0 00-.1 16.07a6.334 6.334 0 001.15 3.65 6.298 6.298 0 003.04 2.3 9.069 9.069 0 00.94 6.364 9.069 9.069 0 005.11 3.91 9.001 9.001 0 006.14-.15 9.029 9.029 0 004.77-3.93 4.856 4.856 0 005.774-.13 4.856 4.856 0 001.594-5.55 6.434 6.434 0 003.04-2.32A6.354 6.354 0 0032 16.77"/><path fill="#FEC514" d="M12.58 13.787l7.002 3.211 7.066-6.213a7.849 7.849 0 00.152-1.557c0-4.287-3.465-7.762-7.74-7.762a7.72 7.72 0 00-6.375 3.358l-1.18 6.1 1.075 2.863z"/><path fill="#00BFB3" d="M5.333 21.215a7.98 7.98 0 00-.15 1.58c0 4.3 3.487 7.78 7.787 7.78 2.58 0 4.98-1.28 6.43-3.41l1.17-6.08-1.56-2.98-7.03-3.21-6.647 6.32z"/><path fill="#F04E98" d="M5.293 9.067l4.8 1.137 1.05-5.47a3.79 3.79 0 00-6.05 3.03c0 .453.08.89.2 1.303"/><path fill="#1BA9F5" d="M4.87 10.213a5.404 5.404 0 00-3.66 5.1 5.39 5.39 0 003.46 5.04l6.73-6.1-1.24-2.65-5.29-1.39z"/><path fill="#93C90E" d="M20.87 27.163a3.768 3.768 0 002.31.8 3.79 3.79 0 003.79-3.79c0-.46-.08-.9-.23-1.3l-4.79-1.12-1.08 5.41z"/><path fill="#0077CC" d="M21.85 20.563l5.27 1.23a5.425 5.425 0 003.66-5.11 5.38 5.38 0 00-3.47-5.03l-6.9 6.06 1.44 2.85z"/></g><circle cx="762.3" cy="23.2" r="4.9" fill="none" stroke="#b9bbc1" stroke-width="1"/><path d="M765.7,26.8l3.3,3.4" stroke="#b9bbc1" stroke-width="1"/><g fill="none" stroke="#fff"><circle cx="1799.9" cy="23.9" r="7.5" stroke-width="1.35"/><circle cx="1799.9" cy="23.9" r="4.3" stroke-width="1.45"/><path d="M1803.15,27.15L1805.06,29.06" stroke-width="2.1"/><path d="M1796.65,27.15L1794.74,29.06" stroke-width="2.1"/><path d="M1796.65,20.65L1794.74,18.74" stroke-width="2.1"/><path d="M1803.15,20.65L1805.06,18.74" stroke-width="2.1"/></g><g fill="none" stroke="#fff" stroke-width="1.15" stroke-linejoin="round" stroke-linecap="round"><path d="M1844.3,19.6L1840.4,29.6a0.6,0.6 0 0 0 0.7,0.8L1851,27.6a0.6,0.6 0 0 0 0.3,-1L1845.2,19.5a0.55,0.55 0 0 0 -0.9,0.1z"/><path d="M1845.3,24.2l3.4,3.7M1843.3,27.3l0.2,0.2"/><path d="M1844.1,17.3c0.8,-1 2.4,-1.4 3.6,-0.5c1.3,1 1.4,2.4 0.8,3.6"/><path d="M1852.7,24.4c1.2,-0.4 2.4,0 2.9,1.2c0.5,1.3 -0.2,2.6 -1.3,3.3"/><path d="M1850.9,20l-1.3,2.4l3,-1.1"/></g><circle cx="1850.5" cy="17.4" r="0.65" fill="#fff"/><circle cx="1854.4" cy="16.6" r="0.65" fill="#fff"/><circle cx="1853.4" cy="18.5" r="0.65" fill="#fff"/><circle cx="1854.4" cy="20.4" r="0.65" fill="#fff"/><circle cx="1859.9" cy="12" r="5.1" fill="#dd0a73"/><circle cx="1896" cy="24" r="12" fill="#f1d86f"/><rect x="16" y="67" width="16" height="2" fill="#1a1c21"/><rect x="16" y="72" width="16" height="2" fill="#1a1c21"/><rect x="16" y="77" width="16" height="2" fill="#1a1c21"/><path d="M1396.23,65.51L1399.77,65.51L1400.16,67.41L1400.72,68.18L1401.67,68.28L1403.51,67.67L1405.29,70.74L1403.84,72.03L1403.45,72.90L1403.84,73.77L1405.29,75.06L1403.51,78.13L1401.67,77.52L1400.72,77.62L1400.16,78.39L1399.77,80.29L1396.23,80.29L1395.84,78.39L1395.28,77.62L1394.33,77.52L1392.49,78.13L1390.71,75.06L1392.16,73.77L1392.55,72.90L1392.16,72.03L1390.71,70.74L1392.49,67.67L1394.33,68.28L1395.28,68.18L1395.84,67.41Z" fill="none" stroke="#006bb4" stroke-width="1.15" stroke-linejoin="round"/><circle cx="1398" cy="72.9" r="2.45" fill="none" stroke="#006bb4" stroke-width="1.15"/><path d="M1564.3,70.3l5.7,5.2l5.7,-5.2" fill="none" stroke="#006bb4" stroke-width="1.1"/><g fill="none" stroke="#006bb4" stroke-width="1.05" stroke-linecap="round"><path d="M1625.4,69.7v-1.7a1.5,1.5 0 0 0 -1.5,-1.5h-10a1.5,1.5 0 0 0 -1.5,1.5v9.9a1.5,1.5 0 0 0 1.5,1.5h1.7"/><circle cx="1621" cy="74.9" r="4.4"/><path d="M1624.2,78.1l3.1,3.1"/></g><circle cx="1614.5" cy="68.5" r="0.6" fill="#006bb4"/><circle cx="1616.5" cy="68.5" r="0.6" fill="#006bb4"/><circle cx="1618.5" cy="68.5" r="0.6" fill="#006bb4"/><circle cx="1620.5" cy="68.5" r="0.6" fill="#006bb4"/><circle cx="1622.5" cy="68.5" r="0.6" fill="#006bb4"/><circle cx="1614.5" cy="70.5" r="0.6" fill="#006bb4"/><circle cx="1616.5" cy="70.5" r="0.6" fill="#006bb4"/><circle cx="1614.5" cy="72.5" r="0.6" fill="#006bb4"/><circle cx="1614.5" cy="74.5" r="0.6" fill="#006bb4"/><circle cx="1614.5" cy="76.5" r="0.6" fill="#006bb4"/><g fill="none" stroke="#006bb4" stroke-width="1.05"><rect x="1812.5" y="66.5" width="11" height="12" rx="0.6"/><path d="M1816.4,69.5h5.2M1816.4,72.5h3M1816.4,75.5h2" stroke-linecap="round"/></g><circle cx="1814.5" cy="69.5" r="0.62" fill="#006bb4"/><circle cx="1814.5" cy="72.5" r="0.62" fill="#006bb4"/><circle cx="1814.5" cy="75.5" r="0.62" fill="#006bb4"/><circle cx="1821.5" cy="75.5" r="4.3" fill="#006bb4"/><path d="M1821.5,73.2v4.6M1819.2,75.5h4.6" stroke="#fff" stroke-width="1.05" stroke-linecap="round"/><path d="M292.6,135.8l4.4,4l4.4,-4" fill="none" stroke="#343741" stroke-width="1.1"/><g fill="none" stroke-linecap="round" stroke-linejoin="round"><path d="M627.5,836.3C628,838 627.6,839.2 626.3,840.3C625,841.4 622.6,842.8 622.3,844.4C622,846 623,847 624,848.2" stroke="#e0393e" stroke-width="1.35"/><path d="M629.7,841.5C628.4,841.6 626.4,842.8 625.8,844.2C625.2,845.8 627.6,847 627.5,848.2C627.4,849 626.8,849.4 626.3,849.7" stroke="#e0393e" stroke-width="1.35"/><path d="M618.3,850.6C620,850 621,850.4 623,850.5C625.5,850.6 627.5,850.5 629.3,850.3" stroke="#5b8fc7" stroke-width="1.1" opacity="0.8"/><path d="M631.7,849.3C633.2,849 634.2,850 633.9,851.2C633.6,852.2 632.8,852.7 632,853" stroke="#1f6fb5" stroke-width="1.15"/><path d="M620.3,852.3C620.3,853.2 624,853.6 628.7,852.7" stroke="#2f78bb" stroke-width="1.15"/><path d="M621.3,855.5C623,856.2 626.5,856.1 628,855.5" stroke="#1f6fb5" stroke-width="1.2"/><path d="M617.6,856.6C615.2,857.6 617.5,858.4 621,858.8C626,859.3 631,859.4 633.5,858.3C634.2,857.9 633.4,857.6 632.6,857.4" stroke="#3b7fbf" stroke-width="1.05" opacity="0.9"/></g><path d="M616.5,878.73L621.17,878.73L622.5,879.5L623.83,878.67L632.5,878.57C633.6,878.9 634.3,879.5 634.83,880.17C635.3,880.7 635.6,881.2 635.67,881.67C635.8,882.6 635.8,883.5 635.5,884.5C635.2,885.6 634.8,886.6 634.33,887.5L633.17,890L635.17,891.17C635.6,891.4 635.7,891.6 635.6,891.83C635.5,892.1 635.3,892.3 635,892.4C633.8,892.7 632.5,892.7 631.17,892.67L630.5,896.67C630.4,897.5 630.2,898.2 629.83,898.67C629.3,899.2 628.6,899.4 627.83,899.4C627.2,899.4 626.6,899.3 626.17,899C625.8,898.7 625.6,898.2 625.5,897.67L625.6,893.83C624.5,893.5 623.3,893.33 622.17,893.33L618,893.33C617.6,893.1 617.3,892.8 617,892.33C616.5,891.5 616.1,890.6 615.73,889.67C615.2,888.4 614.85,887 614.6,885.67C614.4,884.2 614.4,882.8 614.5,881.33C614.7,880.5 615,879.9 615.5,879.33C615.8,879 616.1,878.85 616.5,878.73Z" fill="#336791" stroke="#2a2c33" stroke-width="3.3" stroke-linejoin="round"/><path d="M616.5,878.73L621.17,878.73L622.5,879.5L623.83,878.67L632.5,878.57C633.6,878.9 634.3,879.5 634.83,880.17C635.3,880.7 635.6,881.2 635.67,881.67C635.8,882.6 635.8,883.5 635.5,884.5C635.2,885.6 634.8,886.6 634.33,887.5L633.17,890L635.17,891.17C635.6,891.4 635.7,891.6 635.6,891.83C635.5,892.1 635.3,892.3 635,892.4C633.8,892.7 632.5,892.7 631.17,892.67L630.5,896.67C630.4,897.5 630.2,898.2 629.83,898.67C629.3,899.2 628.6,899.4 627.83,899.4C627.2,899.4 626.6,899.3 626.17,899C625.8,898.7 625.6,898.2 625.5,897.67L625.6,893.83C624.5,893.5 623.3,893.33 622.17,893.33L618,893.33C617.6,893.1 617.3,892.8 617,892.33C616.5,891.5 616.1,890.6 615.73,889.67C615.2,888.4 614.85,887 614.6,885.67C614.4,884.2 614.4,882.8 614.5,881.33C614.7,880.5 615,879.9 615.5,879.33C615.8,879 616.1,878.85 616.5,878.73Z" fill="#336791" stroke="#f4f6fa" stroke-width="1.15" stroke-linejoin="round"/><g stroke="#eef2f8" stroke-width="0.85" fill="none" stroke-linecap="round" stroke-linejoin="round"><path d="M622.5,879.5C620.83,881 620.33,883.33 620.4,889.33L621.5,891.5"/><path d="M621.5,884C623.33,883 624.67,884 624.5,888.67L622.67,891.33"/><path d="M628.67,878.5C631.33,880.67 632.83,883.33 632.83,887.33L633.33,889.67"/><path d="M629.33,884.67C631.33,883.33 632.17,884 632,888.67L629.33,886.67Z"/></g></svg>
<span class="t" style="top:13.00px;font-size:24px;line-height:24px;color:#fff;left:44.40px;transform-origin:0 50%;transform:scaleX(0.9349);">elastic</span>
<span class="t" style="top:17.00px;font-size:14px;line-height:14px;color:#8e9197;left:780.70px;letter-spacing:0.163px;">Search Elastic</span>
<span class="t" style="top:16.00px;font-size:14px;line-height:14px;color:#1a1c21;left:1892.10px;letter-spacing:0.000px;">a</span>
<span class="t" style="top:67.00px;font-size:12px;line-height:12px;color:#1a1c21;font-weight:700;left:64.70px;transform-origin:0 50%;transform:scaleX(0.9736);">V7</span>
<span class="t" style="top:66.00px;font-size:14px;line-height:14px;color:#69707d;left:108.00px;letter-spacing:-0.022px;">APM</span>
<span class="t" style="top:66.00px;font-size:14px;line-height:14px;color:#c3c8d1;left:144.50px;">/</span>
<span class="t" style="top:66.00px;font-size:14px;line-height:14px;color:#69707d;left:156.30px;letter-spacing:0.330px;">Services</span>
<span class="t" style="top:66.00px;font-size:14px;line-height:14px;color:#c3c8d1;left:218.50px;">/</span>
<span class="t" style="top:66.00px;font-size:14px;line-height:14px;color:#69707d;left:229.70px;letter-spacing:0.607px;">opbeans-ruby</span>
<span class="t" style="top:66.00px;font-size:14px;line-height:14px;color:#c3c8d1;left:328.00px;">/</span>
<span class="t" style="top:66.00px;font-size:14px;line-height:14px;color:#343741;font-weight:700;left:339.30px;letter-spacing:0.062px;">Overview</span>
<span class="t" style="top:65.00px;font-size:16px;line-height:16px;color:#006bb4;left:1414.70px;letter-spacing:0.441px;">Settings</span>
<span class="t" style="top:65.00px;font-size:16px;line-height:16px;color:#006bb4;left:1510.20px;letter-spacing:0.459px;">Alerts</span>
<span class="t" style="top:65.00px;font-size:16px;line-height:16px;color:#006bb4;left:1636.70px;letter-spacing:0.479px;">Anomaly detection</span>
<span class="t" style="top:65.00px;font-size:16px;line-height:16px;color:#006bb4;left:1835.00px;letter-spacing:0.520px;">Add data</span>
<span class="t" style="top:130.00px;font-size:16px;line-height:16px;color:#1a1c21;font-weight:700;left:33.40px;letter-spacing:-0.228px;">Latency</span>
<span class="t" style="top:133.00px;font-size:12px;line-height:12px;color:#343741;font-weight:700;left:126.00px;letter-spacing:0.271px;">Metric</span>
<span class="t" style="top:131.00px;font-size:14px;line-height:14px;color:#343741;left:179.30px;letter-spacing:0.182px;">Average</span>
<span class="t" style="top:203.00px;font-size:10px;line-height:10px;color:#69707d;left:52.70px;letter-spacing:0.241px;">200 ms</span>
<span class="t" style="top:244.00px;font-size:10px;line-height:10px;color:#69707d;left:54.00px;letter-spacing:-0.019px;">100 ms</span>
<span class="t" style="top:285.00px;font-size:10px;line-height:10px;color:#69707d;left:64.30px;letter-spacing:0.243px;">0 ms</span>
<span class="t" style="top:300.00px;font-size:10px;line-height:10px;color:#69707d;left:102.30px;letter-spacing:-0.027px;">11:00:00</span>
<span class="t" style="top:300.00px;font-size:10px;line-height:10px;color:#69707d;left:321.45px;letter-spacing:0.080px;">14:00:00</span>
<span class="t" style="top:300.00px;font-size:10px;line-height:10px;color:#69707d;left:541.35px;letter-spacing:0.080px;">17:00:00</span>
<span class="t" style="top:300.00px;font-size:10px;line-height:10px;color:#69707d;left:760.50px;letter-spacing:0.295px;">20:00:00</span>
<span class="t" style="top:300.00px;font-size:10px;line-height:10px;color:#69707d;left:980.40px;letter-spacing:0.295px;">23:00:00</span>
<span class="t" style="top:300.00px;font-size:10px;line-height:10px;color:#69707d;left:1200.30px;letter-spacing:0.295px;">02:00:00</span>
<span class="t" style="top:300.00px;font-size:10px;line-height:10px;color:#69707d;left:1420.20px;letter-spacing:0.295px;">05:00:00</span>
<span class="t" style="top:300.00px;font-size:10px;line-height:10px;color:#69707d;left:1640.10px;letter-spacing:0.295px;">08:00:00</span>
<span class="t" style="top:339.00px;font-size:12px;line-height:12px;color:#343741;left:63.00px;letter-spacing:0.136px;">Average</span>
<span class="t" style="top:339.00px;font-size:12px;line-height:12px;color:#343741;left:210.70px;letter-spacing:0.128px;">201 ms</span>
<span class="t" style="top:408.00px;font-size:16px;line-height:16px;color:#1a1c21;font-weight:700;left:34.30px;transform-origin:0 50%;transform:scaleX(0.9694);">Throughput</span>
<span class="t" style="top:498.00px;font-size:10px;line-height:10px;color:#69707d;left:52.00px;letter-spacing:0.154px;">10.0 tpm</span>
<span class="t" style="top:569.00px;font-size:10px;line-height:10px;color:#69707d;left:57.30px;letter-spacing:0.223px;">5.0 tpm</span>
<span class="t" style="top:639.00px;font-size:10px;line-height:10px;color:#69707d;left:65.30px;letter-spacing:0.421px;">0 tpm</span>
<span class="t" style="top:654.00px;font-size:10px;line-height:10px;color:#69707d;left:89.00px;letter-spacing:-0.027px;">11:00:00</span>
<span class="t" style="top:654.00px;font-size:10px;line-height:10px;color:#69707d;left:141.85px;letter-spacing:0.080px;">14:00:00</span>
<span class="t" style="top:654.00px;font-size:10px;line-height:10px;color:#69707d;left:195.45px;letter-spacing:0.080px;">17:00:00</span>
<span class="t" style="top:654.00px;font-size:10px;line-height:10px;color:#69707d;left:248.30px;letter-spacing:0.295px;">20:00:00</span>
<span class="t" style="top:654.00px;font-size:10px;line-height:10px;color:#69707d;left:301.90px;letter-spacing:0.295px;">23:00:00</span>
<span class="t" style="top:654.00px;font-size:10px;line-height:10px;color:#69707d;left:355.50px;letter-spacing:0.295px;">02:00:00</span>
<span class="t" style="top:654.00px;font-size:10px;line-height:10px;color:#69707d;left:409.10px;letter-spacing:0.295px;">05:00:00</span>
<span class="t" style="top:654.00px;font-size:10px;line-height:10px;color:#69707d;left:462.70px;letter-spacing:0.295px;">08:00:00</span>
<span class="t" style="top:693.00px;font-size:12px;line-height:12px;color:#343741;left:63.00px;letter-spacing:0.401px;">Throughput</span>
<span class="t" style="top:693.00px;font-size:12px;line-height:12px;color:#343741;left:244.00px;letter-spacing:0.211px;">2.6 tpm</span>
<span class="t" style="top:764.00px;font-size:16px;line-height:16px;color:#1a1c21;font-weight:700;left:33.60px;letter-spacing:-0.201px;">Time spent by span type</span>
<span class="t" style="top:802.00px;font-size:10px;line-height:10px;color:#69707d;left:52.40px;transform-origin:0 50%;transform:scaleX(0.9383);">100%</span>
<span class="t" style="top:874.00px;font-size:10px;line-height:10px;color:#69707d;left:57.40px;transform-origin:0 50%;transform:scaleX(0.9493);">50%</span>
<span class="t" style="top:945.00px;font-size:10px;line-height:10px;color:#69707d;left:63.30px;transform-origin:0 50%;transform:scaleX(0.9064);">0%</span>
<span class="t" style="top:960.00px;font-size:10px;line-height:10px;color:#69707d;left:78.55px;letter-spacing:-0.241px;">11:13:20</span>
<span class="t" style="top:960.00px;font-size:10px;line-height:10px;color:#69707d;left:128.41px;letter-spacing:0.080px;">14:00:00</span>
<span class="t" style="top:960.00px;font-size:10px;line-height:10px;color:#69707d;left:179.77px;letter-spacing:0.080px;">16:46:40</span>
<span class="t" style="top:960.00px;font-size:10px;line-height:10px;color:#69707d;left:231.13px;letter-spacing:0.080px;">19:33:20</span>
<span class="t" style="top:960.00px;font-size:10px;line-height:10px;color:#69707d;left:281.74px;letter-spacing:0.295px;">22:20:00</span>
<span class="t" style="top:960.00px;font-size:10px;line-height:10px;color:#69707d;left:333.85px;letter-spacing:0.080px;">01:06:40</span>
<span class="t" style="top:960.00px;font-size:10px;line-height:10px;color:#69707d;left:384.46px;letter-spacing:0.295px;">03:53:20</span>
<span class="t" style="top:960.00px;font-size:10px;line-height:10px;color:#69707d;left:435.82px;letter-spacing:0.295px;">06:40:00</span>
<span class="t" style="top:960.00px;font-size:10px;line-height:10px;color:#69707d;left:487.18px;letter-spacing:0.295px;">09:26:40</span>
<span class="t" style="top:999.00px;font-size:12px;line-height:12px;color:#343741;left:63.00px;letter-spacing:0.695px;">view</span>
<span class="t" style="top:1025.00px;font-size:12px;line-height:12px;color:#343741;left:63.00px;letter-spacing:0.473px;">http_rb</span>
<span class="t" style="top:999.00px;font-size:12px;line-height:12px;color:#343741;left:322.00px;letter-spacing:0.469px;">postgresql</span>
<span class="t" style="top:1025.00px;font-size:12px;line-height:12px;color:#343741;left:322.00px;letter-spacing:0.427px;">controller</span>
<span class="t" style="top:408.00px;font-size:16px;line-height:16px;color:#1a1c21;font-weight:700;left:605.30px;letter-spacing:-0.182px;">Transactions</span>
<span class="t" style="top:404.00px;font-size:16px;line-height:16px;color:#006bb4;left:1753.90px;letter-spacing:0.487px;">View transactions</span>
<span class="t" style="top:448.00px;font-size:12px;line-height:12px;color:#1a1c21;font-weight:700;left:613.30px;letter-spacing:0.004px;">Name</span>
<span class="t" style="top:448.00px;font-size:12px;line-height:12px;color:#1a1c21;font-weight:700;left:1367.20px;letter-spacing:0.115px;">Latency (avg.)</span>
<span class="t" style="top:448.00px;font-size:12px;line-height:12px;color:#1a1c21;font-weight:700;left:1527.30px;letter-spacing:0.110px;">Throughput</span>
<span class="t" style="top:448.00px;font-size:12px;line-height:12px;color:#1a1c21;font-weight:700;left:1687.40px;letter-spacing:-0.000px;">Error rate</span>
<span class="t" style="top:448.00px;font-size:12px;line-height:12px;color:#1a1c21;font-weight:700;left:1815.20px;letter-spacing:0.182px;">Impact</span>
<span class="t" style="top:484.00px;font-size:14px;line-height:14px;color:#006bb4;left:613.30px;letter-spacing:-0.069px;">Rack</span>
<span class="t" style="top:483.00px;font-size:14px;line-height:14px;color:#343741;left:1432.10px;letter-spacing:0.136px;">165 ms</span>
<span class="t" style="top:483.00px;font-size:14px;line-height:14px;color:#343741;left:1591.00px;letter-spacing:0.483px;">4.8 tpm</span>
<span class="t" style="top:483.00px;font-size:14px;line-height:14px;color:#343741;left:1751.50px;transform-origin:0 50%;transform:scaleX(0.9461);">1.6%</span>
<span class="t" style="top:525.00px;font-size:14px;line-height:14px;color:#006bb4;left:613.30px;letter-spacing:0.357px;">Api::CustomersController#index</span>
<span class="t" style="top:524.00px;font-size:14px;line-height:14px;color:#343741;left:1432.10px;letter-spacing:-0.006px;">12 ms</span>
<span class="t" style="top:524.00px;font-size:14px;line-height:14px;color:#343741;left:1591.00px;letter-spacing:0.483px;">1.0 tpm</span>
<span class="t" style="top:524.00px;font-size:14px;line-height:14px;color:#343741;left:1751.50px;transform-origin:0 50%;transform:scaleX(0.9143);">0%</span>
<span class="t" style="top:566.00px;font-size:14px;line-height:14px;color:#006bb4;left:613.30px;letter-spacing:0.415px;">Api::ProductsController#top</span>
<span class="t" style="top:565.00px;font-size:14px;line-height:14px;color:#343741;left:1432.10px;letter-spacing:-0.006px;">19 ms</span>
<span class="t" style="top:565.00px;font-size:14px;line-height:14px;color:#343741;left:1591.00px;letter-spacing:0.483px;">0.5 tpm</span>
<span class="t" style="top:565.00px;font-size:14px;line-height:14px;color:#343741;left:1751.50px;transform-origin:0 50%;transform:scaleX(0.9143);">0%</span>
<span class="t" style="top:607.00px;font-size:14px;line-height:14px;color:#006bb4;left:613.30px;letter-spacing:0.333px;">Api::OrdersController#index</span>
<span class="t" style="top:606.00px;font-size:14px;line-height:14px;color:#343741;left:1432.10px;letter-spacing:-0.006px;">22 ms</span>
<span class="t" style="top:606.00px;font-size:14px;line-height:14px;color:#343741;left:1591.00px;letter-spacing:0.483px;">0.4 tpm</span>
<span class="t" style="top:606.00px;font-size:14px;line-height:14px;color:#343741;left:1751.50px;transform-origin:0 50%;transform:scaleX(0.9143);">0%</span>
<span class="t" style="top:648.00px;font-size:14px;line-height:14px;color:#006bb4;left:613.30px;letter-spacing:0.353px;">Api::StatsController#index</span>
<span class="t" style="top:647.00px;font-size:14px;line-height:14px;color:#343741;left:1432.10px;letter-spacing:-0.006px;">14 ms</span>
<span class="t" style="top:647.00px;font-size:14px;line-height:14px;color:#343741;left:1591.00px;letter-spacing:0.483px;">0.6 tpm</span>
<span class="t" style="top:647.00px;font-size:14px;line-height:14px;color:#343741;left:1751.50px;transform-origin:0 50%;transform:scaleX(0.9143);">0%</span>
<span class="t" style="top:699.00px;font-size:14px;line-height:14px;color:#006bb4;font-weight:700;left:1793.50px;letter-spacing:0.000px;text-decoration:underline;">1</span>
<span class="t" style="top:699.00px;font-size:14px;line-height:14px;color:#343741;left:1818.90px;letter-spacing:0.000px;">2</span>
<span class="t" style="top:699.00px;font-size:14px;line-height:14px;color:#343741;left:1845.80px;letter-spacing:0.000px;">3</span>
<span class="t" style="top:764.00px;font-size:16px;line-height:16px;color:#1a1c21;font-weight:700;left:605.20px;letter-spacing:-0.126px;">Dependencies</span>
<span class="t" style="top:760.00px;font-size:16px;line-height:16px;color:#006bb4;left:1754.70px;letter-spacing:0.454px;">View service map</span>
<span class="t" style="top:804.00px;font-size:12px;line-height:12px;color:#1a1c21;font-weight:700;left:613.30px;letter-spacing:-0.055px;">Backend</span>
<span class="t" style="top:804.00px;font-size:12px;line-height:12px;color:#1a1c21;font-weight:700;left:1335.40px;letter-spacing:0.146px;">Latency (avg.)</span>
<span class="t" style="top:804.00px;font-size:12px;line-height:12px;color:#1a1c21;font-weight:700;left:1495.50px;letter-spacing:0.076px;">Throughput</span>
<span class="t" style="top:804.00px;font-size:12px;line-height:12px;color:#1a1c21;font-weight:700;left:1655.30px;letter-spacing:0.033px;">Error rate</span>
<span class="t" style="top:804.00px;font-size:12px;line-height:12px;color:#1a1c21;font-weight:700;left:1815.10px;letter-spacing:0.203px;">Impact</span>
<span class="t" style="top:839.00px;font-size:14px;line-height:14px;color:#006bb4;left:645.30px;letter-spacing:0.422px;">opbeans-java</span>
<span class="t" style="top:880.00px;font-size:14px;line-height:14px;color:#343741;left:645.30px;letter-spacing:0.490px;">postgresql</span>
<span class="t" style="top:839.00px;font-size:14px;line-height:14px;color:#343741;left:1415.80px;letter-spacing:0.156px;">149 ms</span>
<span class="t" style="top:880.00px;font-size:14px;line-height:14px;color:#343741;left:1415.80px;letter-spacing:0.037px;">1.3 ms</span>
<span class="t" style="top:839.00px;font-size:14px;line-height:14px;color:#343741;left:1559.40px;letter-spacing:0.416px;">4.3 tpm</span>
<span class="t" style="top:880.00px;font-size:14px;line-height:14px;color:#343741;left:1559.40px;letter-spacing:0.416px;">7.9 tpm</span>
<span class="t" style="top:839.00px;font-size:14px;line-height:14px;color:#343741;left:1719.80px;letter-spacing:-0.292px;">11%</span>
<span class="t" style="top:880.00px;font-size:14px;line-height:14px;color:#343741;left:1719.80px;transform-origin:0 50%;transform:scaleX(0.8945);">0%</span>
<span class="t" style="top:1055.00px;font-size:14px;line-height:14px;color:#006bb4;font-weight:700;left:1846.40px;letter-spacing:0.000px;text-decoration:underline;">1</span>
</body></html>
